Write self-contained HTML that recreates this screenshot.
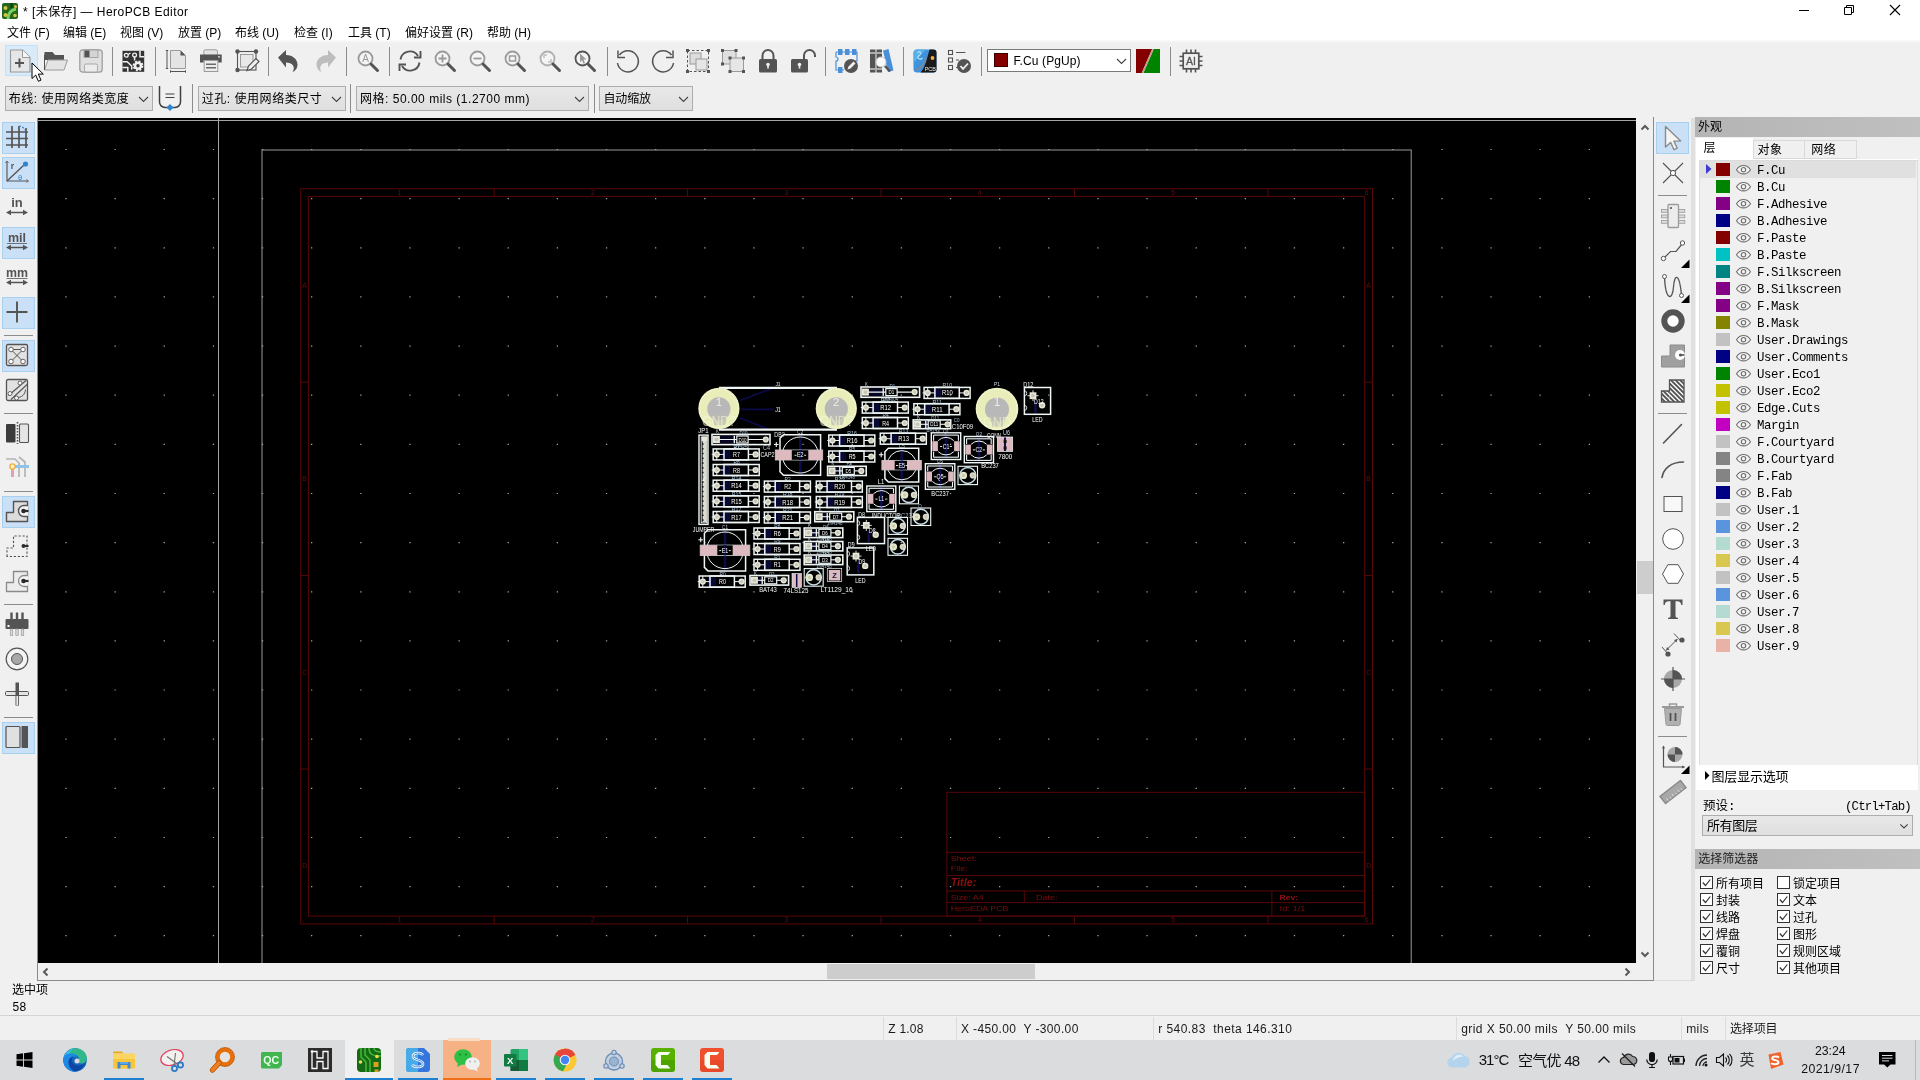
<!DOCTYPE html>
<html lang="zh-CN"><head><meta charset="utf-8"><title>HeroPCB Editor</title>
<style>
html,body{margin:0;padding:0;}
body{width:1920px;height:1080px;overflow:hidden;position:relative;background:#f0f0f0;font-family:"Liberation Sans","Noto Sans CJK SC",sans-serif;font-size:12px;color:#000;}
#root{position:absolute;left:0;top:0;width:1920px;height:1080px;will-change:transform;}
.a{position:absolute;}
.t{position:absolute;line-height:0;white-space:pre;font-family:"Liberation Sans","Noto Sans CJK SC",sans-serif;font-size:12px;}
.m{position:absolute;line-height:0;white-space:pre;font-family:"Liberation Mono","Noto Sans CJK SC",monospace;font-size:12px;}
svg{overflow:visible;}
svg text{font-family:"Liberation Sans","Noto Sans CJK SC",sans-serif;}
</style></head>
<body>
<div id="root">
<div class="a" style="left:0px;top:0px;width:1920px;height:39px;background:#fff;"></div><div class="a" style="left:0px;top:39px;width:1920px;height:4px;background:linear-gradient(#fff,#f0f0f0);"></div><svg class="a" style="left:2px;top:3px;" width="16" height="16" viewBox="0 0 16 16"><rect x="0" y="0" width="16" height="16" rx="2" fill="#1f6a1f"/><path d="M6 16c0-6 3-9 8-10" stroke="#7fd060" stroke-width="3" fill="none"/><path d="M9.500 0v5" stroke="#0d3d0d" stroke-width="2"/><circle cx="3.500" cy="5" r="2" fill="#d8c040"/><circle cx="3.500" cy="12" r="2" fill="#d8c040"/><circle cx="13" cy="12.500" r="1.800" fill="#d8c040"/><circle cx="13.500" cy="3.500" r="1.500" fill="#d8c040"/></svg><div class="t" style="top:11.84px;left:23px;letter-spacing:0.45px;">* [未保存] — HeroPCB Editor</div><svg class="a" style="left:1799px;top:5px;" width="102" height="11" viewBox="0 0 102 11"><path d="M0 5.500h10" stroke="#000" stroke-width="1"/><path d="M45.500 2.500h7v7h-7zM47.500 2.500v-2h7v7h-2" fill="none" stroke="#000" stroke-width="1"/><path d="M91 0l10 10M101 0l-10 10" stroke="#000" stroke-width="1.100"/></svg><div class="t" style="top:32.84px;left:7px;">文件 (F)</div><div class="t" style="top:32.84px;left:63px;">编辑 (E)</div><div class="t" style="top:32.84px;left:120px;">视图 (V)</div><div class="t" style="top:32.84px;left:178px;">放置 (P)</div><div class="t" style="top:32.84px;left:235px;">布线 (U)</div><div class="t" style="top:32.84px;left:294px;">检查 (I)</div><div class="t" style="top:32.84px;left:348px;">工具 (T)</div><div class="t" style="top:32.84px;left:405px;">偏好设置 (R)</div><div class="t" style="top:32.84px;left:487px;">帮助 (H)</div><div class="a" style="left:5px;top:45px;width:33px;height:31px;background:#d9ebf9;border:1px solid #c4e0f6;box-sizing:border-box;"></div><svg class="a" style="left:9px;top:49px;" width="24" height="24" viewBox="0 0 24 24"><path d="M1.500 1h12l7.500 7.500v14.500h-19.500z" fill="#e6e6e6" stroke="#9a9a9a" stroke-width="1.200" stroke-linejoin="round"/><path d="M13.500 1v7.500h7.500" fill="#f6f6f6" stroke="#9a9a9a" stroke-width="1"/><path d="M10.500 9.500v9M6 14h9" stroke="#545454" stroke-width="2" fill="none"/></svg><svg class="a" style="left:43.5px;top:49px;" width="24" height="24" viewBox="0 0 24 24"><path d="M0.5 3h8l2.5 3h9v5h-20z" fill="#545454"/><path d="M0.5 21l3.5-10h19.5l-3.5 10z" fill="#e4e4e4" stroke="#9a9a9a" stroke-width="1"/><path d="M0.5 6v15" stroke="#545454" stroke-width="1"/></svg><svg class="a" style="left:78.5px;top:49px;" width="24" height="24" viewBox="0 0 24 24"><rect x="0.8" y="0.8" width="22.4" height="22.4" rx="3" fill="#e0e0e0" stroke="#9a9a9a" stroke-width="1.2"/><rect x="5" y="1" width="14" height="7.5" fill="#d4d4d4" stroke="#9a9a9a" stroke-width=".8"/><rect x="5.5" y="1.5" width="5" height="6.5" fill="#545454"/><rect x="5.5" y="15" width="13" height="8" rx="1.5" fill="#ececec" stroke="#9a9a9a" stroke-width=".8"/></svg><div class="a" style="left:112.0px;top:47px;width:1px;height:29px;background:#8c8c8c;"></div><svg class="a" style="left:122px;top:49px;" width="24" height="24" viewBox="0 0 24 24"><rect x="0.500" y="1.800" width="21.700" height="21" fill="#343434"/><path d="M0.500 12.700h4.600l4.600 4.300v3.500M12.600 8v3.500M18 1.800v6h4.200M0.500 18.500h5.300v4.300" stroke="#f0f0f0" stroke-width="1.500" fill="none"/><circle cx="4.300" cy="6.300" r="1.900" fill="#343434" stroke="#f0f0f0" stroke-width="1.300"/><path d="M6 5.500l2.500-1.500" stroke="#f0f0f0" stroke-width="1.300"/><circle cx="12.600" cy="6" r="1.900" fill="#343434" stroke="#f0f0f0" stroke-width="1.300"/><circle cx="16" cy="16.800" r="4.300" fill="#f0f0f0" stroke="#f0f0f0" stroke-width="2.200" stroke-dasharray="1.800 1.580"/><circle cx="16" cy="16.800" r="3.800" fill="#f0f0f0"/><circle cx="16" cy="16.800" r="1.700" fill="#343434"/></svg><div class="a" style="left:155.0px;top:47px;width:1px;height:29px;background:#8c8c8c;"></div><svg class="a" style="left:164.5px;top:49px;" width="24" height="24" viewBox="0 0 24 24"><path d="M5.5 1.5h10l5 5v13h-15z" fill="#e4e4e4" stroke="#9a9a9a" stroke-width="1"/><path d="M15.5 1.5l5 5h-5z" fill="#545454"/><path d="M2 1.5v18M0.8 1.5h2.4M0.8 19.5h2.4" stroke="#545454" stroke-width="1" fill="none"/><path d="M5.5 22.5h15M5.5 21.3v2.4M20.5 21.3v2.4" stroke="#545454" stroke-width="1" fill="none"/></svg><svg class="a" style="left:199px;top:49px;" width="24" height="24" viewBox="0 0 24 24"><rect x="4.800" y="0.800" width="13.700" height="5.500" rx="1.500" fill="#e4e4e4" stroke="#9a9a9a" stroke-width="1"/><path d="M1 5.500h21.700v8h-3.700v-2.500h-14.300v2.500h-3.700z" fill="#545454"/><rect x="5.200" y="11.500" width="13.600" height="11" fill="#ececec" stroke="#9a9a9a" stroke-width="1"/><path d="M7 15.200h10M7 18.700h10" stroke="#6a6a6a" stroke-width="1.600"/><circle cx="20" cy="7.800" r="0.900" fill="#f0f0f0"/></svg><svg class="a" style="left:234.5px;top:49px;" width="24" height="24" viewBox="0 0 24 24"><rect x="2.5" y="2.5" width="18.5" height="18.5" fill="none" stroke="#545454" stroke-width="1.1"/><rect x="5.5" y="5.5" width="12.5" height="12.5" fill="#e8e8e8" stroke="#9a9a9a" stroke-width="1"/><circle cx="2.5" cy="2.5" r="2.2" fill="#545454"/><circle cx="21" cy="2.5" r="2.2" fill="#545454"/><circle cx="2.5" cy="21" r="2.2" fill="#545454"/><path d="M12 21.5l1.5-4.5 7.5-7.5 3 3-7.5 7.5z" fill="#f0f0f0" stroke="#545454" stroke-width="1.2"/></svg><div class="a" style="left:268.0px;top:47px;width:1px;height:29px;background:#8c8c8c;"></div><svg class="a" style="left:276.5px;top:49px;" width="24" height="24" viewBox="0 0 24 24"><path d="M1 8.5l8-7.5v5c7 0 11.5 4.5 11.5 9.5 0 3.5-2 6.5-5 7.5 1.5-2.5 1.800-4.500 .5-6.500-1.500-2.300-4-3-7-3v5z" fill="#545454"/></svg><svg class="a" style="left:313px;top:49px;" width="24" height="24" viewBox="0 0 24 24"><path d="M23 8.5l-8-7.5v5c-7 0-11.500 4.500-11.500 9.500 0 3.500 2 6.500 5 7.500-1.500-2.500-1.800-4.500-.5-6.500 1.500-2.300 4-3 7-3v5z" fill="#bdbdbd"/></svg><div class="a" style="left:346.0px;top:47px;width:1px;height:29px;background:#8c8c8c;"></div><svg class="a" style="left:355.5px;top:49px;" width="24" height="24" viewBox="0 0 24 24"><circle cx="9.5" cy="9.5" r="7" fill="#f4f4f4" stroke="#9a9a9a" stroke-width="1.8"/><line x1="15" y1="15" x2="21.5" y2="21.5" stroke="#545454" stroke-width="3" stroke-linecap="round"/><text x="9.5" y="13.2" font-size="10" text-anchor="middle" fill="#9a9a9a" font-family="Liberation Sans, sans-serif">A</text></svg><div class="a" style="left:389.0px;top:47px;width:1px;height:29px;background:#8c8c8c;"></div><svg class="a" style="left:398px;top:49px;" width="24" height="24" viewBox="0 0 24 24"><path d="M2.500 10.500a9.500 9.500 0 0 1 17.500-3.500" fill="none" stroke="#545454" stroke-width="1.9"/><path d="M21.500 13.500a9.500 9.500 0 0 1-17.500 3.500" fill="none" stroke="#545454" stroke-width="1.9"/><path d="M16 8.500h6.500v-6.500" fill="none" stroke="#545454" stroke-width="1.900"/><path d="M8 15.500h-6.500v6.500" fill="none" stroke="#545454" stroke-width="1.900"/></svg><svg class="a" style="left:433px;top:49px;" width="24" height="24" viewBox="0 0 24 24"><circle cx="9.5" cy="9.5" r="7" fill="#f4f4f4" stroke="#9a9a9a" stroke-width="1.8"/><line x1="15" y1="15" x2="21.5" y2="21.5" stroke="#545454" stroke-width="3" stroke-linecap="round"/><path d="M9.5 5.500v8M5.500 9.500h8" stroke="#9a9a9a" stroke-width="1.8"/></svg><svg class="a" style="left:467.5px;top:49px;" width="24" height="24" viewBox="0 0 24 24"><circle cx="9.5" cy="9.5" r="7" fill="#f4f4f4" stroke="#9a9a9a" stroke-width="1.8"/><line x1="15" y1="15" x2="21.5" y2="21.5" stroke="#545454" stroke-width="3" stroke-linecap="round"/><path d="M5.500 9.500h8" stroke="#9a9a9a" stroke-width="1.8"/></svg><svg class="a" style="left:502.5px;top:49px;" width="24" height="24" viewBox="0 0 24 24"><circle cx="9.5" cy="9.5" r="7" fill="#f4f4f4" stroke="#9a9a9a" stroke-width="1.8"/><line x1="15" y1="15" x2="21.5" y2="21.5" stroke="#545454" stroke-width="3" stroke-linecap="round"/><rect x="6.500" y="7" width="6" height="5" fill="none" stroke="#9a9a9a" stroke-width="1.5"/></svg><svg class="a" style="left:538px;top:49px;" width="24" height="24" viewBox="0 0 24 24"><circle cx="9.5" cy="9.5" r="7" fill="#f4f4f4" stroke="#b0b0b0" stroke-width="1.8"/><line x1="15" y1="15" x2="21.5" y2="21.5" stroke="#545454" stroke-width="3" stroke-linecap="round"/><path d="M6 9v-3h3M13 10v3h-3" fill="none" stroke="#c0c0c0" stroke-width="1.5"/></svg><svg class="a" style="left:573px;top:49px;" width="24" height="24" viewBox="0 0 24 24"><circle cx="9.5" cy="9.5" r="7" fill="#f4f4f4" stroke="#545454" stroke-width="1.8"/><line x1="15" y1="15" x2="21.5" y2="21.5" stroke="#545454" stroke-width="3" stroke-linecap="round"/><path d="M7 4.500l6.500 6h-3l1.500 3.500-1.500.7-1.500-3.500-2 2z" fill="#9a9a9a"/></svg><div class="a" style="left:607.0px;top:47px;width:1px;height:29px;background:#8c8c8c;"></div><svg class="a" style="left:615.5px;top:49px;" width="24" height="24" viewBox="0 0 24 24"><path d="M3.500 6a10.500 10.500 0 1 1-2 8" fill="none" stroke="#545454" stroke-width="1.500"/><path d="M2 1.500v7h7" fill="none" stroke="#545454" stroke-width="1.500"/></svg><svg class="a" style="left:650.5px;top:49px;" width="24" height="24" viewBox="0 0 24 24"><path d="M20.500 6a10.500 10.500 0 1 0 2 8" fill="none" stroke="#545454" stroke-width="1.500"/><path d="M22 1.500v7h-7" fill="none" stroke="#545454" stroke-width="1.500"/></svg><svg class="a" style="left:686px;top:49px;" width="24" height="24" viewBox="0 0 24 24"><rect x="1.5" y="1.5" width="21" height="21" fill="none" stroke="#545454" stroke-width="1" stroke-dasharray="2.500 2"/><rect x="4" y="4" width="11" height="11" fill="#dcdcdc" stroke="#9a9a9a" stroke-width="1"/><rect x="10" y="10" width="11" height="11" fill="#e6e6e6" stroke="#9a9a9a" stroke-width="1"/><rect x="0" y="0" width="3" height="3" fill="#545454"/><rect x="21" y="0" width="3" height="3" fill="#545454"/><rect x="0" y="21" width="3" height="3" fill="#545454"/><rect x="21" y="21" width="3" height="3" fill="#545454"/></svg><svg class="a" style="left:721px;top:49px;" width="24" height="24" viewBox="0 0 24 24"><rect x="1.500" y="1.500" width="13.500" height="13.500" fill="#e0e0e0" stroke="#9a9a9a" stroke-width="1"/><rect x="9" y="9" width="13.500" height="13.500" fill="#e6e6e6" stroke="#9a9a9a" stroke-width="1"/><rect x="0" y="0" width="3" height="3" fill="#545454"/><rect x="13.5" y="0" width="3" height="3" fill="#545454"/><rect x="0" y="13.5" width="3" height="3" fill="#545454"/><rect x="7.5" y="7.5" width="3" height="3" fill="#545454"/><rect x="21" y="7.5" width="3" height="3" fill="#545454"/><rect x="7.5" y="21" width="3" height="3" fill="#545454"/><rect x="21" y="21" width="3" height="3" fill="#545454"/></svg><svg class="a" style="left:756px;top:49px;" width="24" height="24" viewBox="0 0 24 24"><path d="M6.500 10v-3.500a5.500 5.500 0 0 1 11 0v3.500" fill="none" stroke="#545454" stroke-width="2"/><rect x="3" y="10" width="18" height="13.500" rx="1.500" fill="#545454"/><circle cx="12" cy="15.500" r="1.800" fill="#f0f0f0"/><rect x="11.200" y="15.500" width="1.600" height="4" fill="#f0f0f0"/></svg><svg class="a" style="left:791px;top:49px;" width="24" height="24" viewBox="0 0 24 24"><path d="M13 10v-3.500a5.500 5.500 0 0 1 11 0v1.500" fill="none" stroke="#545454" stroke-width="2"/><rect x="0" y="10" width="17" height="13.500" rx="1.500" fill="#545454"/><circle cx="8.500" cy="15.500" r="1.800" fill="#f0f0f0"/><rect x="7.700" y="15.500" width="1.600" height="4" fill="#f0f0f0"/></svg><div class="a" style="left:825.0px;top:47px;width:1px;height:29px;background:#8c8c8c;"></div><svg class="a" style="left:834px;top:49px;" width="24" height="24" viewBox="0 0 24 24"><path d="M2 3h21v9h-2M2 3v5a2 2 0 0 1 0 4v9h8" fill="none" stroke="#4a90d9" stroke-width="1.200"/><rect x="4" y="0" width="4.500" height="6" fill="#4a90d9"/><rect x="11" y="0" width="4.500" height="6" fill="#4a90d9"/><rect x="18" y="0" width="4.500" height="6" fill="#4a90d9"/><rect x="4" y="18" width="4.500" height="6" fill="#4a90d9"/><circle cx="17" cy="17" r="7" fill="#545454"/><path d="M13.500 20.500l1-3 5-5 2 2-5 5z" fill="#f0f0f0"/></svg><svg class="a" style="left:869px;top:49px;" width="24" height="24" viewBox="0 0 24 24"><rect x="1" y="0.500" width="5.500" height="23" fill="#545454"/><rect x="7.500" y="0.500" width="5.500" height="23" fill="#545454"/><path d="M1 4h5.500M7.500 4h5.500M1 20h5.500M7.500 20h5.500" stroke="#c8c8c8" stroke-width="1.300"/><path d="M14 1.500l5.500-1.500 5 21.500-5.500 1.500z" fill="#4a90d9"/><circle cx="12" cy="13" r="5" fill="#fafafa" stroke="#c8c8c8" stroke-width="1"/><line x1="16" y1="17" x2="21" y2="22.500" stroke="#545454" stroke-width="2.500"/></svg><div class="a" style="left:903.0px;top:47px;width:1px;height:29px;background:#8c8c8c;"></div><svg class="a" style="left:912.5px;top:49px;" width="24" height="24" viewBox="0 0 24 24"><rect x="0.5" y="0.5" width="23" height="23" rx="3.500" fill="#3f92dc"/><path d="M0.500 14v-10a3.500 3.500 0 0 1 3.500-3.500h9z" fill="#56b0ea"/><path d="M16.500 0.500h4a3 3 0 0 1 3 3v17a3 3 0 0 1-3 3h-13c4.500-4.500 6.500-14 9-23z" fill="#1a1a1a"/><path d="M2 21c5-1 9.500-5 11.500-13" stroke="#7c8894" stroke-width="1.600" fill="none"/><path d="M4.500 4c1.500-2 4.500-1 3 1s-4 3-2 4.500 3.500 0 4-.5" stroke="#b8e4fa" stroke-width="1.100" fill="none"/><circle cx="19.500" cy="9" r="1.900" fill="#f0b040"/><text x="17.300" y="21.800" font-size="5.500" fill="#e8e8e8" text-anchor="middle" font-family="Liberation Sans, sans-serif">PCB</text></svg><svg class="a" style="left:947px;top:49px;" width="24" height="24" viewBox="0 0 24 24"><rect x="1.500" y="1.5" width="4" height="4" fill="#f4f4f4" stroke="#545454" stroke-width="1.100"/><rect x="1.500" y="9" width="4" height="4" fill="#f4f4f4" stroke="#545454" stroke-width="1.100"/><rect x="1.500" y="16.5" width="4" height="4" fill="#f4f4f4" stroke="#545454" stroke-width="1.100"/><path d="M9 3.500h9.500M9 11h3M9 18.500h2" stroke="#545454" stroke-width="1.200"/><circle cx="17" cy="17" r="7" fill="#545454"/><path d="M13.500 17l2.500 2.800 5-5.300" fill="none" stroke="#f0f0f0" stroke-width="1.800"/></svg><div class="a" style="left:981.0px;top:47px;width:1px;height:29px;background:#8c8c8c;"></div><svg class="a" style="left:1136px;top:49px;" width="24" height="24" viewBox="0 0 24 24"><rect x="0" y="0" width="24" height="24" fill="#840000"/><path d="M17.500 0h6.500v24h-17z" fill="#008400"/><path d="M6.500 24L17 0" stroke="#f4f4e8" stroke-width="1.700"/><path d="M6.500 24L17 0" stroke="#702020" stroke-width=".5"/></svg><div class="a" style="left:1170.0px;top:47px;width:1px;height:29px;background:#8c8c8c;"></div><svg class="a" style="left:1179px;top:49px;" width="24" height="24" viewBox="0 0 24 24"><rect x="4.200" y="4.200" width="15.600" height="15.600" fill="none" stroke="#545454" stroke-width="1.700"/><path d="M7.5 0.500v3.500M7.5 20v3.500M0.500 7.5h3.500M20 7.5h3.500" stroke="#545454" stroke-width="1.600"/><path d="M12 0.500v3.500M12 20v3.500M0.500 12h3.500M20 12h3.500" stroke="#545454" stroke-width="1.600"/><path d="M16.5 0.500v3.500M16.5 20v3.500M0.500 16.5h3.500M20 16.5h3.500" stroke="#545454" stroke-width="1.600"/><text x="12" y="16" font-size="10.500" text-anchor="middle" fill="#545454" font-family="Liberation Sans, sans-serif" stroke="#545454" stroke-width=".3">AI</text></svg><div class="a" style="left:987px;top:49px;width:144px;height:23px;background:#fff;border:1px solid #7a7a7a;box-sizing:border-box;"></div><div class="a" style="left:994px;top:53px;width:14px;height:14px;background:#840000;border:1px solid #3a0000;box-sizing:border-box;"></div><div class="t" style="top:60.84px;left:1013.5px;letter-spacing:0.11px;">F.Cu (PgUp)</div><svg class="a" style="left:1117.0px;top:58.75px;" width="9" height="4.5" viewBox="0 0 9 4.5"><path d="M0 0l4.5 4.5l4.5 -4.5" fill="none" stroke="#444" stroke-width="1.1"/></svg><svg class="a" style="left:31px;top:62px;" width="14" height="21" viewBox="0 0 14 21"><path d="M1 1v15.500l3.700-3.400 2.700 6.200 2.600-1.200-2.700-6h5z" fill="#fff" stroke="#000" stroke-width="1" stroke-linejoin="miter"/></svg><div class="a" style="left:5px;top:86px;width:148px;height:25px;background:linear-gradient(#e8e8e8,#dfdfdf);border:1px solid #adadad;box-sizing:border-box;"></div><div class="t" style="top:98.84px;left:8.7px;letter-spacing:0.54px;">布线: 使用网络类宽度</div><svg class="a" style="left:139.0px;top:96.75px;" width="9" height="4.5" viewBox="0 0 9 4.5"><path d="M0 0l4.5 4.5l4.5 -4.5" fill="none" stroke="#444" stroke-width="1.1"/></svg><svg class="a" style="left:158.3px;top:85.3px;" width="24" height="24" viewBox="0 0 24 24"><path d="M1.5 1v16a5.500 5.500 0 0 0 5.500 5.500h10a5.500 5.500 0 0 0 5.500-5.500v-16" fill="none" stroke="#404040" stroke-width="1.500"/><path d="M7.500 9h9M7.500 12.500h9" stroke="#404040" stroke-width="1.100"/><rect x="9.500" y="20" width="5" height="5" transform="rotate(45 12 22.500)" fill="#2e86d0"/></svg><div class="a" style="left:192px;top:84px;width:1px;height:29px;background:#8c8c8c;"></div><div class="a" style="left:198px;top:86px;width:148px;height:25px;background:linear-gradient(#e8e8e8,#dfdfdf);border:1px solid #adadad;box-sizing:border-box;"></div><div class="t" style="top:98.84px;left:201.7px;letter-spacing:0.54px;">过孔: 使用网络类尺寸</div><svg class="a" style="left:332.0px;top:96.75px;" width="9" height="4.5" viewBox="0 0 9 4.5"><path d="M0 0l4.5 4.5l4.5 -4.5" fill="none" stroke="#444" stroke-width="1.1"/></svg><div class="a" style="left:350px;top:84px;width:1px;height:29px;background:#8c8c8c;"></div><div class="a" style="left:356px;top:86px;width:233px;height:25px;background:linear-gradient(#e8e8e8,#dfdfdf);border:1px solid #adadad;box-sizing:border-box;"></div><div class="t" style="top:98.84px;left:360px;letter-spacing:0.51px;">网格: 50.00 mils (1.2700 mm)</div><svg class="a" style="left:575.0px;top:96.75px;" width="9" height="4.5" viewBox="0 0 9 4.5"><path d="M0 0l4.5 4.5l4.5 -4.5" fill="none" stroke="#444" stroke-width="1.1"/></svg><div class="a" style="left:593.5px;top:84px;width:1px;height:29px;background:#8c8c8c;"></div><div class="a" style="left:599px;top:86px;width:94px;height:25px;background:linear-gradient(#e8e8e8,#dfdfdf);border:1px solid #adadad;box-sizing:border-box;"></div><div class="t" style="top:98.84px;left:603.5px;letter-spacing:-0.13px;">自动缩放</div><svg class="a" style="left:679.0px;top:96.75px;" width="9" height="4.5" viewBox="0 0 9 4.5"><path d="M0 0l4.5 4.5l4.5 -4.5" fill="none" stroke="#444" stroke-width="1.1"/></svg><svg class="a" style="left:38px;top:118px;overflow:hidden" width="1598" height="845" viewBox="0 0 1598 845"><rect x="0" y="0" width="1598" height="845" fill="#000"/><rect x="224.0" y="32.0" width="1149.2" height="814.6" fill="none" stroke="#9a9a9a" stroke-width="1"/><rect x="262.7" y="70.7" width="1071.8" height="735.2" fill="none" stroke="#5a0707" stroke-width="1"/><rect x="270.4" y="78.4" width="1056.3" height="719.7" fill="none" stroke="#5a0707" stroke-width="1"/><line x1="456.2" y1="70.7" x2="456.2" y2="78.4" stroke="#5a0707" stroke-width="1" /><line x1="456.2" y1="798.1" x2="456.2" y2="805.9" stroke="#5a0707" stroke-width="1" /><line x1="649.6" y1="70.7" x2="649.6" y2="78.4" stroke="#5a0707" stroke-width="1" /><line x1="649.6" y1="798.1" x2="649.6" y2="805.9" stroke="#5a0707" stroke-width="1" /><line x1="843.1" y1="70.7" x2="843.1" y2="78.4" stroke="#5a0707" stroke-width="1" /><line x1="843.1" y1="798.1" x2="843.1" y2="805.9" stroke="#5a0707" stroke-width="1" /><line x1="1036.6" y1="70.7" x2="1036.6" y2="78.4" stroke="#5a0707" stroke-width="1" /><line x1="1036.6" y1="798.1" x2="1036.6" y2="805.9" stroke="#5a0707" stroke-width="1" /><line x1="1230.0" y1="70.7" x2="1230.0" y2="78.4" stroke="#5a0707" stroke-width="1" /><line x1="1230.0" y1="798.1" x2="1230.0" y2="805.9" stroke="#5a0707" stroke-width="1" /><text x="359.4" y="77.0" font-size="6.8" fill="#640b0b" text-anchor="start" >1</text><text x="359.4" y="804.4" font-size="6.8" fill="#640b0b" text-anchor="start" >1</text><text x="552.9" y="77.0" font-size="6.8" fill="#640b0b" text-anchor="start" >2</text><text x="552.9" y="804.4" font-size="6.8" fill="#640b0b" text-anchor="start" >2</text><text x="746.4" y="77.0" font-size="6.8" fill="#640b0b" text-anchor="start" >3</text><text x="746.4" y="804.4" font-size="6.8" fill="#640b0b" text-anchor="start" >3</text><text x="939.8" y="77.0" font-size="6.8" fill="#640b0b" text-anchor="start" >4</text><text x="939.8" y="804.4" font-size="6.8" fill="#640b0b" text-anchor="start" >4</text><text x="1133.3" y="77.0" font-size="6.8" fill="#640b0b" text-anchor="start" >5</text><text x="1133.3" y="804.4" font-size="6.8" fill="#640b0b" text-anchor="start" >5</text><text x="1326.7" y="77.0" font-size="6.8" fill="#640b0b" text-anchor="start" >6</text><text x="1326.7" y="804.4" font-size="6.8" fill="#640b0b" text-anchor="start" >6</text><line x1="262.7" y1="264.2" x2="270.4" y2="264.2" stroke="#5a0707" stroke-width="1" /><line x1="1326.7" y1="264.2" x2="1334.5" y2="264.2" stroke="#5a0707" stroke-width="1" /><line x1="262.7" y1="457.6" x2="270.4" y2="457.6" stroke="#5a0707" stroke-width="1" /><line x1="1326.7" y1="457.6" x2="1334.5" y2="457.6" stroke="#5a0707" stroke-width="1" /><line x1="262.7" y1="651.1" x2="270.4" y2="651.1" stroke="#5a0707" stroke-width="1" /><line x1="1326.7" y1="651.1" x2="1334.5" y2="651.1" stroke="#5a0707" stroke-width="1" /><text x="266.6" y="169.8" font-size="6.8" fill="#640b0b" text-anchor="middle" >A</text><text x="1330.6" y="169.8" font-size="6.8" fill="#640b0b" text-anchor="middle" >A</text><text x="266.6" y="363.3" font-size="6.8" fill="#640b0b" text-anchor="middle" >B</text><text x="1330.6" y="363.3" font-size="6.8" fill="#640b0b" text-anchor="middle" >B</text><text x="266.6" y="556.8" font-size="6.8" fill="#640b0b" text-anchor="middle" >C</text><text x="1330.6" y="556.8" font-size="6.8" fill="#640b0b" text-anchor="middle" >C</text><text x="266.6" y="750.2" font-size="6.8" fill="#640b0b" text-anchor="middle" >D</text><text x="1330.6" y="750.2" font-size="6.8" fill="#640b0b" text-anchor="middle" >D</text><rect x="908.9" y="674.3" width="417.9" height="123.8" fill="none" stroke="#5a0707" stroke-width="1"/><line x1="908.9" y1="784.6" x2="1326.7" y2="784.6" stroke="#5a0707" stroke-width="1" /><line x1="908.9" y1="773.0" x2="1326.7" y2="773.0" stroke="#5a0707" stroke-width="1" /><line x1="908.9" y1="757.5" x2="1326.7" y2="757.5" stroke="#5a0707" stroke-width="1" /><line x1="908.9" y1="734.3" x2="1326.7" y2="734.3" stroke="#5a0707" stroke-width="1" /><line x1="986.3" y1="773.0" x2="986.3" y2="784.6" stroke="#5a0707" stroke-width="1" /><line x1="1233.9" y1="773.0" x2="1233.9" y2="798.1" stroke="#5a0707" stroke-width="1" /><text transform="translate(912.7 743.0) scale(1.12 1)" font-size="8.1" fill="#7c0d0d" text-anchor="start" >Sheet:</text><text transform="translate(912.7 753.4) scale(1.12 1)" font-size="8.1" fill="#7c0d0d" text-anchor="start" >File:</text><text x="912.7" y="768.3" font-size="10.8" fill="#8c0f0f" text-anchor="start" font-weight="bold" font-style="italic">Title:</text><text transform="translate(912.7 782.1) scale(1.12 1)" font-size="8.1" fill="#7c0d0d" text-anchor="start" >Size: A4</text><text transform="translate(997.9 782.1) scale(1.12 1)" font-size="8.1" fill="#7c0d0d" text-anchor="start" >Date:</text><text transform="translate(1241.6 782.1) scale(1.05 1)" font-size="8.1" fill="#9a1010" text-anchor="start" font-weight="bold">Rev:</text><text transform="translate(912.7 792.9) scale(1.1 1)" font-size="8.1" fill="#7c0d0d" text-anchor="start" >HeroEDA PCB</text><text transform="translate(1241.6 792.9) scale(1.15 1)" font-size="8.1" fill="#7c0d0d" text-anchor="start" >Id: 1/1</text><path d="M27.3 31.5h1.3M76.5 31.5h1.3M125.6 31.5h1.3M174.8 31.5h1.3M223.9 31.5h1.3M273.0 31.5h1.3M322.2 31.5h1.3M371.3 31.5h1.3M420.5 31.5h1.3M469.6 31.5h1.3M518.7 31.5h1.3M567.9 31.5h1.3M617.0 31.5h1.3M666.2 31.5h1.3M715.3 31.5h1.3M764.4 31.5h1.3M813.6 31.5h1.3M862.7 31.5h1.3M911.9 31.5h1.3M961.0 31.5h1.3M1010.1 31.5h1.3M1059.3 31.5h1.3M1108.4 31.5h1.3M1157.6 31.5h1.3M1206.7 31.5h1.3M1255.8 31.5h1.3M1305.0 31.5h1.3M1354.1 31.5h1.3M1403.3 31.5h1.3M1452.4 31.5h1.3M1501.5 31.5h1.3M1550.7 31.5h1.3M27.3 80.6h1.3M76.5 80.6h1.3M125.6 80.6h1.3M174.8 80.6h1.3M223.9 80.6h1.3M273.0 80.6h1.3M322.2 80.6h1.3M371.3 80.6h1.3M420.5 80.6h1.3M469.6 80.6h1.3M518.7 80.6h1.3M567.9 80.6h1.3M617.0 80.6h1.3M666.2 80.6h1.3M715.3 80.6h1.3M764.4 80.6h1.3M813.6 80.6h1.3M862.7 80.6h1.3M911.9 80.6h1.3M961.0 80.6h1.3M1010.1 80.6h1.3M1059.3 80.6h1.3M1108.4 80.6h1.3M1157.6 80.6h1.3M1206.7 80.6h1.3M1255.8 80.6h1.3M1305.0 80.6h1.3M1354.1 80.6h1.3M1403.3 80.6h1.3M1452.4 80.6h1.3M1501.5 80.6h1.3M1550.7 80.6h1.3M27.3 129.8h1.3M76.5 129.8h1.3M125.6 129.8h1.3M174.8 129.8h1.3M223.9 129.8h1.3M273.0 129.8h1.3M322.2 129.8h1.3M371.3 129.8h1.3M420.5 129.8h1.3M469.6 129.8h1.3M518.7 129.8h1.3M567.9 129.8h1.3M617.0 129.8h1.3M666.2 129.8h1.3M715.3 129.8h1.3M764.4 129.8h1.3M813.6 129.8h1.3M862.7 129.8h1.3M911.9 129.8h1.3M961.0 129.8h1.3M1010.1 129.8h1.3M1059.3 129.8h1.3M1108.4 129.8h1.3M1157.6 129.8h1.3M1206.7 129.8h1.3M1255.8 129.8h1.3M1305.0 129.8h1.3M1354.1 129.8h1.3M1403.3 129.8h1.3M1452.4 129.8h1.3M1501.5 129.8h1.3M1550.7 129.8h1.3M27.3 178.9h1.3M76.5 178.9h1.3M125.6 178.9h1.3M174.8 178.9h1.3M223.9 178.9h1.3M273.0 178.9h1.3M322.2 178.9h1.3M371.3 178.9h1.3M420.5 178.9h1.3M469.6 178.9h1.3M518.7 178.9h1.3M567.9 178.9h1.3M617.0 178.9h1.3M666.2 178.9h1.3M715.3 178.9h1.3M764.4 178.9h1.3M813.6 178.9h1.3M862.7 178.9h1.3M911.9 178.9h1.3M961.0 178.9h1.3M1010.1 178.9h1.3M1059.3 178.9h1.3M1108.4 178.9h1.3M1157.6 178.9h1.3M1206.7 178.9h1.3M1255.8 178.9h1.3M1305.0 178.9h1.3M1354.1 178.9h1.3M1403.3 178.9h1.3M1452.4 178.9h1.3M1501.5 178.9h1.3M1550.7 178.9h1.3M27.3 228.1h1.3M76.5 228.1h1.3M125.6 228.1h1.3M174.8 228.1h1.3M223.9 228.1h1.3M273.0 228.1h1.3M322.2 228.1h1.3M371.3 228.1h1.3M420.5 228.1h1.3M469.6 228.1h1.3M518.7 228.1h1.3M567.9 228.1h1.3M617.0 228.1h1.3M666.2 228.1h1.3M715.3 228.1h1.3M764.4 228.1h1.3M813.6 228.1h1.3M862.7 228.1h1.3M911.9 228.1h1.3M961.0 228.1h1.3M1010.1 228.1h1.3M1059.3 228.1h1.3M1108.4 228.1h1.3M1157.6 228.1h1.3M1206.7 228.1h1.3M1255.8 228.1h1.3M1305.0 228.1h1.3M1354.1 228.1h1.3M1403.3 228.1h1.3M1452.4 228.1h1.3M1501.5 228.1h1.3M1550.7 228.1h1.3M27.3 277.2h1.3M76.5 277.2h1.3M125.6 277.2h1.3M174.8 277.2h1.3M223.9 277.2h1.3M273.0 277.2h1.3M322.2 277.2h1.3M371.3 277.2h1.3M420.5 277.2h1.3M469.6 277.2h1.3M518.7 277.2h1.3M567.9 277.2h1.3M617.0 277.2h1.3M666.2 277.2h1.3M715.3 277.2h1.3M764.4 277.2h1.3M813.6 277.2h1.3M862.7 277.2h1.3M911.9 277.2h1.3M961.0 277.2h1.3M1010.1 277.2h1.3M1059.3 277.2h1.3M1108.4 277.2h1.3M1157.6 277.2h1.3M1206.7 277.2h1.3M1255.8 277.2h1.3M1305.0 277.2h1.3M1354.1 277.2h1.3M1403.3 277.2h1.3M1452.4 277.2h1.3M1501.5 277.2h1.3M1550.7 277.2h1.3M27.3 326.3h1.3M76.5 326.3h1.3M125.6 326.3h1.3M174.8 326.3h1.3M223.9 326.3h1.3M273.0 326.3h1.3M322.2 326.3h1.3M371.3 326.3h1.3M420.5 326.3h1.3M469.6 326.3h1.3M518.7 326.3h1.3M567.9 326.3h1.3M617.0 326.3h1.3M666.2 326.3h1.3M715.3 326.3h1.3M764.4 326.3h1.3M813.6 326.3h1.3M862.7 326.3h1.3M911.9 326.3h1.3M961.0 326.3h1.3M1010.1 326.3h1.3M1059.3 326.3h1.3M1108.4 326.3h1.3M1157.6 326.3h1.3M1206.7 326.3h1.3M1255.8 326.3h1.3M1305.0 326.3h1.3M1354.1 326.3h1.3M1403.3 326.3h1.3M1452.4 326.3h1.3M1501.5 326.3h1.3M1550.7 326.3h1.3M27.3 375.5h1.3M76.5 375.5h1.3M125.6 375.5h1.3M174.8 375.5h1.3M223.9 375.5h1.3M273.0 375.5h1.3M322.2 375.5h1.3M371.3 375.5h1.3M420.5 375.5h1.3M469.6 375.5h1.3M518.7 375.5h1.3M567.9 375.5h1.3M617.0 375.5h1.3M666.2 375.5h1.3M715.3 375.5h1.3M764.4 375.5h1.3M813.6 375.5h1.3M862.7 375.5h1.3M911.9 375.5h1.3M961.0 375.5h1.3M1010.1 375.5h1.3M1059.3 375.5h1.3M1108.4 375.5h1.3M1157.6 375.5h1.3M1206.7 375.5h1.3M1255.8 375.5h1.3M1305.0 375.5h1.3M1354.1 375.5h1.3M1403.3 375.5h1.3M1452.4 375.5h1.3M1501.5 375.5h1.3M1550.7 375.5h1.3M27.3 424.6h1.3M76.5 424.6h1.3M125.6 424.6h1.3M174.8 424.6h1.3M223.9 424.6h1.3M273.0 424.6h1.3M322.2 424.6h1.3M371.3 424.6h1.3M420.5 424.6h1.3M469.6 424.6h1.3M518.7 424.6h1.3M567.9 424.6h1.3M617.0 424.6h1.3M666.2 424.6h1.3M715.3 424.6h1.3M764.4 424.6h1.3M813.6 424.6h1.3M862.7 424.6h1.3M911.9 424.6h1.3M961.0 424.6h1.3M1010.1 424.6h1.3M1059.3 424.6h1.3M1108.4 424.6h1.3M1157.6 424.6h1.3M1206.7 424.6h1.3M1255.8 424.6h1.3M1305.0 424.6h1.3M1354.1 424.6h1.3M1403.3 424.6h1.3M1452.4 424.6h1.3M1501.5 424.6h1.3M1550.7 424.6h1.3M27.3 473.8h1.3M76.5 473.8h1.3M125.6 473.8h1.3M174.8 473.8h1.3M223.9 473.8h1.3M273.0 473.8h1.3M322.2 473.8h1.3M371.3 473.8h1.3M420.5 473.8h1.3M469.6 473.8h1.3M518.7 473.8h1.3M567.9 473.8h1.3M617.0 473.8h1.3M666.2 473.8h1.3M715.3 473.8h1.3M764.4 473.8h1.3M813.6 473.8h1.3M862.7 473.8h1.3M911.9 473.8h1.3M961.0 473.8h1.3M1010.1 473.8h1.3M1059.3 473.8h1.3M1108.4 473.8h1.3M1157.6 473.8h1.3M1206.7 473.8h1.3M1255.8 473.8h1.3M1305.0 473.8h1.3M1354.1 473.8h1.3M1403.3 473.8h1.3M1452.4 473.8h1.3M1501.5 473.8h1.3M1550.7 473.8h1.3M27.3 522.9h1.3M76.5 522.9h1.3M125.6 522.9h1.3M174.8 522.9h1.3M223.9 522.9h1.3M273.0 522.9h1.3M322.2 522.9h1.3M371.3 522.9h1.3M420.5 522.9h1.3M469.6 522.9h1.3M518.7 522.9h1.3M567.9 522.9h1.3M617.0 522.9h1.3M666.2 522.9h1.3M715.3 522.9h1.3M764.4 522.9h1.3M813.6 522.9h1.3M862.7 522.9h1.3M911.9 522.9h1.3M961.0 522.9h1.3M1010.1 522.9h1.3M1059.3 522.9h1.3M1108.4 522.9h1.3M1157.6 522.9h1.3M1206.7 522.9h1.3M1255.8 522.9h1.3M1305.0 522.9h1.3M1354.1 522.9h1.3M1403.3 522.9h1.3M1452.4 522.9h1.3M1501.5 522.9h1.3M1550.7 522.9h1.3M27.3 572.0h1.3M76.5 572.0h1.3M125.6 572.0h1.3M174.8 572.0h1.3M223.9 572.0h1.3M273.0 572.0h1.3M322.2 572.0h1.3M371.3 572.0h1.3M420.5 572.0h1.3M469.6 572.0h1.3M518.7 572.0h1.3M567.9 572.0h1.3M617.0 572.0h1.3M666.2 572.0h1.3M715.3 572.0h1.3M764.4 572.0h1.3M813.6 572.0h1.3M862.7 572.0h1.3M911.9 572.0h1.3M961.0 572.0h1.3M1010.1 572.0h1.3M1059.3 572.0h1.3M1108.4 572.0h1.3M1157.6 572.0h1.3M1206.7 572.0h1.3M1255.8 572.0h1.3M1305.0 572.0h1.3M1354.1 572.0h1.3M1403.3 572.0h1.3M1452.4 572.0h1.3M1501.5 572.0h1.3M1550.7 572.0h1.3M27.3 621.2h1.3M76.5 621.2h1.3M125.6 621.2h1.3M174.8 621.2h1.3M223.9 621.2h1.3M273.0 621.2h1.3M322.2 621.2h1.3M371.3 621.2h1.3M420.5 621.2h1.3M469.6 621.2h1.3M518.7 621.2h1.3M567.9 621.2h1.3M617.0 621.2h1.3M666.2 621.2h1.3M715.3 621.2h1.3M764.4 621.2h1.3M813.6 621.2h1.3M862.7 621.2h1.3M911.9 621.2h1.3M961.0 621.2h1.3M1010.1 621.2h1.3M1059.3 621.2h1.3M1108.4 621.2h1.3M1157.6 621.2h1.3M1206.7 621.2h1.3M1255.8 621.2h1.3M1305.0 621.2h1.3M1354.1 621.2h1.3M1403.3 621.2h1.3M1452.4 621.2h1.3M1501.5 621.2h1.3M1550.7 621.2h1.3M27.3 670.3h1.3M76.5 670.3h1.3M125.6 670.3h1.3M174.8 670.3h1.3M223.9 670.3h1.3M273.0 670.3h1.3M322.2 670.3h1.3M371.3 670.3h1.3M420.5 670.3h1.3M469.6 670.3h1.3M518.7 670.3h1.3M567.9 670.3h1.3M617.0 670.3h1.3M666.2 670.3h1.3M715.3 670.3h1.3M764.4 670.3h1.3M813.6 670.3h1.3M862.7 670.3h1.3M911.9 670.3h1.3M961.0 670.3h1.3M1010.1 670.3h1.3M1059.3 670.3h1.3M1108.4 670.3h1.3M1157.6 670.3h1.3M1206.7 670.3h1.3M1255.8 670.3h1.3M1305.0 670.3h1.3M1354.1 670.3h1.3M1403.3 670.3h1.3M1452.4 670.3h1.3M1501.5 670.3h1.3M1550.7 670.3h1.3M27.3 719.5h1.3M76.5 719.5h1.3M125.6 719.5h1.3M174.8 719.5h1.3M223.9 719.5h1.3M273.0 719.5h1.3M322.2 719.5h1.3M371.3 719.5h1.3M420.5 719.5h1.3M469.6 719.5h1.3M518.7 719.5h1.3M567.9 719.5h1.3M617.0 719.5h1.3M666.2 719.5h1.3M715.3 719.5h1.3M764.4 719.5h1.3M813.6 719.5h1.3M862.7 719.5h1.3M911.9 719.5h1.3M961.0 719.5h1.3M1010.1 719.5h1.3M1059.3 719.5h1.3M1108.4 719.5h1.3M1157.6 719.5h1.3M1206.7 719.5h1.3M1255.8 719.5h1.3M1305.0 719.5h1.3M1354.1 719.5h1.3M1403.3 719.5h1.3M1452.4 719.5h1.3M1501.5 719.5h1.3M1550.7 719.5h1.3M27.3 768.6h1.3M76.5 768.6h1.3M125.6 768.6h1.3M174.8 768.6h1.3M223.9 768.6h1.3M273.0 768.6h1.3M322.2 768.6h1.3M371.3 768.6h1.3M420.5 768.6h1.3M469.6 768.6h1.3M518.7 768.6h1.3M567.9 768.6h1.3M617.0 768.6h1.3M666.2 768.6h1.3M715.3 768.6h1.3M764.4 768.6h1.3M813.6 768.6h1.3M862.7 768.6h1.3M911.9 768.6h1.3M961.0 768.6h1.3M1010.1 768.6h1.3M1059.3 768.6h1.3M1108.4 768.6h1.3M1157.6 768.6h1.3M1206.7 768.6h1.3M1255.8 768.6h1.3M1305.0 768.6h1.3M1354.1 768.6h1.3M1403.3 768.6h1.3M1452.4 768.6h1.3M1501.5 768.6h1.3M1550.7 768.6h1.3M27.3 817.7h1.3M76.5 817.7h1.3M125.6 817.7h1.3M174.8 817.7h1.3M223.9 817.7h1.3M273.0 817.7h1.3M322.2 817.7h1.3M371.3 817.7h1.3M420.5 817.7h1.3M469.6 817.7h1.3M518.7 817.7h1.3M567.9 817.7h1.3M617.0 817.7h1.3M666.2 817.7h1.3M715.3 817.7h1.3M764.4 817.7h1.3M813.6 817.7h1.3M862.7 817.7h1.3M911.9 817.7h1.3M961.0 817.7h1.3M1010.1 817.7h1.3M1059.3 817.7h1.3M1108.4 817.7h1.3M1157.6 817.7h1.3M1206.7 817.7h1.3M1255.8 817.7h1.3M1305.0 817.7h1.3M1354.1 817.7h1.3M1403.3 817.7h1.3M1452.4 817.7h1.3M1501.5 817.7h1.3M1550.7 817.7h1.3" stroke="#a2a2a2" stroke-width="1.2" fill="none"/><line x1="180.5" y1="0.0" x2="180.5" y2="845.0" stroke="#a4a4a4" stroke-width="1" /><line x1="0.0" y1="2.5" x2="1598.0" y2="2.5" stroke="#a4a4a4" stroke-width="1" /><g transform="translate(-38,-118)"><line x1="740.0" y1="400.5" x2="772.0" y2="388.5" stroke="#0a0a48" stroke-width="1.8" /><line x1="741.0" y1="409.3" x2="774.0" y2="409.3" stroke="#0a0a48" stroke-width="1.8" /><line x1="740.0" y1="418.0" x2="768.0" y2="429.0" stroke="#0a0a48" stroke-width="1.8" /><line x1="719.0" y1="387.8" x2="837.0" y2="387.8" stroke="#eef6f6" stroke-width="2.2" /><line x1="719.0" y1="429.6" x2="837.0" y2="429.6" stroke="#eef6f6" stroke-width="2.2" /><circle cx="718.9" cy="408.4" r="20.6" fill="#e9edba" stroke="none" stroke-width="1"/><circle cx="718.9" cy="408.4" r="19.4" fill="none" stroke="#f0f2cc" stroke-width="1.2"/><circle cx="718.9" cy="408.9" r="11.6" fill="#b8b8b8" stroke="none" stroke-width="1"/><path d="M711.5 414.6L714.4 425.3H725.1L727.6 414.6Z" fill="#bcbcb4" opacity=".7"/><text x="718.9" y="405.5" font-size="11.536000000000001" fill="#ececea" text-anchor="middle" >1</text><text transform="translate(718.9 426.1) scale(0.82 1)" font-size="14.832" fill="#f6f8dc" text-anchor="middle" opacity="0.6" >GND?</text><circle cx="836.3" cy="408.4" r="20.6" fill="#e9edba" stroke="none" stroke-width="1"/><circle cx="836.3" cy="408.4" r="19.4" fill="none" stroke="#f0f2cc" stroke-width="1.2"/><circle cx="836.3" cy="408.9" r="11.6" fill="#b8b8b8" stroke="none" stroke-width="1"/><path d="M828.9 414.6L831.8 425.3H842.5L845.0 414.6Z" fill="#bcbcb4" opacity=".7"/><text x="836.3" y="405.5" font-size="11.536000000000001" fill="#ececea" text-anchor="middle" >2</text><text transform="translate(836.3 426.1) scale(0.82 1)" font-size="14.832" fill="#f6f8dc" text-anchor="middle" opacity="0.6" >GND?</text><text transform="translate(778.0 386.3) scale(0.82 1)" font-size="6" fill="#e8f0f0" text-anchor="middle" >J1</text><text transform="translate(778.0 412.0) scale(0.82 1)" font-size="6.4" fill="#fff" text-anchor="middle" >J1</text><circle cx="997.0" cy="409.0" r="21.3" fill="#e9edba" stroke="none" stroke-width="1"/><circle cx="997.0" cy="409.0" r="20.1" fill="none" stroke="#f0f2cc" stroke-width="1.2"/><circle cx="997.0" cy="409.5" r="12.0" fill="#b8b8b8" stroke="none" stroke-width="1"/><path d="M989.3 415.4L992.3 426.5H1003.4L1005.9 415.4Z" fill="#bcbcb4" opacity=".7"/><text x="997.0" y="406.0" font-size="11.928" fill="#ececea" text-anchor="middle" >1</text><text transform="translate(997.0 427.3) scale(0.82 1)" font-size="15.336" fill="#f6f8dc" text-anchor="middle" opacity="0.6" >GND</text><text transform="translate(997.0 386.0) scale(0.82 1)" font-size="6" fill="#c8dcec" text-anchor="middle" >P1</text><text x="703.5" y="433.0" font-size="7.3" fill="#fff" text-anchor="middle" textLength="10.3" lengthAdjust="spacingAndGlyphs" >JP1</text><rect x="699.0" y="435.1" width="9.0" height="89.3" fill="none" stroke="#eef6f6" stroke-width="1.4"/><rect x="701.2" y="437.2" width="5.6" height="85.6" fill="none" stroke="#eef6f6" stroke-width="0.9"/><rect x="702.6" y="441.0" width="4.2" height="81.0" fill="#dcdcd0"/><rect x="702.2" y="443.3" width="1.3" height="1.5" fill="#000"/><rect x="702.2" y="448.1" width="1.3" height="1.5" fill="#000"/><rect x="702.2" y="452.8" width="1.3" height="1.5" fill="#000"/><rect x="702.2" y="457.6" width="1.3" height="1.5" fill="#000"/><rect x="702.2" y="462.3" width="1.3" height="1.5" fill="#000"/><rect x="702.2" y="467.1" width="1.3" height="1.5" fill="#000"/><rect x="702.2" y="471.8" width="1.3" height="1.5" fill="#000"/><rect x="702.2" y="476.6" width="1.3" height="1.5" fill="#000"/><rect x="702.2" y="481.3" width="1.3" height="1.5" fill="#000"/><rect x="702.2" y="486.1" width="1.3" height="1.5" fill="#000"/><rect x="702.2" y="490.8" width="1.3" height="1.5" fill="#000"/><rect x="702.2" y="495.6" width="1.3" height="1.5" fill="#000"/><rect x="702.2" y="500.3" width="1.3" height="1.5" fill="#000"/><rect x="702.2" y="505.1" width="1.3" height="1.5" fill="#000"/><rect x="702.2" y="509.8" width="1.3" height="1.5" fill="#000"/><rect x="702.2" y="514.5" width="1.3" height="1.5" fill="#000"/><rect x="702.2" y="519.3" width="1.3" height="1.5" fill="#000"/><rect x="701.6" y="436.4" width="5.6" height="4.8" fill="#e8e8d8"/><text x="703.7" y="481.0" font-size="5" fill="#fff" text-anchor="middle" >2</text><text x="703.5" y="532.0" font-size="7.3" fill="#fff" text-anchor="middle" textLength="21.3" lengthAdjust="spacingAndGlyphs" >JUMPER</text><rect x="868.4" y="388.5" width="13.9" height="7.3" fill="#060624"/><line x1="865.4" y1="392.1" x2="914.6" y2="392.1" stroke="#eef6f6" stroke-width="1.1" /><rect x="861.0" y="387.0" width="58.6" height="10.3" fill="none" stroke="#eef6f6" stroke-width="1.6"/><rect x="885.8" y="388.6" width="11.3" height="7.0" fill="#000"/><rect x="885.8" y="388.6" width="11.3" height="7.0" fill="none" stroke="#eef6f6" stroke-width="1.2"/><line x1="883.2" y1="388.3" x2="883.2" y2="395.9" stroke="#eef6f6" stroke-width="1.4" /><rect x="861.9" y="388.6" width="7.0" height="7.0" fill="#e8e8d6"/><circle cx="865.4" cy="392.1" r="1.9" fill="#c6c6be" stroke="none" stroke-width="1"/><circle cx="914.6" cy="392.1" r="3.1" fill="#e8e8d6" stroke="none" stroke-width="1"/><circle cx="914.6" cy="392.1" r="1.7" fill="#c6c6be" stroke="none" stroke-width="1"/><text transform="translate(891.4 394.2) scale(0.8 1)" font-size="5.6" fill="#fff" text-anchor="middle" >D1</text><text transform="translate(866.4 386.0) scale(0.82 1)" font-size="5.2" fill="#d8e8f0" text-anchor="middle" opacity="0.9" >K</text><text transform="translate(892.4 387.5) scale(0.82 1)" font-size="5.4" fill="#c4dcee" text-anchor="middle" opacity="0.9" >D1</text><text transform="translate(890.4 400.6) scale(0.82 1)" font-size="5.4" fill="#c4dcee" text-anchor="middle" opacity="0.85" >1N4004</text><rect x="932.6" y="388.9" width="8.5" height="8.0" fill="#090936"/><line x1="927.7" y1="387.4" x2="927.7" y2="398.4" stroke="#eef6f6" stroke-width="1" /><line x1="922.6" y1="392.9" x2="934.9" y2="392.9" stroke="#eef6f6" stroke-width="1" /><line x1="959.3" y1="392.9" x2="966.5" y2="392.9" stroke="#eef6f6" stroke-width="1" /><rect x="924.1" y="387.4" width="46.0" height="11.0" fill="none" stroke="#eef6f6" stroke-width="1.5"/><rect x="934.9" y="387.4" width="24.4" height="11.0" fill="none" stroke="#eef6f6" stroke-width="1.5"/><circle cx="927.7" cy="392.9" r="3.1" fill="#e8e8d6" stroke="none" stroke-width="1"/><circle cx="927.7" cy="392.9" r="1.7" fill="#c6c6be" stroke="none" stroke-width="1"/><circle cx="966.5" cy="392.9" r="3.1" fill="#e8e8d6" stroke="none" stroke-width="1"/><circle cx="966.5" cy="392.9" r="1.7" fill="#c6c6be" stroke="none" stroke-width="1"/><text x="947.4" y="395.4" font-size="6.8" fill="#fff" text-anchor="middle" textLength="10.7" lengthAdjust="spacingAndGlyphs" >R10</text><text x="947.4" y="387.2" font-size="5.6" fill="#c4dcee" text-anchor="middle" textLength="9.6" lengthAdjust="spacingAndGlyphs" opacity="0.9" >R10</text><rect x="870.8" y="403.6" width="8.5" height="8.0" fill="#090936"/><line x1="865.9" y1="402.1" x2="865.9" y2="413.1" stroke="#eef6f6" stroke-width="1" /><line x1="860.8" y1="407.6" x2="873.1" y2="407.6" stroke="#eef6f6" stroke-width="1" /><line x1="897.5" y1="407.6" x2="904.7" y2="407.6" stroke="#eef6f6" stroke-width="1" /><rect x="862.3" y="402.1" width="46.0" height="11.0" fill="none" stroke="#eef6f6" stroke-width="1.5"/><rect x="873.1" y="402.1" width="24.4" height="11.0" fill="none" stroke="#eef6f6" stroke-width="1.5"/><circle cx="865.9" cy="407.6" r="3.1" fill="#e8e8d6" stroke="none" stroke-width="1"/><circle cx="865.9" cy="407.6" r="1.7" fill="#c6c6be" stroke="none" stroke-width="1"/><circle cx="904.7" cy="407.6" r="3.1" fill="#e8e8d6" stroke="none" stroke-width="1"/><circle cx="904.7" cy="407.6" r="1.7" fill="#c6c6be" stroke="none" stroke-width="1"/><text x="885.6" y="410.1" font-size="6.8" fill="#fff" text-anchor="middle" textLength="10.7" lengthAdjust="spacingAndGlyphs" >R12</text><text x="885.6" y="401.9" font-size="5.6" fill="#c4dcee" text-anchor="middle" textLength="9.6" lengthAdjust="spacingAndGlyphs" opacity="0.9" >R12</text><rect x="922.4" y="405.2" width="8.5" height="8.0" fill="#090936"/><line x1="917.5" y1="403.7" x2="917.5" y2="414.7" stroke="#eef6f6" stroke-width="1" /><line x1="912.4" y1="409.2" x2="924.7" y2="409.2" stroke="#eef6f6" stroke-width="1" /><line x1="949.1" y1="409.2" x2="956.3" y2="409.2" stroke="#eef6f6" stroke-width="1" /><rect x="913.9" y="403.7" width="46.0" height="11.0" fill="none" stroke="#eef6f6" stroke-width="1.5"/><rect x="924.7" y="403.7" width="24.4" height="11.0" fill="none" stroke="#eef6f6" stroke-width="1.5"/><circle cx="917.5" cy="409.2" r="3.1" fill="#e8e8d6" stroke="none" stroke-width="1"/><circle cx="917.5" cy="409.2" r="1.7" fill="#c6c6be" stroke="none" stroke-width="1"/><circle cx="956.3" cy="409.2" r="3.1" fill="#e8e8d6" stroke="none" stroke-width="1"/><circle cx="956.3" cy="409.2" r="1.7" fill="#c6c6be" stroke="none" stroke-width="1"/><text x="937.2" y="411.7" font-size="6.8" fill="#fff" text-anchor="middle" textLength="10.7" lengthAdjust="spacingAndGlyphs" >R11</text><text x="937.2" y="403.5" font-size="5.6" fill="#c4dcee" text-anchor="middle" textLength="9.6" lengthAdjust="spacingAndGlyphs" opacity="0.9" >R11</text><rect x="870.8" y="419.0" width="8.5" height="8.0" fill="#090936"/><line x1="865.9" y1="417.5" x2="865.9" y2="428.5" stroke="#eef6f6" stroke-width="1" /><line x1="860.8" y1="423.0" x2="873.1" y2="423.0" stroke="#eef6f6" stroke-width="1" /><line x1="897.5" y1="423.0" x2="904.7" y2="423.0" stroke="#eef6f6" stroke-width="1" /><rect x="862.3" y="417.5" width="46.0" height="11.0" fill="none" stroke="#eef6f6" stroke-width="1.5"/><rect x="873.1" y="417.5" width="24.4" height="11.0" fill="none" stroke="#eef6f6" stroke-width="1.5"/><circle cx="865.9" cy="423.0" r="3.1" fill="#e8e8d6" stroke="none" stroke-width="1"/><circle cx="865.9" cy="423.0" r="1.7" fill="#c6c6be" stroke="none" stroke-width="1"/><circle cx="904.7" cy="423.0" r="3.1" fill="#e8e8d6" stroke="none" stroke-width="1"/><circle cx="904.7" cy="423.0" r="1.7" fill="#c6c6be" stroke="none" stroke-width="1"/><text x="885.6" y="425.5" font-size="6.8" fill="#fff" text-anchor="middle" textLength="6.9" lengthAdjust="spacingAndGlyphs" >R4</text><text x="885.6" y="417.3" font-size="5.6" fill="#c4dcee" text-anchor="middle" textLength="6.2" lengthAdjust="spacingAndGlyphs" opacity="0.9" >R4</text><rect x="920.6" y="421.4" width="4.1" height="5.8" fill="#060624"/><line x1="917.6" y1="424.3" x2="947.6" y2="424.3" stroke="#eef6f6" stroke-width="1.1" /><rect x="913.2" y="419.9" width="37.5" height="8.8" fill="none" stroke="#eef6f6" stroke-width="1.6"/><rect x="928.2" y="420.8" width="12.0" height="7.0" fill="#000"/><rect x="928.2" y="420.8" width="12.0" height="7.0" fill="none" stroke="#eef6f6" stroke-width="1.2"/><line x1="925.8" y1="420.5" x2="925.8" y2="428.1" stroke="#eef6f6" stroke-width="1.4" /><rect x="914.1" y="420.8" width="7.0" height="7.0" fill="#e8e8d6"/><circle cx="917.6" cy="424.3" r="1.9" fill="#c6c6be" stroke="none" stroke-width="1"/><circle cx="947.6" cy="424.3" r="3.1" fill="#e8e8d6" stroke="none" stroke-width="1"/><circle cx="947.6" cy="424.3" r="1.7" fill="#c6c6be" stroke="none" stroke-width="1"/><text transform="translate(934.2 426.4) scale(0.8 1)" font-size="5.6" fill="#fff" text-anchor="middle" >D11</text><text transform="translate(918.6 418.9) scale(0.82 1)" font-size="5.2" fill="#d8e8f0" text-anchor="middle" opacity="0.9" >K</text><text transform="translate(935.2 420.4) scale(0.82 1)" font-size="5.4" fill="#c4dcee" text-anchor="middle" opacity="0.9" >D11</text><text transform="translate(933.2 432.0) scale(0.82 1)" font-size="5.4" fill="#c4dcee" text-anchor="middle" opacity="0.85" >BAT43</text><text x="962.5" y="429.2" font-size="7.3" fill="#f4f8f8" text-anchor="middle" textLength="21.3" lengthAdjust="spacingAndGlyphs" >C10F09</text><text transform="translate(956.5 421.5) scale(0.82 1)" font-size="5.5" fill="#b8d4e4" text-anchor="middle" opacity="0.85" >C0</text><line x1="1035.4" y1="400.9" x2="1035.4" y2="412.8" stroke="#0e0e4a" stroke-width="2.6" /><rect x="1024.4" y="387.5" width="26.2" height="26.8" fill="none" stroke="#eef6f6" stroke-width="1.5"/><line x1="1027.5" y1="395.7" x2="1038.5" y2="395.7" stroke="#eef6f6" stroke-width="0.9" /><line x1="1033.0" y1="390.2" x2="1033.0" y2="401.2" stroke="#eef6f6" stroke-width="0.9" /><rect x="1029.6" y="392.3" width="6.8" height="6.8" fill="#e8e8d6"/><circle cx="1033.0" cy="395.7" r="1.9" fill="#c6c6be" stroke="none" stroke-width="1"/><circle cx="1042.1" cy="405.3" r="3.2" fill="#e8e8d6" stroke="none" stroke-width="1"/><circle cx="1042.1" cy="405.3" r="1.8" fill="#c6c6be" stroke="none" stroke-width="1"/><ellipse cx="1025.7" cy="393.4" rx="1" ry="2.2" fill="#000" stroke="#eef6f6" stroke-width=".8"/><ellipse cx="1025.7" cy="407.9" rx="1" ry="2.2" fill="#000" stroke="#eef6f6" stroke-width=".8"/><text transform="translate(1038.8 403.6) scale(0.8 1)" font-size="6.4" fill="#fff" text-anchor="middle" >D12</text><text x="1028.3" y="386.7" font-size="7.3" fill="#f4f8f8" text-anchor="middle" textLength="10.3" lengthAdjust="spacingAndGlyphs" >D12</text><text x="1037.5" y="421.9" font-size="7.3" fill="#fff" text-anchor="middle" textLength="10.3" lengthAdjust="spacingAndGlyphs" >LED</text><rect x="719.4" y="435.9" width="13.9" height="7.2" fill="#060624"/><line x1="716.4" y1="439.5" x2="765.8" y2="439.5" stroke="#eef6f6" stroke-width="1.1" /><rect x="712.0" y="434.4" width="58.0" height="10.2" fill="none" stroke="#eef6f6" stroke-width="1.6"/><rect x="736.8" y="436.0" width="11.3" height="7.0" fill="#000"/><rect x="736.8" y="436.0" width="11.3" height="7.0" fill="none" stroke="#eef6f6" stroke-width="1.2"/><line x1="734.3" y1="435.7" x2="734.3" y2="443.3" stroke="#eef6f6" stroke-width="1.4" /><rect x="712.9" y="436.0" width="7.0" height="7.0" fill="#e8e8d6"/><circle cx="716.4" cy="439.5" r="1.9" fill="#c6c6be" stroke="none" stroke-width="1"/><circle cx="765.8" cy="439.5" r="3.1" fill="#e8e8d6" stroke="none" stroke-width="1"/><circle cx="765.8" cy="439.5" r="1.7" fill="#c6c6be" stroke="none" stroke-width="1"/><text transform="translate(742.5 441.6) scale(0.8 1)" font-size="5.6" fill="#fff" text-anchor="middle" >D10</text><text transform="translate(717.4 433.4) scale(0.82 1)" font-size="5.2" fill="#d8e8f0" text-anchor="middle" opacity="0.9" >K</text><text transform="translate(743.5 434.9) scale(0.82 1)" font-size="5.4" fill="#c4dcee" text-anchor="middle" opacity="0.9" >D10</text><text transform="translate(741.5 447.9) scale(0.82 1)" font-size="5.4" fill="#c4dcee" text-anchor="middle" opacity="0.85" >1N4148</text><text transform="translate(766.5 450.0) scale(0.82 1)" font-size="6.6" fill="#c8dcf0" text-anchor="middle" opacity="0.9" >C4</text><text x="767.5" y="457.0" font-size="7.3" fill="#f4f8f8" text-anchor="middle" textLength="14.0" lengthAdjust="spacingAndGlyphs" >CAP2</text><rect x="837.3" y="436.5" width="8.5" height="8.0" fill="#090936"/><line x1="832.4" y1="435.0" x2="832.4" y2="446.0" stroke="#eef6f6" stroke-width="1" /><line x1="827.3" y1="440.5" x2="839.6" y2="440.5" stroke="#eef6f6" stroke-width="1" /><line x1="864.0" y1="440.5" x2="871.2" y2="440.5" stroke="#eef6f6" stroke-width="1" /><rect x="828.8" y="435.0" width="46.0" height="11.0" fill="none" stroke="#eef6f6" stroke-width="1.5"/><rect x="839.6" y="435.0" width="24.4" height="11.0" fill="none" stroke="#eef6f6" stroke-width="1.5"/><circle cx="832.4" cy="440.5" r="3.1" fill="#e8e8d6" stroke="none" stroke-width="1"/><circle cx="832.4" cy="440.5" r="1.7" fill="#c6c6be" stroke="none" stroke-width="1"/><circle cx="871.2" cy="440.5" r="3.1" fill="#e8e8d6" stroke="none" stroke-width="1"/><circle cx="871.2" cy="440.5" r="1.7" fill="#c6c6be" stroke="none" stroke-width="1"/><text x="852.1" y="443.0" font-size="6.8" fill="#fff" text-anchor="middle" textLength="10.7" lengthAdjust="spacingAndGlyphs" >R16</text><text x="852.1" y="434.8" font-size="5.6" fill="#c4dcee" text-anchor="middle" textLength="9.6" lengthAdjust="spacingAndGlyphs" opacity="0.9" >R16</text><rect x="888.8" y="434.7" width="8.5" height="8.0" fill="#090936"/><line x1="883.9" y1="433.2" x2="883.9" y2="444.2" stroke="#eef6f6" stroke-width="1" /><line x1="878.8" y1="438.7" x2="891.1" y2="438.7" stroke="#eef6f6" stroke-width="1" /><line x1="915.5" y1="438.7" x2="922.7" y2="438.7" stroke="#eef6f6" stroke-width="1" /><rect x="880.3" y="433.2" width="46.0" height="11.0" fill="none" stroke="#eef6f6" stroke-width="1.5"/><rect x="891.1" y="433.2" width="24.4" height="11.0" fill="none" stroke="#eef6f6" stroke-width="1.5"/><circle cx="883.9" cy="438.7" r="3.1" fill="#e8e8d6" stroke="none" stroke-width="1"/><circle cx="883.9" cy="438.7" r="1.7" fill="#c6c6be" stroke="none" stroke-width="1"/><circle cx="922.7" cy="438.7" r="3.1" fill="#e8e8d6" stroke="none" stroke-width="1"/><circle cx="922.7" cy="438.7" r="1.7" fill="#c6c6be" stroke="none" stroke-width="1"/><text x="903.6" y="441.2" font-size="6.8" fill="#fff" text-anchor="middle" textLength="10.7" lengthAdjust="spacingAndGlyphs" >R13</text><text x="903.6" y="433.0" font-size="5.6" fill="#c4dcee" text-anchor="middle" textLength="9.6" lengthAdjust="spacingAndGlyphs" opacity="0.9" >R13</text><line x1="946.0" y1="433.8" x2="946.0" y2="458.5" stroke="#0c0c48" stroke-width="2.8" /><rect x="931.3" y="432.8" width="29.4" height="26.7" fill="none" stroke="#eef6f6" stroke-width="1.4"/><line x1="933.6" y1="435.1" x2="933.6" y2="440.7" stroke="#eef6f6" stroke-width="1.1" /><line x1="933.6" y1="451.7" x2="933.6" y2="457.2" stroke="#eef6f6" stroke-width="1.1" /><line x1="958.4" y1="435.1" x2="958.4" y2="440.7" stroke="#eef6f6" stroke-width="1.1" /><line x1="958.4" y1="451.7" x2="958.4" y2="457.2" stroke="#eef6f6" stroke-width="1.1" /><line x1="933.6" y1="435.1" x2="958.4" y2="435.1" stroke="#eef6f6" stroke-width="1.1" /><line x1="933.6" y1="457.2" x2="958.4" y2="457.2" stroke="#eef6f6" stroke-width="1.1" /><rect x="932.3" y="441.2" width="5.6" height="10.0" fill="#dcbac0"/><rect x="954.1" y="441.2" width="5.6" height="10.0" fill="#dcbac0"/><path d="M938.2 440.6A11 11 0 0 1 953.8 440.6" fill="none" stroke="#eef6f6" stroke-width="1"/><path d="M938.2 451.7A11 11 0 0 0 953.8 451.7" fill="none" stroke="#eef6f6" stroke-width="1"/><text transform="translate(946.0 448.5) scale(0.82 1)" font-size="6.4" fill="#fff" text-anchor="middle" >C1</text><line x1="940.0" y1="446.5" x2="942.2" y2="446.5" stroke="#eef6f6" stroke-width="0.9" /><line x1="949.8" y1="446.5" x2="952.0" y2="446.5" stroke="#eef6f6" stroke-width="0.9" /><text transform="translate(946.0 432.5) scale(0.82 1)" font-size="5.6" fill="#d4e6f2" text-anchor="middle" opacity="0.9" >Q1</text><line x1="978.9" y1="437.5" x2="978.9" y2="461.7" stroke="#0c0c48" stroke-width="2.8" /><rect x="964.3" y="436.5" width="29.2" height="26.2" fill="none" stroke="#eef6f6" stroke-width="1.4"/><line x1="966.6" y1="438.8" x2="966.6" y2="444.1" stroke="#eef6f6" stroke-width="1.1" /><line x1="966.6" y1="455.1" x2="966.6" y2="460.4" stroke="#eef6f6" stroke-width="1.1" /><line x1="991.2" y1="438.8" x2="991.2" y2="444.1" stroke="#eef6f6" stroke-width="1.1" /><line x1="991.2" y1="455.1" x2="991.2" y2="460.4" stroke="#eef6f6" stroke-width="1.1" /><line x1="966.6" y1="438.8" x2="991.2" y2="438.8" stroke="#eef6f6" stroke-width="1.1" /><line x1="966.6" y1="460.4" x2="991.2" y2="460.4" stroke="#eef6f6" stroke-width="1.1" /><rect x="965.3" y="444.6" width="5.6" height="10.0" fill="#dcbac0"/><rect x="986.9" y="444.6" width="5.6" height="10.0" fill="#dcbac0"/><path d="M971.1 444.3A11 11 0 0 1 986.7 444.3" fill="none" stroke="#eef6f6" stroke-width="1"/><path d="M971.1 454.9A11 11 0 0 0 986.7 454.9" fill="none" stroke="#eef6f6" stroke-width="1"/><text transform="translate(978.9 451.9) scale(0.82 1)" font-size="6.4" fill="#fff" text-anchor="middle" >C2</text><line x1="972.9" y1="449.9" x2="975.1" y2="449.9" stroke="#eef6f6" stroke-width="0.9" /><line x1="982.7" y1="449.9" x2="984.9" y2="449.9" stroke="#eef6f6" stroke-width="0.9" /><text transform="translate(978.9 436.2) scale(0.82 1)" font-size="5.6" fill="#d4e6f2" text-anchor="middle" opacity="0.9" >Q2</text><text x="994.0" y="437.6" font-size="7.3" fill="#f4f8f8" text-anchor="middle" textLength="14.0" lengthAdjust="spacingAndGlyphs" >CONN</text><text transform="translate(1006.5 435.0) scale(0.82 1)" font-size="6.6" fill="#c8dcf0" text-anchor="middle" >U6</text><rect x="997.4" y="437.0" width="15.3" height="14.4" fill="#dcbac0"/><rect x="997.4" y="437.0" width="15.3" height="14.4" fill="none" stroke="#eef6f6" stroke-width="0.7"/><line x1="1005.0" y1="437.5" x2="1005.0" y2="451.0" stroke="#0b0b50" stroke-width="2" /><rect x="1003.6" y="440.0" width="3.0" height="3.0" fill="#101010"/><rect x="1003.6" y="446.5" width="3.0" height="3.0" fill="#101010"/><text x="1005.3" y="459.4" font-size="7.3" fill="#fff" text-anchor="middle" textLength="14.0" lengthAdjust="spacingAndGlyphs" >7800</text><rect x="721.7" y="450.4" width="8.5" height="8.0" fill="#090936"/><line x1="716.8" y1="448.9" x2="716.8" y2="459.9" stroke="#eef6f6" stroke-width="1" /><line x1="711.7" y1="454.4" x2="724.0" y2="454.4" stroke="#eef6f6" stroke-width="1" /><line x1="748.4" y1="454.4" x2="755.6" y2="454.4" stroke="#eef6f6" stroke-width="1" /><rect x="713.2" y="448.9" width="46.0" height="11.0" fill="none" stroke="#eef6f6" stroke-width="1.5"/><rect x="724.0" y="448.9" width="24.4" height="11.0" fill="none" stroke="#eef6f6" stroke-width="1.5"/><circle cx="716.8" cy="454.4" r="3.1" fill="#e8e8d6" stroke="none" stroke-width="1"/><circle cx="716.8" cy="454.4" r="1.7" fill="#c6c6be" stroke="none" stroke-width="1"/><circle cx="755.6" cy="454.4" r="3.1" fill="#e8e8d6" stroke="none" stroke-width="1"/><circle cx="755.6" cy="454.4" r="1.7" fill="#c6c6be" stroke="none" stroke-width="1"/><text x="736.5" y="456.9" font-size="6.8" fill="#fff" text-anchor="middle" textLength="6.9" lengthAdjust="spacingAndGlyphs" >R7</text><text x="736.5" y="448.7" font-size="5.6" fill="#c4dcee" text-anchor="middle" textLength="6.2" lengthAdjust="spacingAndGlyphs" opacity="0.9" >R7</text><rect x="721.7" y="466.0" width="8.5" height="8.0" fill="#090936"/><line x1="716.8" y1="464.5" x2="716.8" y2="475.5" stroke="#eef6f6" stroke-width="1" /><line x1="711.7" y1="470.0" x2="724.0" y2="470.0" stroke="#eef6f6" stroke-width="1" /><line x1="748.4" y1="470.0" x2="755.6" y2="470.0" stroke="#eef6f6" stroke-width="1" /><rect x="713.2" y="464.5" width="46.0" height="11.0" fill="none" stroke="#eef6f6" stroke-width="1.5"/><rect x="724.0" y="464.5" width="24.4" height="11.0" fill="none" stroke="#eef6f6" stroke-width="1.5"/><circle cx="716.8" cy="470.0" r="3.1" fill="#e8e8d6" stroke="none" stroke-width="1"/><circle cx="716.8" cy="470.0" r="1.7" fill="#c6c6be" stroke="none" stroke-width="1"/><circle cx="755.6" cy="470.0" r="3.1" fill="#e8e8d6" stroke="none" stroke-width="1"/><circle cx="755.6" cy="470.0" r="1.7" fill="#c6c6be" stroke="none" stroke-width="1"/><text x="736.5" y="472.5" font-size="6.8" fill="#fff" text-anchor="middle" textLength="6.9" lengthAdjust="spacingAndGlyphs" >R8</text><text x="736.5" y="464.3" font-size="5.6" fill="#c4dcee" text-anchor="middle" textLength="6.2" lengthAdjust="spacingAndGlyphs" opacity="0.9" >R8</text><rect x="721.7" y="481.7" width="8.5" height="8.0" fill="#090936"/><line x1="716.8" y1="480.2" x2="716.8" y2="491.2" stroke="#eef6f6" stroke-width="1" /><line x1="711.7" y1="485.7" x2="724.0" y2="485.7" stroke="#eef6f6" stroke-width="1" /><line x1="748.4" y1="485.7" x2="755.6" y2="485.7" stroke="#eef6f6" stroke-width="1" /><rect x="713.2" y="480.2" width="46.0" height="11.0" fill="none" stroke="#eef6f6" stroke-width="1.5"/><rect x="724.0" y="480.2" width="24.4" height="11.0" fill="none" stroke="#eef6f6" stroke-width="1.5"/><circle cx="716.8" cy="485.7" r="3.1" fill="#e8e8d6" stroke="none" stroke-width="1"/><circle cx="716.8" cy="485.7" r="1.7" fill="#c6c6be" stroke="none" stroke-width="1"/><circle cx="755.6" cy="485.7" r="3.1" fill="#e8e8d6" stroke="none" stroke-width="1"/><circle cx="755.6" cy="485.7" r="1.7" fill="#c6c6be" stroke="none" stroke-width="1"/><text x="736.5" y="488.2" font-size="6.8" fill="#fff" text-anchor="middle" textLength="10.7" lengthAdjust="spacingAndGlyphs" >R14</text><text x="736.5" y="480.0" font-size="5.6" fill="#c4dcee" text-anchor="middle" textLength="9.6" lengthAdjust="spacingAndGlyphs" opacity="0.9" >R14</text><rect x="721.7" y="497.3" width="8.5" height="8.0" fill="#090936"/><line x1="716.8" y1="495.8" x2="716.8" y2="506.8" stroke="#eef6f6" stroke-width="1" /><line x1="711.7" y1="501.3" x2="724.0" y2="501.3" stroke="#eef6f6" stroke-width="1" /><line x1="748.4" y1="501.3" x2="755.6" y2="501.3" stroke="#eef6f6" stroke-width="1" /><rect x="713.2" y="495.8" width="46.0" height="11.0" fill="none" stroke="#eef6f6" stroke-width="1.5"/><rect x="724.0" y="495.8" width="24.4" height="11.0" fill="none" stroke="#eef6f6" stroke-width="1.5"/><circle cx="716.8" cy="501.3" r="3.1" fill="#e8e8d6" stroke="none" stroke-width="1"/><circle cx="716.8" cy="501.3" r="1.7" fill="#c6c6be" stroke="none" stroke-width="1"/><circle cx="755.6" cy="501.3" r="3.1" fill="#e8e8d6" stroke="none" stroke-width="1"/><circle cx="755.6" cy="501.3" r="1.7" fill="#c6c6be" stroke="none" stroke-width="1"/><text x="736.5" y="503.8" font-size="6.8" fill="#fff" text-anchor="middle" textLength="10.7" lengthAdjust="spacingAndGlyphs" >R15</text><text x="736.5" y="495.6" font-size="5.6" fill="#c4dcee" text-anchor="middle" textLength="9.6" lengthAdjust="spacingAndGlyphs" opacity="0.9" >R15</text><rect x="721.7" y="513.0" width="8.5" height="8.0" fill="#090936"/><line x1="716.8" y1="511.5" x2="716.8" y2="522.5" stroke="#eef6f6" stroke-width="1" /><line x1="711.7" y1="517.0" x2="724.0" y2="517.0" stroke="#eef6f6" stroke-width="1" /><line x1="748.4" y1="517.0" x2="755.6" y2="517.0" stroke="#eef6f6" stroke-width="1" /><rect x="713.2" y="511.5" width="46.0" height="11.0" fill="none" stroke="#eef6f6" stroke-width="1.5"/><rect x="724.0" y="511.5" width="24.4" height="11.0" fill="none" stroke="#eef6f6" stroke-width="1.5"/><circle cx="716.8" cy="517.0" r="3.1" fill="#e8e8d6" stroke="none" stroke-width="1"/><circle cx="716.8" cy="517.0" r="1.7" fill="#c6c6be" stroke="none" stroke-width="1"/><circle cx="755.6" cy="517.0" r="3.1" fill="#e8e8d6" stroke="none" stroke-width="1"/><circle cx="755.6" cy="517.0" r="1.7" fill="#c6c6be" stroke="none" stroke-width="1"/><text x="736.5" y="519.5" font-size="6.8" fill="#fff" text-anchor="middle" textLength="10.7" lengthAdjust="spacingAndGlyphs" >R17</text><text x="736.5" y="511.3" font-size="5.6" fill="#c4dcee" text-anchor="middle" textLength="9.6" lengthAdjust="spacingAndGlyphs" opacity="0.9" >R17</text><line x1="800.3" y1="435.7" x2="800.3" y2="474.3" stroke="#0c0c48" stroke-width="2.6" /><path d="M783.5 434.7H820.6V475.3H783.5L780.0 471.8V438.2Z" fill="none" stroke="#eef6f6" stroke-width="1.5"/><circle cx="800.3" cy="455.0" r="18.0" fill="none" stroke="#eef6f6" stroke-width="1"/><rect x="775.3" y="450.0" width="47.4" height="10.0" fill="none" stroke="#d4e0e0" stroke-width="0.8"/><rect x="791.8" y="450.5" width="16.5" height="9.0" fill="#000"/><rect x="775.3" y="450.0" width="16.5" height="10.0" fill="#dcbac0"/><rect x="808.3" y="450.0" width="14.4" height="10.0" fill="#dcbac0"/><line x1="800.3" y1="450.0" x2="800.3" y2="460.0" stroke="#0c0c48" stroke-width="2.6" /><text transform="translate(800.3 457.4) scale(0.82 1)" font-size="6.6" fill="#fff" text-anchor="middle" >E2</text><line x1="794.5" y1="455.3" x2="796.5" y2="455.3" stroke="#eef6f6" stroke-width="0.9" /><line x1="804.1" y1="455.3" x2="806.1" y2="455.3" stroke="#eef6f6" stroke-width="0.9" /><line x1="774.0" y1="444.5" x2="778.5" y2="444.5" stroke="#eef6f6" stroke-width="1.1" /><line x1="776.3" y1="442.0" x2="776.3" y2="447.0" stroke="#eef6f6" stroke-width="1.1" /><text transform="translate(800.3 434.4) scale(0.82 1)" font-size="5.6" fill="#d4e6f2" text-anchor="middle" opacity="0.9" >C2</text><text x="779.5" y="436.6" font-size="7.3" fill="#f4f8f8" text-anchor="middle" textLength="10.3" lengthAdjust="spacingAndGlyphs" >DB?</text><rect x="837.3" y="452.5" width="8.5" height="8.0" fill="#090936"/><line x1="832.4" y1="451.0" x2="832.4" y2="462.0" stroke="#eef6f6" stroke-width="1" /><line x1="827.3" y1="456.5" x2="839.6" y2="456.5" stroke="#eef6f6" stroke-width="1" /><line x1="864.0" y1="456.5" x2="871.2" y2="456.5" stroke="#eef6f6" stroke-width="1" /><rect x="828.8" y="451.0" width="46.0" height="11.0" fill="none" stroke="#eef6f6" stroke-width="1.5"/><rect x="839.6" y="451.0" width="24.4" height="11.0" fill="none" stroke="#eef6f6" stroke-width="1.5"/><circle cx="832.4" cy="456.5" r="3.1" fill="#e8e8d6" stroke="none" stroke-width="1"/><circle cx="832.4" cy="456.5" r="1.7" fill="#c6c6be" stroke="none" stroke-width="1"/><circle cx="871.2" cy="456.5" r="3.1" fill="#e8e8d6" stroke="none" stroke-width="1"/><circle cx="871.2" cy="456.5" r="1.7" fill="#c6c6be" stroke="none" stroke-width="1"/><text x="852.1" y="459.0" font-size="6.8" fill="#fff" text-anchor="middle" textLength="6.9" lengthAdjust="spacingAndGlyphs" >R5</text><text x="852.1" y="450.8" font-size="5.6" fill="#c4dcee" text-anchor="middle" textLength="6.2" lengthAdjust="spacingAndGlyphs" opacity="0.9" >R5</text><rect x="835.0" y="467.8" width="3.8" height="6.2" fill="#060624"/><line x1="832.0" y1="470.9" x2="861.3" y2="470.9" stroke="#eef6f6" stroke-width="1.1" /><rect x="827.6" y="466.3" width="38.6" height="9.2" fill="none" stroke="#eef6f6" stroke-width="1.6"/><rect x="842.3" y="467.4" width="12.0" height="7.0" fill="#000"/><rect x="842.3" y="467.4" width="12.0" height="7.0" fill="none" stroke="#eef6f6" stroke-width="1.2"/><line x1="839.8" y1="467.1" x2="839.8" y2="474.7" stroke="#eef6f6" stroke-width="1.4" /><rect x="828.5" y="467.4" width="7.0" height="7.0" fill="#e8e8d6"/><circle cx="832.0" cy="470.9" r="1.9" fill="#c6c6be" stroke="none" stroke-width="1"/><circle cx="861.3" cy="470.9" r="3.1" fill="#e8e8d6" stroke="none" stroke-width="1"/><circle cx="861.3" cy="470.9" r="1.7" fill="#c6c6be" stroke="none" stroke-width="1"/><text transform="translate(848.3 473.0) scale(0.8 1)" font-size="5.6" fill="#fff" text-anchor="middle" >D5</text><text transform="translate(833.0 465.3) scale(0.82 1)" font-size="5.2" fill="#d8e8f0" text-anchor="middle" opacity="0.9" >K</text><text transform="translate(849.3 466.8) scale(0.82 1)" font-size="5.4" fill="#c4dcee" text-anchor="middle" opacity="0.9" >D5</text><text transform="translate(847.3 478.8) scale(0.82 1)" font-size="5.4" fill="#c4dcee" text-anchor="middle" opacity="0.85" >1N4148</text><line x1="901.8" y1="449.3" x2="901.8" y2="481.1" stroke="#0c0c48" stroke-width="2.6" /><path d="M888.4 448.3H918.7V482.1H888.4L884.9 478.6V451.8Z" fill="none" stroke="#eef6f6" stroke-width="1.5"/><circle cx="901.8" cy="465.2" r="14.6" fill="none" stroke="#eef6f6" stroke-width="1"/><rect x="881.9" y="460.4" width="39.4" height="9.5" fill="none" stroke="#d4e0e0" stroke-width="0.8"/><rect x="894.7" y="460.9" width="12.3" height="8.5" fill="#000"/><rect x="881.9" y="460.4" width="12.8" height="9.5" fill="#dcbac0"/><rect x="907.0" y="460.4" width="14.3" height="9.5" fill="#dcbac0"/><line x1="901.8" y1="460.4" x2="901.8" y2="469.9" stroke="#0c0c48" stroke-width="2.6" /><text transform="translate(901.8 467.6) scale(0.82 1)" font-size="6.6" fill="#fff" text-anchor="middle" >E5</text><line x1="896.0" y1="465.5" x2="898.0" y2="465.5" stroke="#eef6f6" stroke-width="0.9" /><line x1="905.6" y1="465.5" x2="907.6" y2="465.5" stroke="#eef6f6" stroke-width="0.9" /><line x1="878.9" y1="454.7" x2="883.4" y2="454.7" stroke="#eef6f6" stroke-width="1.1" /><line x1="881.2" y1="452.2" x2="881.2" y2="457.2" stroke="#eef6f6" stroke-width="1.1" /><text transform="translate(901.8 448.0) scale(0.82 1)" font-size="5.6" fill="#d4e6f2" text-anchor="middle" opacity="0.9" >C5</text><line x1="940.1" y1="464.7" x2="940.1" y2="488.3" stroke="#0c0c48" stroke-width="2.8" /><rect x="925.4" y="463.7" width="29.4" height="25.6" fill="none" stroke="#eef6f6" stroke-width="1.4"/><line x1="927.7" y1="466.0" x2="927.7" y2="471.0" stroke="#eef6f6" stroke-width="1.1" /><line x1="927.7" y1="482.0" x2="927.7" y2="487.0" stroke="#eef6f6" stroke-width="1.1" /><line x1="952.5" y1="466.0" x2="952.5" y2="471.0" stroke="#eef6f6" stroke-width="1.1" /><line x1="952.5" y1="482.0" x2="952.5" y2="487.0" stroke="#eef6f6" stroke-width="1.1" /><line x1="927.7" y1="466.0" x2="952.5" y2="466.0" stroke="#eef6f6" stroke-width="1.1" /><line x1="927.7" y1="487.0" x2="952.5" y2="487.0" stroke="#eef6f6" stroke-width="1.1" /><rect x="926.4" y="471.5" width="5.6" height="10.0" fill="#dcbac0"/><rect x="948.2" y="471.5" width="5.6" height="10.0" fill="#dcbac0"/><path d="M932.3 471.5A11 11 0 0 1 947.9 471.5" fill="none" stroke="#eef6f6" stroke-width="1"/><path d="M932.3 481.5A11 11 0 0 0 947.9 481.5" fill="none" stroke="#eef6f6" stroke-width="1"/><text transform="translate(940.1 478.8) scale(0.82 1)" font-size="6.4" fill="#fff" text-anchor="middle" >Q5</text><line x1="934.1" y1="476.8" x2="936.3" y2="476.8" stroke="#eef6f6" stroke-width="0.9" /><line x1="943.9" y1="476.8" x2="946.1" y2="476.8" stroke="#eef6f6" stroke-width="0.9" /><text transform="translate(940.1 463.4) scale(0.82 1)" font-size="5.6" fill="#d4e6f2" text-anchor="middle" opacity="0.9" >Q5</text><text x="940.1" y="495.9" font-size="7.3" fill="#fff" text-anchor="middle" textLength="17.6" lengthAdjust="spacingAndGlyphs" >BC237</text><rect x="958.0" y="466.3" width="19.5" height="18.3" fill="none" stroke="#eef6f6" stroke-width="1.1"/><circle cx="967.8" cy="475.4" r="8.0" fill="none" stroke="#c8dce4" stroke-width="1.5"/><line x1="958.8" y1="475.4" x2="969.8" y2="475.4" stroke="#e0e0c8" stroke-width="0.8" /><rect x="966.8" y="470.4" width="3.0" height="10.0" fill="#000"/><circle cx="963.5" cy="475.4" r="3.6" fill="#e4e8c8" stroke="none" stroke-width="1"/><circle cx="972.8" cy="475.4" r="3.1" fill="#dcdcc8" stroke="none" stroke-width="1"/><circle cx="963.5" cy="475.4" r="1.6" fill="#c8c8b0" stroke="none" stroke-width="1"/><circle cx="972.8" cy="475.4" r="1.6" fill="#c6c6be" stroke="none" stroke-width="1"/><text x="990.0" y="468.0" font-size="7.3" fill="#fff" text-anchor="middle" textLength="17.6" lengthAdjust="spacingAndGlyphs" >BC237</text><rect x="772.9" y="482.6" width="8.5" height="8.0" fill="#090936"/><line x1="768.0" y1="481.1" x2="768.0" y2="492.1" stroke="#eef6f6" stroke-width="1" /><line x1="762.9" y1="486.6" x2="775.2" y2="486.6" stroke="#eef6f6" stroke-width="1" /><line x1="799.6" y1="486.6" x2="806.8" y2="486.6" stroke="#eef6f6" stroke-width="1" /><rect x="764.4" y="481.1" width="46.0" height="11.0" fill="none" stroke="#eef6f6" stroke-width="1.5"/><rect x="775.2" y="481.1" width="24.4" height="11.0" fill="none" stroke="#eef6f6" stroke-width="1.5"/><circle cx="768.0" cy="486.6" r="3.1" fill="#e8e8d6" stroke="none" stroke-width="1"/><circle cx="768.0" cy="486.6" r="1.7" fill="#c6c6be" stroke="none" stroke-width="1"/><circle cx="806.8" cy="486.6" r="3.1" fill="#e8e8d6" stroke="none" stroke-width="1"/><circle cx="806.8" cy="486.6" r="1.7" fill="#c6c6be" stroke="none" stroke-width="1"/><text x="787.7" y="489.1" font-size="6.8" fill="#fff" text-anchor="middle" textLength="6.9" lengthAdjust="spacingAndGlyphs" >R2</text><text x="787.7" y="480.9" font-size="5.6" fill="#c4dcee" text-anchor="middle" textLength="6.2" lengthAdjust="spacingAndGlyphs" opacity="0.9" >R2</text><rect x="824.8" y="482.6" width="8.5" height="8.0" fill="#090936"/><line x1="819.9" y1="481.1" x2="819.9" y2="492.1" stroke="#eef6f6" stroke-width="1" /><line x1="814.8" y1="486.6" x2="827.1" y2="486.6" stroke="#eef6f6" stroke-width="1" /><line x1="851.5" y1="486.6" x2="858.7" y2="486.6" stroke="#eef6f6" stroke-width="1" /><rect x="816.3" y="481.1" width="46.0" height="11.0" fill="none" stroke="#eef6f6" stroke-width="1.5"/><rect x="827.1" y="481.1" width="24.4" height="11.0" fill="none" stroke="#eef6f6" stroke-width="1.5"/><circle cx="819.9" cy="486.6" r="3.1" fill="#e8e8d6" stroke="none" stroke-width="1"/><circle cx="819.9" cy="486.6" r="1.7" fill="#c6c6be" stroke="none" stroke-width="1"/><circle cx="858.7" cy="486.6" r="3.1" fill="#e8e8d6" stroke="none" stroke-width="1"/><circle cx="858.7" cy="486.6" r="1.7" fill="#c6c6be" stroke="none" stroke-width="1"/><text x="839.6" y="489.1" font-size="6.8" fill="#fff" text-anchor="middle" textLength="10.7" lengthAdjust="spacingAndGlyphs" >R20</text><text x="839.6" y="480.9" font-size="5.6" fill="#c4dcee" text-anchor="middle" textLength="9.6" lengthAdjust="spacingAndGlyphs" opacity="0.9" >R20</text><rect x="772.9" y="498.0" width="8.5" height="8.0" fill="#090936"/><line x1="768.0" y1="496.5" x2="768.0" y2="507.5" stroke="#eef6f6" stroke-width="1" /><line x1="762.9" y1="502.0" x2="775.2" y2="502.0" stroke="#eef6f6" stroke-width="1" /><line x1="799.6" y1="502.0" x2="806.8" y2="502.0" stroke="#eef6f6" stroke-width="1" /><rect x="764.4" y="496.5" width="46.0" height="11.0" fill="none" stroke="#eef6f6" stroke-width="1.5"/><rect x="775.2" y="496.5" width="24.4" height="11.0" fill="none" stroke="#eef6f6" stroke-width="1.5"/><circle cx="768.0" cy="502.0" r="3.1" fill="#e8e8d6" stroke="none" stroke-width="1"/><circle cx="768.0" cy="502.0" r="1.7" fill="#c6c6be" stroke="none" stroke-width="1"/><circle cx="806.8" cy="502.0" r="3.1" fill="#e8e8d6" stroke="none" stroke-width="1"/><circle cx="806.8" cy="502.0" r="1.7" fill="#c6c6be" stroke="none" stroke-width="1"/><text x="787.7" y="504.5" font-size="6.8" fill="#fff" text-anchor="middle" textLength="10.7" lengthAdjust="spacingAndGlyphs" >R18</text><text x="787.7" y="496.3" font-size="5.6" fill="#c4dcee" text-anchor="middle" textLength="9.6" lengthAdjust="spacingAndGlyphs" opacity="0.9" >R18</text><rect x="824.8" y="498.0" width="8.5" height="8.0" fill="#090936"/><line x1="819.9" y1="496.5" x2="819.9" y2="507.5" stroke="#eef6f6" stroke-width="1" /><line x1="814.8" y1="502.0" x2="827.1" y2="502.0" stroke="#eef6f6" stroke-width="1" /><line x1="851.5" y1="502.0" x2="858.7" y2="502.0" stroke="#eef6f6" stroke-width="1" /><rect x="816.3" y="496.5" width="46.0" height="11.0" fill="none" stroke="#eef6f6" stroke-width="1.5"/><rect x="827.1" y="496.5" width="24.4" height="11.0" fill="none" stroke="#eef6f6" stroke-width="1.5"/><circle cx="819.9" cy="502.0" r="3.1" fill="#e8e8d6" stroke="none" stroke-width="1"/><circle cx="819.9" cy="502.0" r="1.7" fill="#c6c6be" stroke="none" stroke-width="1"/><circle cx="858.7" cy="502.0" r="3.1" fill="#e8e8d6" stroke="none" stroke-width="1"/><circle cx="858.7" cy="502.0" r="1.7" fill="#c6c6be" stroke="none" stroke-width="1"/><text x="839.6" y="504.5" font-size="6.8" fill="#fff" text-anchor="middle" textLength="10.7" lengthAdjust="spacingAndGlyphs" >R19</text><text x="839.6" y="496.3" font-size="5.6" fill="#c4dcee" text-anchor="middle" textLength="9.6" lengthAdjust="spacingAndGlyphs" opacity="0.9" >R19</text><rect x="772.9" y="513.5" width="8.5" height="8.0" fill="#090936"/><line x1="768.0" y1="512.0" x2="768.0" y2="523.0" stroke="#eef6f6" stroke-width="1" /><line x1="762.9" y1="517.5" x2="775.2" y2="517.5" stroke="#eef6f6" stroke-width="1" /><line x1="799.6" y1="517.5" x2="806.8" y2="517.5" stroke="#eef6f6" stroke-width="1" /><rect x="764.4" y="512.0" width="46.0" height="11.0" fill="none" stroke="#eef6f6" stroke-width="1.5"/><rect x="775.2" y="512.0" width="24.4" height="11.0" fill="none" stroke="#eef6f6" stroke-width="1.5"/><circle cx="768.0" cy="517.5" r="3.1" fill="#e8e8d6" stroke="none" stroke-width="1"/><circle cx="768.0" cy="517.5" r="1.7" fill="#c6c6be" stroke="none" stroke-width="1"/><circle cx="806.8" cy="517.5" r="3.1" fill="#e8e8d6" stroke="none" stroke-width="1"/><circle cx="806.8" cy="517.5" r="1.7" fill="#c6c6be" stroke="none" stroke-width="1"/><text x="787.7" y="520.0" font-size="6.8" fill="#fff" text-anchor="middle" textLength="10.7" lengthAdjust="spacingAndGlyphs" >R21</text><text x="787.7" y="511.8" font-size="5.6" fill="#c4dcee" text-anchor="middle" textLength="9.6" lengthAdjust="spacingAndGlyphs" opacity="0.9" >R21</text><rect x="822.2" y="513.2" width="4.0" height="7.0" fill="#060624"/><line x1="819.2" y1="516.7" x2="849.0" y2="516.7" stroke="#eef6f6" stroke-width="1.1" /><rect x="814.8" y="511.7" width="39.0" height="10.0" fill="none" stroke="#eef6f6" stroke-width="1.6"/><rect x="829.7" y="513.2" width="12.0" height="7.0" fill="#000"/><rect x="829.7" y="513.2" width="12.0" height="7.0" fill="none" stroke="#eef6f6" stroke-width="1.2"/><line x1="827.2" y1="512.9" x2="827.2" y2="520.5" stroke="#eef6f6" stroke-width="1.4" /><rect x="815.7" y="513.2" width="7.0" height="7.0" fill="#e8e8d6"/><circle cx="819.2" cy="516.7" r="1.9" fill="#c6c6be" stroke="none" stroke-width="1"/><circle cx="849.0" cy="516.7" r="3.1" fill="#e8e8d6" stroke="none" stroke-width="1"/><circle cx="849.0" cy="516.7" r="1.7" fill="#c6c6be" stroke="none" stroke-width="1"/><text transform="translate(835.7 518.8) scale(0.8 1)" font-size="5.6" fill="#fff" text-anchor="middle" >D7</text><text transform="translate(820.2 510.7) scale(0.82 1)" font-size="5.2" fill="#d8e8f0" text-anchor="middle" opacity="0.9" >K</text><text transform="translate(836.7 512.2) scale(0.82 1)" font-size="5.4" fill="#c4dcee" text-anchor="middle" opacity="0.9" >D7</text><text transform="translate(834.7 525.0) scale(0.82 1)" font-size="5.4" fill="#c4dcee" text-anchor="middle" opacity="0.85" >1N4148</text><line x1="881.3" y1="487.0" x2="881.3" y2="510.6" stroke="#0c0c48" stroke-width="2.8" /><rect x="866.8" y="486.0" width="29.0" height="25.6" fill="none" stroke="#eef6f6" stroke-width="1.4"/><line x1="869.1" y1="488.3" x2="869.1" y2="493.3" stroke="#eef6f6" stroke-width="1.1" /><line x1="869.1" y1="504.3" x2="869.1" y2="509.3" stroke="#eef6f6" stroke-width="1.1" /><line x1="893.5" y1="488.3" x2="893.5" y2="493.3" stroke="#eef6f6" stroke-width="1.1" /><line x1="893.5" y1="504.3" x2="893.5" y2="509.3" stroke="#eef6f6" stroke-width="1.1" /><line x1="869.1" y1="488.3" x2="893.5" y2="488.3" stroke="#eef6f6" stroke-width="1.1" /><line x1="869.1" y1="509.3" x2="893.5" y2="509.3" stroke="#eef6f6" stroke-width="1.1" /><rect x="867.8" y="493.8" width="5.6" height="10.0" fill="#dcbac0"/><rect x="889.2" y="493.8" width="5.6" height="10.0" fill="#dcbac0"/><path d="M873.5 493.8A11 11 0 0 1 889.1 493.8" fill="none" stroke="#eef6f6" stroke-width="1"/><path d="M873.5 503.8A11 11 0 0 0 889.1 503.8" fill="none" stroke="#eef6f6" stroke-width="1"/><text transform="translate(881.3 501.1) scale(0.82 1)" font-size="6.4" fill="#fff" text-anchor="middle" >L1</text><line x1="875.3" y1="499.1" x2="877.5" y2="499.1" stroke="#eef6f6" stroke-width="0.9" /><line x1="885.1" y1="499.1" x2="887.3" y2="499.1" stroke="#eef6f6" stroke-width="0.9" /><text x="881.0" y="484.0" font-size="7.3" fill="#f4f8f8" text-anchor="middle" textLength="6.7" lengthAdjust="spacingAndGlyphs" >L1</text><text x="886.0" y="517.6" font-size="7.3" fill="#f4f8f8" text-anchor="middle" textLength="28.6" lengthAdjust="spacingAndGlyphs" >INDUCTOR</text><text x="906.0" y="517.6" font-size="7" fill="#c8dcf0" text-anchor="middle" textLength="17.6" lengthAdjust="spacingAndGlyphs" opacity="0.8" >BC237</text><rect x="899.4" y="486.0" width="19.1" height="17.8" fill="none" stroke="#eef6f6" stroke-width="1.1"/><circle cx="908.9" cy="494.9" r="7.7" fill="none" stroke="#c8dce4" stroke-width="1.5"/><line x1="899.9" y1="494.9" x2="910.9" y2="494.9" stroke="#e0e0c8" stroke-width="0.8" /><rect x="907.9" y="489.9" width="3.0" height="10.0" fill="#000"/><circle cx="904.7" cy="494.9" r="3.6" fill="#e4e8c8" stroke="none" stroke-width="1"/><circle cx="913.9" cy="494.9" r="3.1" fill="#dcdcc8" stroke="none" stroke-width="1"/><circle cx="904.7" cy="494.9" r="1.6" fill="#c8c8b0" stroke="none" stroke-width="1"/><circle cx="913.9" cy="494.9" r="1.6" fill="#c6c6be" stroke="none" stroke-width="1"/><rect x="911.0" y="508.0" width="19.7" height="17.5" fill="none" stroke="#eef6f6" stroke-width="1.1"/><circle cx="920.9" cy="516.8" r="7.5" fill="none" stroke="#c8dce4" stroke-width="1.5"/><line x1="911.9" y1="516.8" x2="922.9" y2="516.8" stroke="#e0e0c8" stroke-width="0.8" /><rect x="919.9" y="511.8" width="3.0" height="10.0" fill="#000"/><circle cx="916.6" cy="516.8" r="3.6" fill="#e4e8c8" stroke="none" stroke-width="1"/><circle cx="925.9" cy="516.8" r="3.1" fill="#dcdcc8" stroke="none" stroke-width="1"/><circle cx="916.6" cy="516.8" r="1.6" fill="#c8c8b0" stroke="none" stroke-width="1"/><circle cx="925.9" cy="516.8" r="1.6" fill="#c6c6be" stroke="none" stroke-width="1"/><text transform="translate(919.9 507.5) scale(0.82 1)" font-size="5.5" fill="#b8d4e4" text-anchor="middle" opacity="0.85" >Q</text><rect x="888.0" y="517.4" width="19.5" height="17.0" fill="none" stroke="#eef6f6" stroke-width="1.1"/><circle cx="897.8" cy="525.9" r="7.3" fill="none" stroke="#c8dce4" stroke-width="1.5"/><line x1="888.8" y1="525.9" x2="899.8" y2="525.9" stroke="#e0e0c8" stroke-width="0.8" /><rect x="896.8" y="520.9" width="3.0" height="10.0" fill="#000"/><circle cx="893.5" cy="525.9" r="3.6" fill="#e4e8c8" stroke="none" stroke-width="1"/><circle cx="902.8" cy="525.9" r="3.1" fill="#dcdcc8" stroke="none" stroke-width="1"/><circle cx="893.5" cy="525.9" r="1.6" fill="#c8c8b0" stroke="none" stroke-width="1"/><circle cx="902.8" cy="525.9" r="1.6" fill="#c6c6be" stroke="none" stroke-width="1"/><rect x="888.0" y="538.3" width="19.5" height="17.0" fill="none" stroke="#eef6f6" stroke-width="1.1"/><circle cx="897.8" cy="546.8" r="7.3" fill="none" stroke="#c8dce4" stroke-width="1.5"/><line x1="888.8" y1="546.8" x2="899.8" y2="546.8" stroke="#e0e0c8" stroke-width="0.8" /><rect x="896.8" y="541.8" width="3.0" height="10.0" fill="#000"/><circle cx="893.5" cy="546.8" r="3.6" fill="#e4e8c8" stroke="none" stroke-width="1"/><circle cx="902.8" cy="546.8" r="3.1" fill="#dcdcc8" stroke="none" stroke-width="1"/><circle cx="893.5" cy="546.8" r="1.6" fill="#c8c8b0" stroke="none" stroke-width="1"/><circle cx="902.8" cy="546.8" r="1.6" fill="#c6c6be" stroke="none" stroke-width="1"/><line x1="725.0" y1="530.7" x2="725.0" y2="569.9" stroke="#0c0c48" stroke-width="2.6" /><path d="M707.9 529.7H745.6V570.9H707.9L704.4 567.4V533.2Z" fill="none" stroke="#eef6f6" stroke-width="1.5"/><circle cx="725.0" cy="550.3" r="18.3" fill="none" stroke="#eef6f6" stroke-width="1"/><rect x="700.2" y="545.1" width="49.6" height="10.4" fill="none" stroke="#d4e0e0" stroke-width="0.8"/><rect x="717.3" y="545.6" width="15.4" height="9.4" fill="#000"/><rect x="700.2" y="545.1" width="17.1" height="10.4" fill="#dcbac0"/><rect x="732.7" y="545.1" width="17.1" height="10.4" fill="#dcbac0"/><line x1="725.0" y1="545.1" x2="725.0" y2="555.5" stroke="#0c0c48" stroke-width="2.6" /><text transform="translate(725.0 552.7) scale(0.82 1)" font-size="6.6" fill="#fff" text-anchor="middle" >E1</text><line x1="719.2" y1="550.6" x2="721.2" y2="550.6" stroke="#eef6f6" stroke-width="0.9" /><line x1="728.8" y1="550.6" x2="730.8" y2="550.6" stroke="#eef6f6" stroke-width="0.9" /><line x1="698.4" y1="539.8" x2="702.9" y2="539.8" stroke="#eef6f6" stroke-width="1.1" /><line x1="700.7" y1="537.3" x2="700.7" y2="542.3" stroke="#eef6f6" stroke-width="1.1" /><text transform="translate(725.0 529.4) scale(0.82 1)" font-size="5.6" fill="#d4e6f2" text-anchor="middle" opacity="0.9" >C1</text><rect x="762.5" y="529.5" width="8.5" height="8.0" fill="#090936"/><line x1="757.6" y1="528.0" x2="757.6" y2="539.0" stroke="#eef6f6" stroke-width="1" /><line x1="752.5" y1="533.5" x2="764.8" y2="533.5" stroke="#eef6f6" stroke-width="1" /><line x1="789.2" y1="533.5" x2="796.4" y2="533.5" stroke="#eef6f6" stroke-width="1" /><rect x="754.0" y="528.0" width="46.0" height="11.0" fill="none" stroke="#eef6f6" stroke-width="1.5"/><rect x="764.8" y="528.0" width="24.4" height="11.0" fill="none" stroke="#eef6f6" stroke-width="1.5"/><circle cx="757.6" cy="533.5" r="3.1" fill="#e8e8d6" stroke="none" stroke-width="1"/><circle cx="757.6" cy="533.5" r="1.7" fill="#c6c6be" stroke="none" stroke-width="1"/><circle cx="796.4" cy="533.5" r="3.1" fill="#e8e8d6" stroke="none" stroke-width="1"/><circle cx="796.4" cy="533.5" r="1.7" fill="#c6c6be" stroke="none" stroke-width="1"/><text x="777.3" y="536.0" font-size="6.8" fill="#fff" text-anchor="middle" textLength="6.9" lengthAdjust="spacingAndGlyphs" >R6</text><text x="777.3" y="527.8" font-size="5.6" fill="#c4dcee" text-anchor="middle" textLength="6.2" lengthAdjust="spacingAndGlyphs" opacity="0.9" >R6</text><rect x="762.5" y="545.0" width="8.5" height="8.0" fill="#090936"/><line x1="757.6" y1="543.5" x2="757.6" y2="554.5" stroke="#eef6f6" stroke-width="1" /><line x1="752.5" y1="549.0" x2="764.8" y2="549.0" stroke="#eef6f6" stroke-width="1" /><line x1="789.2" y1="549.0" x2="796.4" y2="549.0" stroke="#eef6f6" stroke-width="1" /><rect x="754.0" y="543.5" width="46.0" height="11.0" fill="none" stroke="#eef6f6" stroke-width="1.5"/><rect x="764.8" y="543.5" width="24.4" height="11.0" fill="none" stroke="#eef6f6" stroke-width="1.5"/><circle cx="757.6" cy="549.0" r="3.1" fill="#e8e8d6" stroke="none" stroke-width="1"/><circle cx="757.6" cy="549.0" r="1.7" fill="#c6c6be" stroke="none" stroke-width="1"/><circle cx="796.4" cy="549.0" r="3.1" fill="#e8e8d6" stroke="none" stroke-width="1"/><circle cx="796.4" cy="549.0" r="1.7" fill="#c6c6be" stroke="none" stroke-width="1"/><text x="777.3" y="551.5" font-size="6.8" fill="#fff" text-anchor="middle" textLength="6.9" lengthAdjust="spacingAndGlyphs" >R9</text><text x="777.3" y="543.3" font-size="5.6" fill="#c4dcee" text-anchor="middle" textLength="6.2" lengthAdjust="spacingAndGlyphs" opacity="0.9" >R9</text><rect x="762.5" y="560.8" width="8.5" height="8.0" fill="#090936"/><line x1="757.6" y1="559.3" x2="757.6" y2="570.3" stroke="#eef6f6" stroke-width="1" /><line x1="752.5" y1="564.8" x2="764.8" y2="564.8" stroke="#eef6f6" stroke-width="1" /><line x1="789.2" y1="564.8" x2="796.4" y2="564.8" stroke="#eef6f6" stroke-width="1" /><rect x="754.0" y="559.3" width="46.0" height="11.0" fill="none" stroke="#eef6f6" stroke-width="1.5"/><rect x="764.8" y="559.3" width="24.4" height="11.0" fill="none" stroke="#eef6f6" stroke-width="1.5"/><circle cx="757.6" cy="564.8" r="3.1" fill="#e8e8d6" stroke="none" stroke-width="1"/><circle cx="757.6" cy="564.8" r="1.7" fill="#c6c6be" stroke="none" stroke-width="1"/><circle cx="796.4" cy="564.8" r="3.1" fill="#e8e8d6" stroke="none" stroke-width="1"/><circle cx="796.4" cy="564.8" r="1.7" fill="#c6c6be" stroke="none" stroke-width="1"/><text x="777.3" y="567.3" font-size="6.8" fill="#fff" text-anchor="middle" textLength="6.9" lengthAdjust="spacingAndGlyphs" >R1</text><text x="777.3" y="559.1" font-size="5.6" fill="#c4dcee" text-anchor="middle" textLength="6.2" lengthAdjust="spacingAndGlyphs" opacity="0.9" >R1</text><rect x="811.6" y="529.5" width="3.8" height="6.6" fill="#060624"/><line x1="808.6" y1="532.8" x2="837.9" y2="532.8" stroke="#eef6f6" stroke-width="1.1" /><rect x="804.2" y="528.0" width="38.6" height="9.6" fill="none" stroke="#eef6f6" stroke-width="1.6"/><rect x="818.9" y="529.3" width="12.0" height="7.0" fill="#000"/><rect x="818.9" y="529.3" width="12.0" height="7.0" fill="none" stroke="#eef6f6" stroke-width="1.2"/><line x1="816.4" y1="529.0" x2="816.4" y2="536.6" stroke="#eef6f6" stroke-width="1.4" /><rect x="805.1" y="529.3" width="7.0" height="7.0" fill="#e8e8d6"/><circle cx="808.6" cy="532.8" r="1.9" fill="#c6c6be" stroke="none" stroke-width="1"/><circle cx="837.9" cy="532.8" r="3.1" fill="#e8e8d6" stroke="none" stroke-width="1"/><circle cx="837.9" cy="532.8" r="1.7" fill="#c6c6be" stroke="none" stroke-width="1"/><text transform="translate(824.9 534.9) scale(0.8 1)" font-size="5.6" fill="#fff" text-anchor="middle" >D6</text><text transform="translate(809.6 527.0) scale(0.82 1)" font-size="5.2" fill="#d8e8f0" text-anchor="middle" opacity="0.9" >K</text><text transform="translate(825.9 528.5) scale(0.82 1)" font-size="5.4" fill="#c4dcee" text-anchor="middle" opacity="0.9" >D6</text><text transform="translate(823.9 540.9) scale(0.82 1)" font-size="5.4" fill="#c4dcee" text-anchor="middle" opacity="0.85" >1N4148</text><rect x="811.6" y="543.0" width="3.8" height="6.4" fill="#060624"/><line x1="808.6" y1="546.2" x2="837.9" y2="546.2" stroke="#eef6f6" stroke-width="1.1" /><rect x="804.2" y="541.5" width="38.6" height="9.4" fill="none" stroke="#eef6f6" stroke-width="1.6"/><rect x="818.9" y="542.7" width="12.0" height="7.0" fill="#000"/><rect x="818.9" y="542.7" width="12.0" height="7.0" fill="none" stroke="#eef6f6" stroke-width="1.2"/><line x1="816.4" y1="542.4" x2="816.4" y2="550.0" stroke="#eef6f6" stroke-width="1.4" /><rect x="805.1" y="542.7" width="7.0" height="7.0" fill="#e8e8d6"/><circle cx="808.6" cy="546.2" r="1.9" fill="#c6c6be" stroke="none" stroke-width="1"/><circle cx="837.9" cy="546.2" r="3.1" fill="#e8e8d6" stroke="none" stroke-width="1"/><circle cx="837.9" cy="546.2" r="1.7" fill="#c6c6be" stroke="none" stroke-width="1"/><text transform="translate(824.9 548.3) scale(0.8 1)" font-size="5.6" fill="#fff" text-anchor="middle" >D4</text><text transform="translate(809.6 540.5) scale(0.82 1)" font-size="5.2" fill="#d8e8f0" text-anchor="middle" opacity="0.9" >K</text><text transform="translate(825.9 542.0) scale(0.82 1)" font-size="5.4" fill="#c4dcee" text-anchor="middle" opacity="0.9" >D4</text><text transform="translate(823.9 554.2) scale(0.82 1)" font-size="5.4" fill="#c4dcee" text-anchor="middle" opacity="0.85" >1N4148</text><rect x="811.6" y="556.5" width="3.8" height="6.6" fill="#060624"/><line x1="808.6" y1="559.8" x2="837.9" y2="559.8" stroke="#eef6f6" stroke-width="1.1" /><rect x="804.2" y="555.0" width="38.6" height="9.6" fill="none" stroke="#eef6f6" stroke-width="1.6"/><rect x="818.9" y="556.3" width="12.0" height="7.0" fill="#000"/><rect x="818.9" y="556.3" width="12.0" height="7.0" fill="none" stroke="#eef6f6" stroke-width="1.2"/><line x1="816.4" y1="556.0" x2="816.4" y2="563.6" stroke="#eef6f6" stroke-width="1.4" /><rect x="805.1" y="556.3" width="7.0" height="7.0" fill="#e8e8d6"/><circle cx="808.6" cy="559.8" r="1.9" fill="#c6c6be" stroke="none" stroke-width="1"/><circle cx="837.9" cy="559.8" r="3.1" fill="#e8e8d6" stroke="none" stroke-width="1"/><circle cx="837.9" cy="559.8" r="1.7" fill="#c6c6be" stroke="none" stroke-width="1"/><text transform="translate(824.9 561.9) scale(0.8 1)" font-size="5.6" fill="#fff" text-anchor="middle" >D3</text><text transform="translate(809.6 554.0) scale(0.82 1)" font-size="5.2" fill="#d8e8f0" text-anchor="middle" opacity="0.9" >K</text><text transform="translate(825.9 555.5) scale(0.82 1)" font-size="5.4" fill="#c4dcee" text-anchor="middle" opacity="0.9" >D3</text><text transform="translate(823.9 567.9) scale(0.82 1)" font-size="5.4" fill="#c4dcee" text-anchor="middle" opacity="0.85" >1N4148</text><line x1="868.8" y1="530.5" x2="868.8" y2="542.1" stroke="#0e0e4a" stroke-width="2.6" /><rect x="857.4" y="517.4" width="27.1" height="26.2" fill="none" stroke="#eef6f6" stroke-width="1.5"/><line x1="860.8" y1="525.4" x2="871.8" y2="525.4" stroke="#eef6f6" stroke-width="0.9" /><line x1="866.3" y1="519.9" x2="866.3" y2="530.9" stroke="#eef6f6" stroke-width="0.9" /><rect x="862.9" y="522.0" width="6.8" height="6.8" fill="#e8e8d6"/><circle cx="866.3" cy="525.4" r="1.9" fill="#c6c6be" stroke="none" stroke-width="1"/><circle cx="875.7" cy="534.8" r="3.2" fill="#e8e8d6" stroke="none" stroke-width="1"/><circle cx="875.7" cy="534.8" r="1.8" fill="#c6c6be" stroke="none" stroke-width="1"/><ellipse cx="858.7" cy="523.2" rx="1" ry="2.2" fill="#000" stroke="#eef6f6" stroke-width=".8"/><ellipse cx="858.7" cy="537.3" rx="1" ry="2.2" fill="#000" stroke="#eef6f6" stroke-width=".8"/><text transform="translate(872.3 533.1) scale(0.8 1)" font-size="6.4" fill="#fff" text-anchor="middle" >D8</text><text x="861.5" y="516.6" font-size="7.3" fill="#f4f8f8" text-anchor="middle" textLength="6.7" lengthAdjust="spacingAndGlyphs" >D8</text><text x="870.9" y="551.2" font-size="7.3" fill="#fff" text-anchor="middle" textLength="10.3" lengthAdjust="spacingAndGlyphs" >LED</text><line x1="858.4" y1="561.4" x2="858.4" y2="573.4" stroke="#0e0e4a" stroke-width="2.6" /><rect x="847.2" y="547.9" width="26.6" height="27.0" fill="none" stroke="#eef6f6" stroke-width="1.5"/><line x1="850.5" y1="556.1" x2="861.5" y2="556.1" stroke="#eef6f6" stroke-width="0.9" /><line x1="856.0" y1="550.6" x2="856.0" y2="561.6" stroke="#eef6f6" stroke-width="0.9" /><rect x="852.6" y="552.7" width="6.8" height="6.8" fill="#e8e8d6"/><circle cx="856.0" cy="556.1" r="1.9" fill="#c6c6be" stroke="none" stroke-width="1"/><circle cx="865.2" cy="565.9" r="3.2" fill="#e8e8d6" stroke="none" stroke-width="1"/><circle cx="865.2" cy="565.9" r="1.8" fill="#c6c6be" stroke="none" stroke-width="1"/><ellipse cx="848.5" cy="553.8" rx="1" ry="2.2" fill="#000" stroke="#eef6f6" stroke-width=".8"/><ellipse cx="848.5" cy="568.4" rx="1" ry="2.2" fill="#000" stroke="#eef6f6" stroke-width=".8"/><text transform="translate(861.8 564.1) scale(0.8 1)" font-size="6.4" fill="#fff" text-anchor="middle" >D9</text><text x="851.2" y="547.1" font-size="7.3" fill="#f4f8f8" text-anchor="middle" textLength="6.7" lengthAdjust="spacingAndGlyphs" >D9</text><text x="860.5" y="582.5" font-size="7.3" fill="#fff" text-anchor="middle" textLength="10.3" lengthAdjust="spacingAndGlyphs" >LED</text><rect x="707.7" y="577.5" width="8.5" height="8.2" fill="#090936"/><line x1="702.8" y1="576.0" x2="702.8" y2="587.2" stroke="#eef6f6" stroke-width="1" /><line x1="697.7" y1="581.6" x2="710.0" y2="581.6" stroke="#eef6f6" stroke-width="1" /><line x1="734.4" y1="581.6" x2="741.6" y2="581.6" stroke="#eef6f6" stroke-width="1" /><rect x="699.2" y="576.0" width="46.0" height="11.2" fill="none" stroke="#eef6f6" stroke-width="1.5"/><rect x="710.0" y="576.0" width="24.4" height="11.2" fill="none" stroke="#eef6f6" stroke-width="1.5"/><circle cx="702.8" cy="581.6" r="3.1" fill="#e8e8d6" stroke="none" stroke-width="1"/><circle cx="702.8" cy="581.6" r="1.7" fill="#c6c6be" stroke="none" stroke-width="1"/><circle cx="741.6" cy="581.6" r="3.1" fill="#e8e8d6" stroke="none" stroke-width="1"/><circle cx="741.6" cy="581.6" r="1.7" fill="#c6c6be" stroke="none" stroke-width="1"/><text x="722.5" y="584.1" font-size="6.8" fill="#fff" text-anchor="middle" textLength="6.9" lengthAdjust="spacingAndGlyphs" >R0</text><text x="722.5" y="575.8" font-size="5.6" fill="#c4dcee" text-anchor="middle" textLength="6.2" lengthAdjust="spacingAndGlyphs" opacity="0.9" >R0</text><rect x="757.4" y="577.0" width="3.8" height="6.6" fill="#060624"/><line x1="754.4" y1="580.3" x2="783.7" y2="580.3" stroke="#eef6f6" stroke-width="1.1" /><rect x="750.0" y="575.5" width="38.6" height="9.6" fill="none" stroke="#eef6f6" stroke-width="1.6"/><rect x="764.7" y="576.8" width="12.0" height="7.0" fill="#000"/><rect x="764.7" y="576.8" width="12.0" height="7.0" fill="none" stroke="#eef6f6" stroke-width="1.2"/><line x1="762.2" y1="576.5" x2="762.2" y2="584.1" stroke="#eef6f6" stroke-width="1.4" /><rect x="750.9" y="576.8" width="7.0" height="7.0" fill="#e8e8d6"/><circle cx="754.4" cy="580.3" r="1.9" fill="#c6c6be" stroke="none" stroke-width="1"/><circle cx="783.7" cy="580.3" r="3.1" fill="#e8e8d6" stroke="none" stroke-width="1"/><circle cx="783.7" cy="580.3" r="1.7" fill="#c6c6be" stroke="none" stroke-width="1"/><text transform="translate(770.7 582.4) scale(0.8 1)" font-size="5.6" fill="#fff" text-anchor="middle" >D2</text><text transform="translate(755.4 574.5) scale(0.82 1)" font-size="5.2" fill="#d8e8f0" text-anchor="middle" opacity="0.9" >K</text><text transform="translate(771.7 576.0) scale(0.82 1)" font-size="5.4" fill="#c4dcee" text-anchor="middle" opacity="0.9" >D2</text><text x="768.0" y="592.0" font-size="7.3" fill="#f4f8f8" text-anchor="middle" textLength="17.6" lengthAdjust="spacingAndGlyphs" >BAT43</text><rect x="792.0" y="573.5" width="9.5" height="14.0" fill="#dcbac0"/><line x1="796.7" y1="574.0" x2="796.7" y2="587.0" stroke="#0b0b50" stroke-width="1.5" /><rect x="792.0" y="573.5" width="9.5" height="14.0" fill="none" stroke="#eef6f6" stroke-width="0.6"/><text x="796.0" y="593.0" font-size="7.3" fill="#f4f8f8" text-anchor="middle" textLength="24.9" lengthAdjust="spacingAndGlyphs" >74LS125</text><rect x="804.2" y="568.6" width="19.0" height="17.6" fill="none" stroke="#eef6f6" stroke-width="1.1"/><circle cx="813.7" cy="577.4" r="7.6" fill="none" stroke="#c8dce4" stroke-width="1.5"/><line x1="804.7" y1="577.4" x2="815.7" y2="577.4" stroke="#e0e0c8" stroke-width="0.8" /><rect x="812.7" y="572.4" width="3.0" height="10.0" fill="#000"/><circle cx="809.5" cy="577.4" r="3.6" fill="#e4e8c8" stroke="none" stroke-width="1"/><circle cx="818.7" cy="577.4" r="3.1" fill="#dcdcc8" stroke="none" stroke-width="1"/><circle cx="809.5" cy="577.4" r="1.6" fill="#c8c8b0" stroke="none" stroke-width="1"/><circle cx="818.7" cy="577.4" r="1.6" fill="#c6c6be" stroke="none" stroke-width="1"/><rect x="828.8" y="570.0" width="11.4" height="10.5" fill="#dcbac0"/><text x="834.5" y="578.2" font-size="7.5" fill="#141446" text-anchor="middle" font-weight="bold">Z</text><rect x="827.3" y="568.5" width="14.4" height="13.0" fill="none" stroke="#eef6f6" stroke-width="0.7"/><text x="836.5" y="592.0" font-size="7.3" fill="#f4f8f8" text-anchor="middle" textLength="32.2" lengthAdjust="spacingAndGlyphs" >LT1129_16</text></g></svg><div class="a" style="left:1636px;top:118px;width:17px;height:845px;background:#f0f0f0;"></div><div class="a" style="left:1637px;top:561px;width:16px;height:33px;background:#cdcdcd;"></div><svg class="a" style="left:1640.5px;top:125px;" width="8" height="5" viewBox="0 0 8 5"><path d="M0.500 4.500l3.500-3.500 3.500 3.500" fill="none" stroke="#5a5a5a" stroke-width="2"/></svg><svg class="a" style="left:1640.5px;top:952px;" width="8" height="5" viewBox="0 0 8 5"><path d="M0.500 0.500l3.500 3.500 3.500-3.500" fill="none" stroke="#5a5a5a" stroke-width="2"/></svg><div class="a" style="left:1653px;top:117px;width:1px;height:864px;background:#8a8a8a;"></div><div class="a" style="left:38px;top:963px;width:1598px;height:17px;background:#f0f0f0;"></div><div class="a" style="left:827px;top:964px;width:208px;height:15px;background:#cdcdcd;"></div><svg class="a" style="left:43px;top:967.5px;" width="5" height="8" viewBox="0 0 5 8"><path d="M4.500 0.500l-3.500 3.500 3.500 3.500" fill="none" stroke="#5a5a5a" stroke-width="2"/></svg><svg class="a" style="left:1625px;top:967.5px;" width="5" height="8" viewBox="0 0 5 8"><path d="M0.500 0.500l3.500 3.500-3.500 3.500" fill="none" stroke="#5a5a5a" stroke-width="2"/></svg><div class="a" style="left:37px;top:980px;width:1617px;height:1px;background:#8a8a8a;"></div><div class="a" style="left:1654px;top:980px;width:41px;height:1px;background:#dcdcdc;"></div><div class="a" style="left:37px;top:118px;width:1px;height:863px;background:#8a8a8a;"></div><div class="a" style="left:2px;top:122px;width:33px;height:32px;background:#c9e0f6;border:1px solid #a8d0f0;box-sizing:border-box;"></div><svg class="a" style="left:5.3px;top:125.4px;" width="24" height="24" viewBox="0 0 24 24"><path d="M7 1v22M14 1v22M21 3v20M1 7h22M1 13.500h22M1 20h22" stroke="#545454" stroke-width="1.700" fill="none"/><path d="M14 1a8 8 0 0 1 7 6" stroke="#2e86d0" stroke-width="1.200" fill="none" stroke-dasharray="2 1.300"/></svg><div class="a" style="left:2px;top:157px;width:33px;height:32px;background:#c9e0f6;border:1px solid #a8d0f0;box-sizing:border-box;"></div><svg class="a" style="left:5.3px;top:160.4px;" width="24" height="24" viewBox="0 0 24 24"><path d="M2 1.500v19.500h21" fill="none" stroke="#545454" stroke-width="1.100"/><path d="M2 21l17-16" stroke="#545454" stroke-width="1.300"/><circle cx="20.500" cy="4" r="2.600" fill="#2e86d0"/><text x="7.500" y="9" font-size="8.500" fill="#545454" font-weight="bold" text-anchor="middle">r</text><text x="15" y="19.500" font-size="7.500" fill="#2e86d0" text-anchor="middle">θ</text><path d="M.5 3l1.500-2 1.500 2M21.500 19.500l2 1.500-2 1.500" fill="none" stroke="#545454" stroke-width=".8"/></svg><svg class="a" style="left:5.3px;top:195.4px;" width="24" height="24" viewBox="0 0 24 24"><text x="12" y="11.500" font-size="13" font-weight="bold" fill="#545454" text-anchor="middle">in</text><path d="M4 17.500h16" stroke="#545454" stroke-width="1.500"/><path d="M1 17.500l5-2.800v5.600zM23 17.500l-5-2.800v5.600z" fill="#545454"/></svg><div class="a" style="left:2px;top:227px;width:33px;height:32px;background:#c9e0f6;border:1px solid #a8d0f0;box-sizing:border-box;"></div><svg class="a" style="left:5.3px;top:230.4px;" width="24" height="24" viewBox="0 0 24 24"><text x="12" y="12" font-size="12.500" font-weight="bold" fill="#545454" text-anchor="middle">mil</text><path d="M4 17.500h16" stroke="#545454" stroke-width="1.500"/><path d="M1 17.500l5-2.800v5.600zM23 17.500l-5-2.800v5.600z" fill="#545454"/><path d="M2 13.500h20" stroke="#545454" stroke-width=".8"/></svg><svg class="a" style="left:5.3px;top:265.4px;" width="24" height="24" viewBox="0 0 24 24"><text x="12" y="11.500" font-size="12.500" font-weight="bold" fill="#545454" text-anchor="middle" textLength="22" lengthAdjust="spacingAndGlyphs">mm</text><path d="M4 17.500h16" stroke="#545454" stroke-width="1.500"/><path d="M1 17.500l5-2.800v5.600zM23 17.500l-5-2.800v5.600z" fill="#545454"/><path d="M1.500 13.500h21" stroke="#545454" stroke-width=".8"/></svg><div class="a" style="left:2px;top:297px;width:33px;height:32px;background:#c9e0f6;border:1px solid #a8d0f0;box-sizing:border-box;"></div><svg class="a" style="left:5.3px;top:300.4px;" width="24" height="24" viewBox="0 0 24 24"><path d="M12 1.500v21M1.500 12h21" stroke="#545454" stroke-width="1.900"/></svg><div class="a" style="left:4px;top:334.5px;width:29px;height:1px;background:#8c8c8c;"></div><div class="a" style="left:2px;top:340px;width:33px;height:32px;background:#c9e0f6;border:1px solid #a8d0f0;box-sizing:border-box;"></div><svg class="a" style="left:5.3px;top:343.4px;" width="24" height="24" viewBox="0 0 24 24"><rect x="1.500" y="1.500" width="21" height="21" rx="1.500" fill="#e2e2e2" stroke="#545454" stroke-width="1.300"/><path d="M6 6.500l12 12M18 6.500l-12 12M6 6.500h12" stroke="#545454" stroke-width="1" fill="none"/><circle cx="6" cy="6.5" r="2.300" fill="#fff" stroke="#545454" stroke-width=".9"/><circle cx="18" cy="6.5" r="2.300" fill="#fff" stroke="#545454" stroke-width=".9"/><circle cx="6" cy="18.5" r="2.300" fill="#fff" stroke="#545454" stroke-width=".9"/><circle cx="18" cy="18.5" r="2.300" fill="#fff" stroke="#545454" stroke-width=".9"/></svg><svg class="a" style="left:5.3px;top:378.4px;" width="24" height="24" viewBox="0 0 24 24"><rect x="1.500" y="1.500" width="21" height="21" rx="1.500" fill="#e2e2e2" stroke="#545454" stroke-width="1.300"/><path d="M3.500 17.500l17.500-15M6 21.500l16-15" stroke="#545454" stroke-width="1.100"/><path d="M12 19.500c5 0 8-3 8.500-8" fill="none" stroke="#545454" stroke-width="1"/><circle cx="15" cy="5" r="2" fill="#fff" stroke="#545454" stroke-width=".9"/><circle cx="5" cy="15.5" r="2" fill="#fff" stroke="#545454" stroke-width=".9"/><circle cx="11.5" cy="20" r="2" fill="#fff" stroke="#545454" stroke-width=".9"/></svg><div class="a" style="left:4px;top:412.5px;width:29px;height:1px;background:#8c8c8c;"></div><svg class="a" style="left:5.3px;top:421.4px;" width="24" height="24" viewBox="0 0 24 24"><rect x="1" y="3" width="9.500" height="18.500" rx="1" fill="#3c3c3c"/><rect x="14.500" y="3" width="9" height="18.500" rx="1" fill="#e4e4e4" stroke="#545454" stroke-width="1.100"/><path d="M12.500 1v22" stroke="#545454" stroke-width="1.600" stroke-dasharray="1.500 1.500"/></svg><svg class="a" style="left:5.3px;top:456.4px;" width="24" height="24" viewBox="0 0 24 24"><path d="M1 3h9l4 4v14" fill="none" stroke="#b4b4b4" stroke-width="1.700"/><path d="M14 1l6 5v15" fill="none" stroke="#b4b4b4" stroke-width="1.700"/><path d="M9 10.500h15" stroke="#8ec4e8" stroke-width="3"/><path d="M7.500 12v9" stroke="#e0a0b8" stroke-width="3"/><circle cx="7.500" cy="10.500" r="2.600" fill="#fdf0d0" stroke="#f0b040" stroke-width="1.400"/></svg><div class="a" style="left:4px;top:490.5px;width:29px;height:1px;background:#8c8c8c;"></div><div class="a" style="left:2px;top:496px;width:33px;height:32px;background:#c9e0f6;border:1px solid #a8d0f0;box-sizing:border-box;"></div><svg class="a" style="left:5.3px;top:499.4px;" width="24" height="24" viewBox="0 0 24 24"><path d="M1.500 22.500v-9h7v-11h14v20z" fill="#dcdcdc" stroke="#545454" stroke-width="1.400" stroke-linejoin="round"/><path d="M23 6.500h-4a5.500 5.500 0 0 0 0 11h4" fill="#f4f4f4" stroke="#545454" stroke-width="1.400"/><circle cx="18.500" cy="12" r="2.300" fill="#2a2a2a"/><path d="M18.500 12h5" stroke="#2a2a2a" stroke-width="2.200"/></svg><svg class="a" style="left:5.3px;top:534.4px;" width="24" height="24" viewBox="0 0 24 24"><path d="M2 22.500v-8.500h6.500v-12h13.500v20.500z" fill="none" stroke="#545454" stroke-width="1.100" stroke-dasharray="2.200 1.800"/><circle cx="18.500" cy="12" r="2" fill="#2a2a2a"/><path d="M18.500 12h5" stroke="#2a2a2a" stroke-width="2"/></svg><svg class="a" style="left:5.3px;top:569.4px;" width="24" height="24" viewBox="0 0 24 24"><path d="M1.500 22.500v-9h7v-11h14v20z" fill="#ececec" stroke="#8a8a8a" stroke-width="1.300" stroke-linejoin="round"/><path d="M23 6.500h-4a5.500 5.500 0 0 0 0 11h4" fill="#f4f4f4" stroke="#8a8a8a" stroke-width="1.300"/><circle cx="18.500" cy="12" r="2.300" fill="#2a2a2a"/><path d="M18.500 12h5" stroke="#2a2a2a" stroke-width="2.200"/></svg><div class="a" style="left:4px;top:603.5px;width:29px;height:1px;background:#8c8c8c;"></div><svg class="a" style="left:5.3px;top:612.4px;" width="24" height="24" viewBox="0 0 24 24"><rect x="0.500" y="7" width="23" height="10" rx="1" fill="#545454"/><rect x="5.3" y="0.500" width="2.400" height="6.500" fill="#545454"/><rect x="5.3" y="17" width="2.400" height="6.500" fill="#d8d8d8" stroke="#9a9a9a" stroke-width=".7"/><rect x="10.8" y="0.500" width="2.400" height="6.500" fill="#545454"/><rect x="10.8" y="17" width="2.400" height="6.500" fill="#d8d8d8" stroke="#9a9a9a" stroke-width=".7"/><rect x="16.3" y="0.500" width="2.400" height="6.500" fill="#545454"/><rect x="16.3" y="17" width="2.400" height="6.500" fill="#d8d8d8" stroke="#9a9a9a" stroke-width=".7"/><rect x="2.500" y="13" width="2" height="2" fill="#fff"/></svg><svg class="a" style="left:5.3px;top:647.4px;" width="24" height="24" viewBox="0 0 24 24"><circle cx="12" cy="12" r="10.800" fill="#f4f4f4" stroke="#545454" stroke-width="1.200"/><circle cx="12" cy="12" r="5.500" fill="#a8a8a8" stroke="#545454" stroke-width="1"/></svg><svg class="a" style="left:5.3px;top:682.4px;" width="24" height="24" viewBox="0 0 24 24"><rect x="0.500" y="9.500" width="23" height="4" rx="1" fill="#e4e4e4" stroke="#545454" stroke-width="1"/><rect x="10.500" y="0.500" width="3.500" height="23" fill="#545454"/><rect x="11.400" y="14" width="1.700" height="9" fill="#f0f0f0"/></svg><div class="a" style="left:4px;top:716.5px;width:29px;height:1px;background:#8c8c8c;"></div><div class="a" style="left:2px;top:722px;width:33px;height:32px;background:#c9e0f6;border:1px solid #a8d0f0;box-sizing:border-box;"></div><svg class="a" style="left:5.3px;top:725.4px;" width="24" height="24" viewBox="0 0 24 24"><rect x="1" y="1.500" width="14" height="21" rx="1" fill="#e0e0e0" stroke="#545454" stroke-width="1.200"/><rect x="16.500" y="1" width="6.500" height="22" fill="#545454"/></svg><div class="a" style="left:1656px;top:122px;width:33px;height:32px;background:#c9e0f6;border:1px solid #a8d0f0;box-sizing:border-box;"></div><svg class="a" style="left:1660.5px;top:126px;" width="24" height="24" viewBox="0 0 24 24"><path d="M4.500 0.500v20.500l5.200-4.500 3.300 7.200 3.200-1.500-3.300-7.100h6.800z" fill="#f4f4f4" stroke="#8c8c8c" stroke-width="1.400" stroke-linejoin="round"/></svg><svg class="a" style="left:1660.5px;top:161px;" width="24" height="24" viewBox="0 0 24 24"><path d="M2 2l20 20M22 2l-20 20" stroke="#545454" stroke-width="1.100"/><circle cx="12" cy="12" r="2.600" fill="#fff" stroke="#545454" stroke-width="1"/></svg><div class="a" style="left:1658px;top:194.5px;width:29px;height:1px;background:#8c8c8c;"></div><svg class="a" style="left:1660.5px;top:204px;" width="24" height="24" viewBox="0 0 24 24"><rect x="7" y="0.500" width="10.500" height="23" rx="1" fill="#ececec" stroke="#9a9a9a" stroke-width="1.300"/><rect x="0.500" y="5.5" width="6" height="2.800" fill="#dcdcdc" stroke="#9a9a9a" stroke-width=".8"/><rect x="17.800" y="5.5" width="6" height="2.800" fill="#dcdcdc" stroke="#9a9a9a" stroke-width=".8"/><rect x="0.500" y="11" width="6" height="2.800" fill="#dcdcdc" stroke="#9a9a9a" stroke-width=".8"/><rect x="17.800" y="11" width="6" height="2.800" fill="#dcdcdc" stroke="#9a9a9a" stroke-width=".8"/><rect x="0.500" y="16.5" width="6" height="2.800" fill="#dcdcdc" stroke="#9a9a9a" stroke-width=".8"/><rect x="17.800" y="16.5" width="6" height="2.800" fill="#dcdcdc" stroke="#9a9a9a" stroke-width=".8"/><circle cx="10" cy="4" r="1.100" fill="#545454"/></svg><svg class="a" style="left:1660.5px;top:239px;" width="24" height="24" viewBox="0 0 24 24"><path d="M2.500 19.500l7-7h5.500l6.500-8" fill="none" stroke="#545454" stroke-width="1.200"/><circle cx="2.500" cy="19.500" r="2.200" fill="#fff" stroke="#545454" stroke-width="1"/><circle cx="21.500" cy="4" r="2.200" fill="#fff" stroke="#545454" stroke-width="1"/><path d="M28.500 20.500v8.500h-8.500z" fill="#000"/></svg><svg class="a" style="left:1660.5px;top:274px;" width="24" height="24" viewBox="0 0 24 24"><path d="M3.500 3c1 24 8 24 9 10s6-14 8 8" fill="none" stroke="#545454" stroke-width="1.300"/><circle cx="3.500" cy="2.500" r="2" fill="#fff" stroke="#545454" stroke-width="1"/><circle cx="20.500" cy="21.500" r="2" fill="#fff" stroke="#545454" stroke-width="1"/><path d="M28.500 20.500v8.500h-8.500z" fill="#000"/></svg><svg class="a" style="left:1660.5px;top:309px;" width="24" height="24" viewBox="0 0 24 24"><circle cx="12" cy="12" r="8.700" fill="#fff" stroke="#545454" stroke-width="6"/></svg><svg class="a" style="left:1660.5px;top:344px;" width="24" height="24" viewBox="0 0 24 24"><path d="M0.500 23v-11h8.500v-11h14.500v22z" fill="#a0a0a0" stroke="#8a8a8a" stroke-width="1"/><circle cx="19" cy="11" r="5" fill="#fff"/><circle cx="19.500" cy="11" r="1.600" fill="#545454"/><path d="M19 11h4.500" stroke="#545454" stroke-width="1.600"/></svg><svg class="a" style="left:1660.5px;top:379px;" width="24" height="24" viewBox="0 0 24 24"><rect x="8.500" y="1" width="14.500" height="22" fill="#fff"/><rect x="0.500" y="12" width="8" height="11" fill="#fff"/><svg x="8.500" y="1" width="14.500" height="22" viewBox="8.500 1 14.500 22" style="overflow:hidden"><path d="M-30.0 -2l30 30" stroke="#545454" stroke-width="1.900"/><path d="M-25.4 -2l30 30" stroke="#545454" stroke-width="1.900"/><path d="M-20.8 -2l30 30" stroke="#545454" stroke-width="1.900"/><path d="M-16.2 -2l30 30" stroke="#545454" stroke-width="1.900"/><path d="M-11.6 -2l30 30" stroke="#545454" stroke-width="1.900"/><path d="M-7.0 -2l30 30" stroke="#545454" stroke-width="1.900"/><path d="M-2.4 -2l30 30" stroke="#545454" stroke-width="1.900"/><path d="M2.2 -2l30 30" stroke="#545454" stroke-width="1.900"/><path d="M6.8 -2l30 30" stroke="#545454" stroke-width="1.900"/><path d="M11.4 -2l30 30" stroke="#545454" stroke-width="1.900"/><path d="M16.0 -2l30 30" stroke="#545454" stroke-width="1.900"/><path d="M20.6 -2l30 30" stroke="#545454" stroke-width="1.900"/><path d="M25.2 -2l30 30" stroke="#545454" stroke-width="1.900"/><path d="M29.8 -2l30 30" stroke="#545454" stroke-width="1.900"/><path d="M34.4 -2l30 30" stroke="#545454" stroke-width="1.900"/><path d="M39.0 -2l30 30" stroke="#545454" stroke-width="1.900"/></svg><svg x="0.500" y="12" width="8" height="11" viewBox="0.500 12 8 11" style="overflow:hidden"><path d="M-30.0 -2l30 30" stroke="#545454" stroke-width="1.900"/><path d="M-25.4 -2l30 30" stroke="#545454" stroke-width="1.900"/><path d="M-20.8 -2l30 30" stroke="#545454" stroke-width="1.900"/><path d="M-16.2 -2l30 30" stroke="#545454" stroke-width="1.900"/><path d="M-11.6 -2l30 30" stroke="#545454" stroke-width="1.900"/><path d="M-7.0 -2l30 30" stroke="#545454" stroke-width="1.900"/><path d="M-2.4 -2l30 30" stroke="#545454" stroke-width="1.900"/><path d="M2.2 -2l30 30" stroke="#545454" stroke-width="1.900"/><path d="M6.8 -2l30 30" stroke="#545454" stroke-width="1.900"/><path d="M11.4 -2l30 30" stroke="#545454" stroke-width="1.900"/><path d="M16.0 -2l30 30" stroke="#545454" stroke-width="1.900"/><path d="M20.6 -2l30 30" stroke="#545454" stroke-width="1.900"/><path d="M25.2 -2l30 30" stroke="#545454" stroke-width="1.900"/><path d="M29.8 -2l30 30" stroke="#545454" stroke-width="1.900"/><path d="M34.4 -2l30 30" stroke="#545454" stroke-width="1.900"/><path d="M39.0 -2l30 30" stroke="#545454" stroke-width="1.900"/></svg><path d="M0.500 23v-11h8v-11h14.500v22z" fill="none" stroke="#545454" stroke-width="1.300"/></svg><div class="a" style="left:1658px;top:412.5px;width:29px;height:1px;background:#8c8c8c;"></div><svg class="a" style="left:1660.5px;top:422px;" width="24" height="24" viewBox="0 0 24 24"><path d="M2.500 21l18-18.500" stroke="#545454" stroke-width="1.600" stroke-linecap="round"/></svg><svg class="a" style="left:1660.5px;top:457px;" width="24" height="24" viewBox="0 0 24 24"><path d="M1 20.500c1.500-9 9-15.500 21.500-15.500" fill="none" stroke="#545454" stroke-width="1.600" stroke-linecap="round"/></svg><svg class="a" style="left:1660.5px;top:492px;" width="24" height="24" viewBox="0 0 24 24"><rect x="3" y="4.500" width="18" height="15" fill="#f8f8f8" stroke="#545454" stroke-width="1"/></svg><svg class="a" style="left:1660.5px;top:527px;" width="24" height="24" viewBox="0 0 24 24"><circle cx="12" cy="12" r="10.300" fill="#fff" stroke="#545454" stroke-width="1"/></svg><svg class="a" style="left:1660.5px;top:562px;" width="24" height="24" viewBox="0 0 24 24"><path d="M1.500 12l5.300-9.300h10.400l5.300 9.300-5.300 9.300h-10.400z" fill="#fff" stroke="#545454" stroke-width="1"/></svg><svg class="a" style="left:1660.5px;top:597px;" width="24" height="24" viewBox="0 0 24 24"><path d="M2.500 2.500h19v5.500h-1.200c-.5-2.700-1.500-3.700-4.300-3.700h-1.500v14.500c0 1.500.7 2 2.500 2v1.200h-10v-1.200c1.800 0 2.500-.5 2.500-2v-14.500h-1.500c-2.800 0-3.800 1-4.300 3.700h-1.200z" fill="#545454"/></svg><svg class="a" style="left:1660.5px;top:632px;" width="24" height="24" viewBox="0 0 24 24"><path d="M5 18.500l11.500-11.500" stroke="#545454" stroke-width="1"/><path d="M1 15l6 7M13 1.500l6 6.500" stroke="#545454" stroke-width="1"/><path d="M5 18.500l1-3.500 2.500 2.500zM16.500 7l-1 3.500-2.500-2.500z" fill="#545454"/><circle cx="7" cy="22" r="2.600" fill="#545454"/><circle cx="21" cy="8" r="2.600" fill="#545454"/></svg><svg class="a" style="left:1660.5px;top:667px;" width="24" height="24" viewBox="0 0 24 24"><circle cx="12" cy="12" r="9" fill="#a8a8a8"/><path d="M12 3a9 9 0 0 1 9 9h-9zM12 21a9 9 0 0 1-9-9h9z" fill="#545454"/><path d="M12 0v24M0 12h24" stroke="#545454" stroke-width="1.200"/></svg><svg class="a" style="left:1660.5px;top:702px;" width="24" height="24" viewBox="0 0 24 24"><path d="M3.500 6.500h17l-1.500 16a1.500 1.500 0 0 1-1.500 1h-11a1.500 1.500 0 0 1-1.500-1z" fill="#b0b0b0" stroke="#9a9a9a" stroke-width="1"/><path d="M1 5h22" stroke="#9a9a9a" stroke-width="2"/><path d="M8.500 4.500v-2.500h7v2.500" fill="none" stroke="#9a9a9a" stroke-width="1.500"/><path d="M9.500 11v8M14.500 11v8" stroke="#545454" stroke-width="1.800"/></svg><div class="a" style="left:1658px;top:735.5px;width:29px;height:1px;background:#8c8c8c;"></div><svg class="a" style="left:1660.5px;top:745px;" width="24" height="24" viewBox="0 0 24 24"><circle cx="14" cy="9.500" r="7.500" fill="#a8a8a8"/><path d="M14 2a7.500 7.500 0 0 1 7.500 7.500h-7.500zM14 17a7.500 7.500 0 0 1-7.500-7.500h7.500z" fill="#545454"/><path d="M2.500 1v21h21" fill="none" stroke="#545454" stroke-width="1.200"/><path d="M1 3.500l1.500-3 1.500 3zM21 20.500l3 1.500-3 1.500z" fill="#545454"/><path d="M28.500 20.500v8.500h-8.500z" fill="#000"/></svg><svg class="a" style="left:1660.5px;top:780px;" width="24" height="24" viewBox="0 0 24 24"><g transform="rotate(-38 12 12)"><rect x="-1" y="7.500" width="26" height="9" fill="#a8a8a8" stroke="#8a8a8a" stroke-width="1.400"/><path d="M3 16v-3M6.500 16v-2M10 16v-3M13.500 16v-2M17 16v-3M20.500 16v-2" stroke="#e0e0e0" stroke-width=".9"/></g></svg><div class="a" style="left:1691px;top:118px;width:4px;height:862px;background:#e0e0e0;"></div><div class="a" style="left:1695px;top:117px;width:225px;height:20px;background:linear-gradient(90deg,#b4b4b4,#c0c0c0);"></div><div class="t" style="top:126.84px;left:1698px;letter-spacing:-0.10px;">外观</div><div class="a" style="left:1696px;top:138px;width:57px;height:22px;background:#fff;"></div><div class="a" style="left:1752.5px;top:140px;width:52px;height:19px;background:#f0f0f0;border:1px solid #d9d9d9;box-sizing:border-box;"></div><div class="a" style="left:1804px;top:140px;width:52.5px;height:19px;background:#f0f0f0;border:1px solid #d9d9d9;box-sizing:border-box;"></div><div class="t" style="top:147.84px;left:1703.5px;letter-spacing:0px;">层</div><div class="t" style="top:149.84px;left:1757.6px;letter-spacing:0.30px;">对象</div><div class="t" style="top:149.84px;left:1811.3px;letter-spacing:0.50px;">网络</div><div class="a" style="left:1696px;top:159px;width:222px;height:631px;background:#fff;"></div><div class="a" style="left:1699px;top:159.5px;width:218.5px;height:605.5px;background:#f0f0f0;border:1px solid #dcdcdc;border-bottom:none;box-sizing:border-box;"></div><div class="a" style="left:1699.5px;top:160.5px;width:216.5px;height:17px;background:#e0e0e0;"></div><svg class="a" style="left:1705.5px;top:164px;" width="6" height="10" viewBox="0 0 6 10"><path d="M0 0l5.500 5-5.500 5z" fill="#3c3cd0"/></svg><div class="a" style="left:1716px;top:163.0px;width:14px;height:13px;background:#840000;"></div><svg class="a" style="left:1736px;top:164.8px;" width="15" height="9.4" viewBox="0 0 15 9.4"><path d="M0.500 4.700c2-3.100 4.500-4.200 7-4.200s5 1.100 7 4.200c-2 3.100-4.500 4.200-7 4.200s-5-1.100-7-4.200z" fill="#f4f4f4" stroke="#707070" stroke-width="1.100"/><circle cx="7.500" cy="4.700" r="2.200" fill="#f4f4f4" stroke="#707070" stroke-width="1.200"/></svg><div class="m" style="top:170.60px;left:1757px;font-size:12.4px;letter-spacing:-0.44px;">F.Cu</div><div class="a" style="left:1716px;top:180.0px;width:14px;height:13px;background:#008400;"></div><svg class="a" style="left:1736px;top:181.8px;" width="15" height="9.4" viewBox="0 0 15 9.4"><path d="M0.500 4.700c2-3.100 4.500-4.200 7-4.200s5 1.100 7 4.200c-2 3.100-4.500 4.200-7 4.200s-5-1.100-7-4.200z" fill="#f4f4f4" stroke="#707070" stroke-width="1.100"/><circle cx="7.500" cy="4.700" r="2.200" fill="#f4f4f4" stroke="#707070" stroke-width="1.200"/></svg><div class="m" style="top:187.60px;left:1757px;font-size:12.4px;letter-spacing:-0.44px;">B.Cu</div><div class="a" style="left:1716px;top:197.0px;width:14px;height:13px;background:#840084;"></div><svg class="a" style="left:1736px;top:198.8px;" width="15" height="9.4" viewBox="0 0 15 9.4"><path d="M0.500 4.700c2-3.100 4.500-4.200 7-4.200s5 1.100 7 4.200c-2 3.100-4.500 4.200-7 4.200s-5-1.100-7-4.200z" fill="#f4f4f4" stroke="#707070" stroke-width="1.100"/><circle cx="7.500" cy="4.700" r="2.200" fill="#f4f4f4" stroke="#707070" stroke-width="1.200"/></svg><div class="m" style="top:204.60px;left:1757px;font-size:12.4px;letter-spacing:-0.44px;">F.Adhesive</div><div class="a" style="left:1716px;top:214.0px;width:14px;height:13px;background:#000084;"></div><svg class="a" style="left:1736px;top:215.8px;" width="15" height="9.4" viewBox="0 0 15 9.4"><path d="M0.500 4.700c2-3.100 4.500-4.200 7-4.200s5 1.100 7 4.200c-2 3.100-4.500 4.200-7 4.200s-5-1.100-7-4.200z" fill="#f4f4f4" stroke="#707070" stroke-width="1.100"/><circle cx="7.500" cy="4.700" r="2.200" fill="#f4f4f4" stroke="#707070" stroke-width="1.200"/></svg><div class="m" style="top:221.60px;left:1757px;font-size:12.4px;letter-spacing:-0.44px;">B.Adhesive</div><div class="a" style="left:1716px;top:231.0px;width:14px;height:13px;background:#840000;"></div><svg class="a" style="left:1736px;top:232.8px;" width="15" height="9.4" viewBox="0 0 15 9.4"><path d="M0.500 4.700c2-3.100 4.500-4.200 7-4.200s5 1.100 7 4.200c-2 3.100-4.500 4.200-7 4.200s-5-1.100-7-4.200z" fill="#f4f4f4" stroke="#707070" stroke-width="1.100"/><circle cx="7.500" cy="4.700" r="2.200" fill="#f4f4f4" stroke="#707070" stroke-width="1.200"/></svg><div class="m" style="top:238.60px;left:1757px;font-size:12.4px;letter-spacing:-0.44px;">F.Paste</div><div class="a" style="left:1716px;top:248.0px;width:14px;height:13px;background:#00c2c2;"></div><svg class="a" style="left:1736px;top:249.8px;" width="15" height="9.4" viewBox="0 0 15 9.4"><path d="M0.500 4.700c2-3.100 4.500-4.200 7-4.200s5 1.100 7 4.200c-2 3.100-4.500 4.200-7 4.200s-5-1.100-7-4.200z" fill="#f4f4f4" stroke="#707070" stroke-width="1.100"/><circle cx="7.500" cy="4.700" r="2.200" fill="#f4f4f4" stroke="#707070" stroke-width="1.200"/></svg><div class="m" style="top:255.60px;left:1757px;font-size:12.4px;letter-spacing:-0.44px;">B.Paste</div><div class="a" style="left:1716px;top:265.0px;width:14px;height:13px;background:#008484;"></div><svg class="a" style="left:1736px;top:266.8px;" width="15" height="9.4" viewBox="0 0 15 9.4"><path d="M0.500 4.700c2-3.100 4.500-4.200 7-4.200s5 1.100 7 4.200c-2 3.100-4.500 4.200-7 4.200s-5-1.100-7-4.200z" fill="#f4f4f4" stroke="#707070" stroke-width="1.100"/><circle cx="7.500" cy="4.700" r="2.200" fill="#f4f4f4" stroke="#707070" stroke-width="1.200"/></svg><div class="m" style="top:272.60px;left:1757px;font-size:12.4px;letter-spacing:-0.44px;">F.Silkscreen</div><div class="a" style="left:1716px;top:282.0px;width:14px;height:13px;background:#840084;"></div><svg class="a" style="left:1736px;top:283.8px;" width="15" height="9.4" viewBox="0 0 15 9.4"><path d="M0.500 4.700c2-3.100 4.500-4.200 7-4.200s5 1.100 7 4.200c-2 3.100-4.500 4.200-7 4.200s-5-1.100-7-4.200z" fill="#f4f4f4" stroke="#707070" stroke-width="1.100"/><circle cx="7.500" cy="4.700" r="2.200" fill="#f4f4f4" stroke="#707070" stroke-width="1.200"/></svg><div class="m" style="top:289.60px;left:1757px;font-size:12.4px;letter-spacing:-0.44px;">B.Silkscreen</div><div class="a" style="left:1716px;top:299.0px;width:14px;height:13px;background:#840084;"></div><svg class="a" style="left:1736px;top:300.8px;" width="15" height="9.4" viewBox="0 0 15 9.4"><path d="M0.500 4.700c2-3.100 4.500-4.200 7-4.200s5 1.100 7 4.200c-2 3.100-4.500 4.200-7 4.200s-5-1.100-7-4.200z" fill="#f4f4f4" stroke="#707070" stroke-width="1.100"/><circle cx="7.500" cy="4.700" r="2.200" fill="#f4f4f4" stroke="#707070" stroke-width="1.200"/></svg><div class="m" style="top:306.60px;left:1757px;font-size:12.4px;letter-spacing:-0.44px;">F.Mask</div><div class="a" style="left:1716px;top:316.0px;width:14px;height:13px;background:#848400;"></div><svg class="a" style="left:1736px;top:317.8px;" width="15" height="9.4" viewBox="0 0 15 9.4"><path d="M0.500 4.700c2-3.100 4.500-4.200 7-4.200s5 1.100 7 4.200c-2 3.100-4.500 4.200-7 4.200s-5-1.100-7-4.200z" fill="#f4f4f4" stroke="#707070" stroke-width="1.100"/><circle cx="7.500" cy="4.700" r="2.200" fill="#f4f4f4" stroke="#707070" stroke-width="1.200"/></svg><div class="m" style="top:323.60px;left:1757px;font-size:12.4px;letter-spacing:-0.44px;">B.Mask</div><div class="a" style="left:1716px;top:333.0px;width:14px;height:13px;background:#c2c2c2;"></div><svg class="a" style="left:1736px;top:334.8px;" width="15" height="9.4" viewBox="0 0 15 9.4"><path d="M0.500 4.700c2-3.100 4.500-4.200 7-4.200s5 1.100 7 4.200c-2 3.100-4.500 4.200-7 4.200s-5-1.100-7-4.200z" fill="#f4f4f4" stroke="#707070" stroke-width="1.100"/><circle cx="7.500" cy="4.700" r="2.200" fill="#f4f4f4" stroke="#707070" stroke-width="1.200"/></svg><div class="m" style="top:340.60px;left:1757px;font-size:12.4px;letter-spacing:-0.44px;">User.Drawings</div><div class="a" style="left:1716px;top:350.0px;width:14px;height:13px;background:#000084;"></div><svg class="a" style="left:1736px;top:351.8px;" width="15" height="9.4" viewBox="0 0 15 9.4"><path d="M0.500 4.700c2-3.100 4.500-4.200 7-4.200s5 1.100 7 4.200c-2 3.100-4.500 4.200-7 4.200s-5-1.100-7-4.200z" fill="#f4f4f4" stroke="#707070" stroke-width="1.100"/><circle cx="7.500" cy="4.700" r="2.200" fill="#f4f4f4" stroke="#707070" stroke-width="1.200"/></svg><div class="m" style="top:357.60px;left:1757px;font-size:12.4px;letter-spacing:-0.44px;">User.Comments</div><div class="a" style="left:1716px;top:367.0px;width:14px;height:13px;background:#008400;"></div><svg class="a" style="left:1736px;top:368.8px;" width="15" height="9.4" viewBox="0 0 15 9.4"><path d="M0.500 4.700c2-3.100 4.500-4.200 7-4.200s5 1.100 7 4.200c-2 3.100-4.500 4.200-7 4.200s-5-1.100-7-4.200z" fill="#f4f4f4" stroke="#707070" stroke-width="1.100"/><circle cx="7.500" cy="4.700" r="2.200" fill="#f4f4f4" stroke="#707070" stroke-width="1.200"/></svg><div class="m" style="top:374.60px;left:1757px;font-size:12.4px;letter-spacing:-0.44px;">User.Eco1</div><div class="a" style="left:1716px;top:384.0px;width:14px;height:13px;background:#c2c200;"></div><svg class="a" style="left:1736px;top:385.8px;" width="15" height="9.4" viewBox="0 0 15 9.4"><path d="M0.500 4.700c2-3.100 4.500-4.200 7-4.200s5 1.100 7 4.200c-2 3.100-4.500 4.200-7 4.200s-5-1.100-7-4.200z" fill="#f4f4f4" stroke="#707070" stroke-width="1.100"/><circle cx="7.500" cy="4.700" r="2.200" fill="#f4f4f4" stroke="#707070" stroke-width="1.200"/></svg><div class="m" style="top:391.60px;left:1757px;font-size:12.4px;letter-spacing:-0.44px;">User.Eco2</div><div class="a" style="left:1716px;top:401.0px;width:14px;height:13px;background:#c2c200;"></div><svg class="a" style="left:1736px;top:402.8px;" width="15" height="9.4" viewBox="0 0 15 9.4"><path d="M0.500 4.700c2-3.100 4.500-4.200 7-4.200s5 1.100 7 4.200c-2 3.100-4.500 4.200-7 4.200s-5-1.100-7-4.200z" fill="#f4f4f4" stroke="#707070" stroke-width="1.100"/><circle cx="7.500" cy="4.700" r="2.200" fill="#f4f4f4" stroke="#707070" stroke-width="1.200"/></svg><div class="m" style="top:408.60px;left:1757px;font-size:12.4px;letter-spacing:-0.44px;">Edge.Cuts</div><div class="a" style="left:1716px;top:418.0px;width:14px;height:13px;background:#c200c2;"></div><svg class="a" style="left:1736px;top:419.8px;" width="15" height="9.4" viewBox="0 0 15 9.4"><path d="M0.500 4.700c2-3.100 4.500-4.200 7-4.200s5 1.100 7 4.200c-2 3.100-4.500 4.200-7 4.200s-5-1.100-7-4.200z" fill="#f4f4f4" stroke="#707070" stroke-width="1.100"/><circle cx="7.500" cy="4.700" r="2.200" fill="#f4f4f4" stroke="#707070" stroke-width="1.200"/></svg><div class="m" style="top:425.60px;left:1757px;font-size:12.4px;letter-spacing:-0.44px;">Margin</div><div class="a" style="left:1716px;top:435.0px;width:14px;height:13px;background:#c2c2c2;"></div><svg class="a" style="left:1736px;top:436.8px;" width="15" height="9.4" viewBox="0 0 15 9.4"><path d="M0.500 4.700c2-3.100 4.500-4.200 7-4.200s5 1.100 7 4.200c-2 3.100-4.500 4.200-7 4.200s-5-1.100-7-4.200z" fill="#f4f4f4" stroke="#707070" stroke-width="1.100"/><circle cx="7.500" cy="4.700" r="2.200" fill="#f4f4f4" stroke="#707070" stroke-width="1.200"/></svg><div class="m" style="top:442.60px;left:1757px;font-size:12.4px;letter-spacing:-0.44px;">F.Courtyard</div><div class="a" style="left:1716px;top:452.0px;width:14px;height:13px;background:#848484;"></div><svg class="a" style="left:1736px;top:453.8px;" width="15" height="9.4" viewBox="0 0 15 9.4"><path d="M0.500 4.700c2-3.100 4.500-4.200 7-4.200s5 1.100 7 4.200c-2 3.100-4.500 4.200-7 4.200s-5-1.100-7-4.200z" fill="#f4f4f4" stroke="#707070" stroke-width="1.100"/><circle cx="7.500" cy="4.700" r="2.200" fill="#f4f4f4" stroke="#707070" stroke-width="1.200"/></svg><div class="m" style="top:459.60px;left:1757px;font-size:12.4px;letter-spacing:-0.44px;">B.Courtyard</div><div class="a" style="left:1716px;top:469.0px;width:14px;height:13px;background:#848484;"></div><svg class="a" style="left:1736px;top:470.8px;" width="15" height="9.4" viewBox="0 0 15 9.4"><path d="M0.500 4.700c2-3.100 4.500-4.200 7-4.200s5 1.100 7 4.200c-2 3.100-4.500 4.200-7 4.200s-5-1.100-7-4.200z" fill="#f4f4f4" stroke="#707070" stroke-width="1.100"/><circle cx="7.500" cy="4.700" r="2.200" fill="#f4f4f4" stroke="#707070" stroke-width="1.200"/></svg><div class="m" style="top:476.60px;left:1757px;font-size:12.4px;letter-spacing:-0.44px;">F.Fab</div><div class="a" style="left:1716px;top:486.0px;width:14px;height:13px;background:#000084;"></div><svg class="a" style="left:1736px;top:487.8px;" width="15" height="9.4" viewBox="0 0 15 9.4"><path d="M0.500 4.700c2-3.100 4.500-4.200 7-4.200s5 1.100 7 4.200c-2 3.100-4.500 4.200-7 4.200s-5-1.100-7-4.200z" fill="#f4f4f4" stroke="#707070" stroke-width="1.100"/><circle cx="7.500" cy="4.700" r="2.200" fill="#f4f4f4" stroke="#707070" stroke-width="1.200"/></svg><div class="m" style="top:493.60px;left:1757px;font-size:12.4px;letter-spacing:-0.44px;">B.Fab</div><div class="a" style="left:1716px;top:503.0px;width:14px;height:13px;background:#c2c2c2;"></div><svg class="a" style="left:1736px;top:504.8px;" width="15" height="9.4" viewBox="0 0 15 9.4"><path d="M0.500 4.700c2-3.100 4.500-4.200 7-4.200s5 1.100 7 4.200c-2 3.100-4.500 4.200-7 4.200s-5-1.100-7-4.200z" fill="#f4f4f4" stroke="#707070" stroke-width="1.100"/><circle cx="7.500" cy="4.700" r="2.200" fill="#f4f4f4" stroke="#707070" stroke-width="1.200"/></svg><div class="m" style="top:510.60px;left:1757px;font-size:12.4px;letter-spacing:-0.44px;">User.1</div><div class="a" style="left:1716px;top:520.0px;width:14px;height:13px;background:#5994dc;"></div><svg class="a" style="left:1736px;top:521.8px;" width="15" height="9.4" viewBox="0 0 15 9.4"><path d="M0.500 4.700c2-3.100 4.500-4.200 7-4.200s5 1.100 7 4.200c-2 3.100-4.500 4.200-7 4.200s-5-1.100-7-4.200z" fill="#f4f4f4" stroke="#707070" stroke-width="1.100"/><circle cx="7.500" cy="4.700" r="2.200" fill="#f4f4f4" stroke="#707070" stroke-width="1.200"/></svg><div class="m" style="top:527.60px;left:1757px;font-size:12.4px;letter-spacing:-0.44px;">User.2</div><div class="a" style="left:1716px;top:537.0px;width:14px;height:13px;background:#b4dbd2;"></div><svg class="a" style="left:1736px;top:538.8px;" width="15" height="9.4" viewBox="0 0 15 9.4"><path d="M0.500 4.700c2-3.100 4.500-4.200 7-4.200s5 1.100 7 4.200c-2 3.100-4.500 4.200-7 4.200s-5-1.100-7-4.200z" fill="#f4f4f4" stroke="#707070" stroke-width="1.100"/><circle cx="7.500" cy="4.700" r="2.200" fill="#f4f4f4" stroke="#707070" stroke-width="1.200"/></svg><div class="m" style="top:544.60px;left:1757px;font-size:12.4px;letter-spacing:-0.44px;">User.3</div><div class="a" style="left:1716px;top:554.0px;width:14px;height:13px;background:#d8c852;"></div><svg class="a" style="left:1736px;top:555.8px;" width="15" height="9.4" viewBox="0 0 15 9.4"><path d="M0.500 4.700c2-3.100 4.500-4.200 7-4.200s5 1.100 7 4.200c-2 3.100-4.500 4.200-7 4.200s-5-1.100-7-4.200z" fill="#f4f4f4" stroke="#707070" stroke-width="1.100"/><circle cx="7.500" cy="4.700" r="2.200" fill="#f4f4f4" stroke="#707070" stroke-width="1.200"/></svg><div class="m" style="top:561.60px;left:1757px;font-size:12.4px;letter-spacing:-0.44px;">User.4</div><div class="a" style="left:1716px;top:571.0px;width:14px;height:13px;background:#c2c2c2;"></div><svg class="a" style="left:1736px;top:572.8px;" width="15" height="9.4" viewBox="0 0 15 9.4"><path d="M0.500 4.700c2-3.100 4.500-4.200 7-4.200s5 1.100 7 4.200c-2 3.100-4.500 4.200-7 4.200s-5-1.100-7-4.200z" fill="#f4f4f4" stroke="#707070" stroke-width="1.100"/><circle cx="7.500" cy="4.700" r="2.200" fill="#f4f4f4" stroke="#707070" stroke-width="1.200"/></svg><div class="m" style="top:578.60px;left:1757px;font-size:12.4px;letter-spacing:-0.44px;">User.5</div><div class="a" style="left:1716px;top:588.0px;width:14px;height:13px;background:#5994dc;"></div><svg class="a" style="left:1736px;top:589.8px;" width="15" height="9.4" viewBox="0 0 15 9.4"><path d="M0.500 4.700c2-3.100 4.500-4.200 7-4.200s5 1.100 7 4.200c-2 3.100-4.500 4.200-7 4.200s-5-1.100-7-4.200z" fill="#f4f4f4" stroke="#707070" stroke-width="1.100"/><circle cx="7.500" cy="4.700" r="2.200" fill="#f4f4f4" stroke="#707070" stroke-width="1.200"/></svg><div class="m" style="top:595.60px;left:1757px;font-size:12.4px;letter-spacing:-0.44px;">User.6</div><div class="a" style="left:1716px;top:605.0px;width:14px;height:13px;background:#b4dbd2;"></div><svg class="a" style="left:1736px;top:606.8px;" width="15" height="9.4" viewBox="0 0 15 9.4"><path d="M0.500 4.700c2-3.100 4.500-4.200 7-4.200s5 1.100 7 4.200c-2 3.100-4.500 4.200-7 4.200s-5-1.100-7-4.200z" fill="#f4f4f4" stroke="#707070" stroke-width="1.100"/><circle cx="7.500" cy="4.700" r="2.200" fill="#f4f4f4" stroke="#707070" stroke-width="1.200"/></svg><div class="m" style="top:612.60px;left:1757px;font-size:12.4px;letter-spacing:-0.44px;">User.7</div><div class="a" style="left:1716px;top:622.0px;width:14px;height:13px;background:#d8c852;"></div><svg class="a" style="left:1736px;top:623.8px;" width="15" height="9.4" viewBox="0 0 15 9.4"><path d="M0.500 4.700c2-3.100 4.500-4.200 7-4.200s5 1.100 7 4.200c-2 3.100-4.500 4.200-7 4.200s-5-1.100-7-4.200z" fill="#f4f4f4" stroke="#707070" stroke-width="1.100"/><circle cx="7.500" cy="4.700" r="2.200" fill="#f4f4f4" stroke="#707070" stroke-width="1.200"/></svg><div class="m" style="top:629.60px;left:1757px;font-size:12.4px;letter-spacing:-0.44px;">User.8</div><div class="a" style="left:1716px;top:639.0px;width:14px;height:13px;background:#e8b2a7;"></div><svg class="a" style="left:1736px;top:640.8px;" width="15" height="9.4" viewBox="0 0 15 9.4"><path d="M0.500 4.700c2-3.100 4.500-4.200 7-4.200s5 1.100 7 4.200c-2 3.100-4.500 4.200-7 4.200s-5-1.100-7-4.200z" fill="#f4f4f4" stroke="#707070" stroke-width="1.100"/><circle cx="7.500" cy="4.700" r="2.200" fill="#f4f4f4" stroke="#707070" stroke-width="1.200"/></svg><div class="m" style="top:646.60px;left:1757px;font-size:12.4px;letter-spacing:-0.44px;">User.9</div><svg class="a" style="left:1705px;top:771px;" width="5" height="9" viewBox="0 0 5 9"><path d="M0 0l4.500 4.500-4.500 4.500z" fill="#000"/></svg><div class="t" style="top:776.50px;left:1711.5px;font-size:13px;letter-spacing:-0.18px;">图层显示选项</div><div class="m" style="top:806.67px;left:1703px;font-size:12.5px;">预设:</div><div class="m" style="top:806.70px;left:1845px;font-size:12.4px;letter-spacing:-0.84px;">(Ctrl+Tab)</div><div class="a" style="left:1702px;top:815px;width:211px;height:21px;background:linear-gradient(#e8e8e8,#dfdfdf);border:1px solid #adadad;box-sizing:border-box;"></div><div class="t" style="top:825.50px;left:1707px;font-size:13px;letter-spacing:-0.43px;">所有图层</div><svg class="a" style="left:1900px;top:823.5px;" width="8" height="4.5" viewBox="0 0 8 4.5"><path d="M0.300 0.300l3.700 3.700 3.700-3.700" fill="none" stroke="#444" stroke-width="1.100"/></svg><div class="a" style="left:1695px;top:849px;width:225px;height:20px;background:linear-gradient(90deg,#b4b4b4,#c0c0c0);"></div><div class="t" style="top:858.84px;left:1698.3px;color:#222;letter-spacing:-0.02px;">选择筛选器</div><svg class="a" style="left:1700px;top:876px;" width="13" height="13" viewBox="0 0 13 13"><rect x="0.500" y="0.500" width="12" height="12" fill="#fff" stroke="#333" stroke-width="1"/><path d="M2.800 6.500l2.700 3 4.800-6" fill="none" stroke="#333" stroke-width="1.200"/></svg><div class="t" style="top:883.64px;left:1716px;">所有项目</div><svg class="a" style="left:1777px;top:876px;" width="13" height="13" viewBox="0 0 13 13"><rect x="0.500" y="0.500" width="12" height="12" fill="#fff" stroke="#333" stroke-width="1"/></svg><div class="t" style="top:883.64px;left:1793px;">锁定项目</div><svg class="a" style="left:1700px;top:893px;" width="13" height="13" viewBox="0 0 13 13"><rect x="0.500" y="0.500" width="12" height="12" fill="#fff" stroke="#333" stroke-width="1"/><path d="M2.800 6.500l2.700 3 4.800-6" fill="none" stroke="#333" stroke-width="1.200"/></svg><div class="t" style="top:900.64px;left:1716px;">封装</div><svg class="a" style="left:1777px;top:893px;" width="13" height="13" viewBox="0 0 13 13"><rect x="0.500" y="0.500" width="12" height="12" fill="#fff" stroke="#333" stroke-width="1"/><path d="M2.800 6.500l2.700 3 4.800-6" fill="none" stroke="#333" stroke-width="1.200"/></svg><div class="t" style="top:900.64px;left:1793px;">文本</div><svg class="a" style="left:1700px;top:910px;" width="13" height="13" viewBox="0 0 13 13"><rect x="0.500" y="0.500" width="12" height="12" fill="#fff" stroke="#333" stroke-width="1"/><path d="M2.800 6.500l2.700 3 4.800-6" fill="none" stroke="#333" stroke-width="1.200"/></svg><div class="t" style="top:917.64px;left:1716px;">线路</div><svg class="a" style="left:1777px;top:910px;" width="13" height="13" viewBox="0 0 13 13"><rect x="0.500" y="0.500" width="12" height="12" fill="#fff" stroke="#333" stroke-width="1"/><path d="M2.800 6.500l2.700 3 4.800-6" fill="none" stroke="#333" stroke-width="1.200"/></svg><div class="t" style="top:917.64px;left:1793px;">过孔</div><svg class="a" style="left:1700px;top:927px;" width="13" height="13" viewBox="0 0 13 13"><rect x="0.500" y="0.500" width="12" height="12" fill="#fff" stroke="#333" stroke-width="1"/><path d="M2.800 6.500l2.700 3 4.800-6" fill="none" stroke="#333" stroke-width="1.200"/></svg><div class="t" style="top:934.64px;left:1716px;">焊盘</div><svg class="a" style="left:1777px;top:927px;" width="13" height="13" viewBox="0 0 13 13"><rect x="0.500" y="0.500" width="12" height="12" fill="#fff" stroke="#333" stroke-width="1"/><path d="M2.800 6.500l2.700 3 4.800-6" fill="none" stroke="#333" stroke-width="1.200"/></svg><div class="t" style="top:934.64px;left:1793px;">图形</div><svg class="a" style="left:1700px;top:944px;" width="13" height="13" viewBox="0 0 13 13"><rect x="0.500" y="0.500" width="12" height="12" fill="#fff" stroke="#333" stroke-width="1"/><path d="M2.800 6.500l2.700 3 4.800-6" fill="none" stroke="#333" stroke-width="1.200"/></svg><div class="t" style="top:951.64px;left:1716px;">覆铜</div><svg class="a" style="left:1777px;top:944px;" width="13" height="13" viewBox="0 0 13 13"><rect x="0.500" y="0.500" width="12" height="12" fill="#fff" stroke="#333" stroke-width="1"/><path d="M2.800 6.500l2.700 3 4.800-6" fill="none" stroke="#333" stroke-width="1.200"/></svg><div class="t" style="top:951.64px;left:1793px;">规则区域</div><svg class="a" style="left:1700px;top:961px;" width="13" height="13" viewBox="0 0 13 13"><rect x="0.500" y="0.500" width="12" height="12" fill="#fff" stroke="#333" stroke-width="1"/><path d="M2.800 6.500l2.700 3 4.800-6" fill="none" stroke="#333" stroke-width="1.200"/></svg><div class="t" style="top:968.64px;left:1716px;">尺寸</div><svg class="a" style="left:1777px;top:961px;" width="13" height="13" viewBox="0 0 13 13"><rect x="0.500" y="0.500" width="12" height="12" fill="#fff" stroke="#333" stroke-width="1"/><path d="M2.800 6.500l2.700 3 4.800-6" fill="none" stroke="#333" stroke-width="1.200"/></svg><div class="t" style="top:968.64px;left:1793px;">其他项目</div><div class="t" style="top:989.84px;left:12px;letter-spacing:0.05px;">选中项</div><div class="t" style="top:1006.84px;left:12.5px;letter-spacing:0.26px;">58</div><div class="a" style="left:0px;top:1015px;width:1920px;height:1px;background:#d4d4d4;"></div><div class="a" style="left:883px;top:1017px;width:1px;height:23px;background:#dcdcdc;"></div><div class="a" style="left:956px;top:1017px;width:1px;height:23px;background:#dcdcdc;"></div><div class="a" style="left:1153px;top:1017px;width:1px;height:23px;background:#dcdcdc;"></div><div class="a" style="left:1456px;top:1017px;width:1px;height:23px;background:#dcdcdc;"></div><div class="a" style="left:1681px;top:1017px;width:1px;height:23px;background:#dcdcdc;"></div><div class="a" style="left:1725px;top:1017px;width:1px;height:23px;background:#dcdcdc;"></div><div class="t" style="top:1028.84px;left:888.3px;color:#1a1a1a;letter-spacing:0.22px;">Z 1.08</div><div class="t" style="top:1028.84px;left:961px;color:#1a1a1a;letter-spacing:0.37px;">X -450.00  Y -300.00</div><div class="t" style="top:1028.84px;left:1158.3px;color:#1a1a1a;letter-spacing:0.43px;">r 540.83  theta 146.310</div><div class="t" style="top:1028.84px;left:1461.2px;color:#1a1a1a;letter-spacing:0.43px;">grid X 50.00 mils  Y 50.00 mils</div><div class="t" style="top:1028.84px;left:1686.2px;color:#1a1a1a;letter-spacing:0.43px;">mils</div><div class="t" style="top:1028.84px;left:1730px;color:#1a1a1a;letter-spacing:-0.13px;">选择项目</div><div class="a" style="left:0px;top:1040px;width:1920px;height:40px;background:#dbdcde;"></div><div class="a" style="left:345px;top:1040px;width:48.5px;height:40px;background:#f0f0f0;"></div><div class="a" style="left:443px;top:1040px;width:48px;height:40px;background:#f6b284;"></div><div class="a" style="left:448px;top:1037.5px;width:32px;height:3px;background:#f8dcc8;"></div><div class="a" style="left:104.3px;top:1078px;width:39.500000000000014px;height:2px;background:#1f7fd0;"></div><div class="a" style="left:345px;top:1078px;width:48.30000000000001px;height:2px;background:#1f7fd0;"></div><div class="a" style="left:398px;top:1078px;width:40px;height:2px;background:#1f7fd0;"></div><div class="a" style="left:496px;top:1078px;width:40px;height:2px;background:#1f7fd0;"></div><div class="a" style="left:545px;top:1078px;width:40px;height:2px;background:#1f7fd0;"></div><div class="a" style="left:594px;top:1078px;width:40px;height:2px;background:#1f7fd0;"></div><div class="a" style="left:643px;top:1078px;width:40px;height:2px;background:#1f7fd0;"></div><div class="a" style="left:692px;top:1078px;width:39.700000000000045px;height:2px;background:#1f7fd0;"></div><div class="a" style="left:443px;top:1078px;width:48px;height:2px;background:#f07018;"></div><svg class="a" style="left:15.5px;top:1052px;" width="17" height="16" viewBox="0 0 17 17"><path d="M0 2.300l7-1v6.700h-7zM8 1.200l9-1.200v8h-9zM0 9h7v6.700l-7-1zM8 9h9v8l-9-1.200z" fill="#000"/></svg><svg class="a" style="left:62.5px;top:1047.5px;" width="24" height="24" viewBox="0 0 24 24"><circle cx="12" cy="12" r="11.800" fill="#1565c0"/><path d="M1 9.500c1.500-6 6.500-9.300 11.500-9.300 6.500 0 11.300 4.500 11.300 9.800 0 3.500-2.500 5.500-5.500 5.500-2.500 0-3.500-1-3.500-2 0-1 1-1.300 1-3 0-2-2-4-5-4-4 0-7.500 1.500-9.800 3z" fill="#30b88a"/><path d="M1 9.500c1.200-5 5-8.300 9.500-9.100-3 2-5 5-5.500 7.500-1.500.5-3 1-4 1.600z" fill="#35c1f1"/><path d="M.3 12c0-4.500 4-6.500 8-6.500 3 0 5.500 1.500 5.500 4-1.200-1-2.500-1.200-4-1-3 .5-4.500 3-4 6.500.5 3.500 3.500 7 8 8.500-7 1.500-13.500-4-13.500-11.500z" fill="#1e88e5"/><path d="M9 12c0 3 2.500 5.500 6.500 5.500 2.500 0 5-.8 6.500-2.500-1.500 5-6 8.500-11 8.300-3-1.500-6-5.500-5.500-9.500.3-2.300 2-4.500 4.500-5-.7 1-1 2-1 3.200z" fill="#0d47a1"/><circle cx="14" cy="13" r="2.500" fill="#dcdcde"/></svg><svg class="a" style="left:113px;top:1050.5px;" width="22" height="18" viewBox="0 0 22 18"><path d="M0 1.500a1 1 0 0 1 1-1h8l1.500 2h-10.500z" fill="#e8a820"/><rect x="0" y="2.500" width="22" height="15" rx=".8" fill="#fcd462"/><path d="M0 8h22v9.500h-22z" fill="#f8c63c"/><path d="M4.500 17.500v-6.500h13v6.500h-3v-3.500h-7v3.500z" fill="#3a8ad8"/><rect x="7" y="11" width="8" height="2" fill="#5aa6e8"/></svg><svg class="a" style="left:160px;top:1048px;" width="27" height="24" viewBox="0 0 27 24"><ellipse cx="12" cy="9.500" rx="11.500" ry="7.500" transform="rotate(-18 12 9.500)" fill="#f4f0f0" stroke="#e0405a" stroke-width="1.200"/><path d="M7 8.500l11 8M15.500 5l-1.500 13" stroke="#707070" stroke-width="1.100"/><circle cx="14.500" cy="20.500" r="2.600" fill="none" stroke="#2878c8" stroke-width="1.700"/><circle cx="20.500" cy="17" r="2.600" fill="none" stroke="#2878c8" stroke-width="1.700"/></svg><svg class="a" style="left:209.5px;top:1047px;" width="25" height="26" viewBox="0 0 25 26"><circle cx="15" cy="10" r="7.300" fill="#e4e4e4" stroke="#e8700c" stroke-width="4.200"/><circle cx="15" cy="10" r="9.500" fill="none" stroke="#b04c00" stroke-width=".7"/><path d="M9 16l-6.500 7" stroke="#b04c00" stroke-width="5.200" stroke-linecap="round"/><path d="M9 16l-6.500 7" stroke="#f08020" stroke-width="3.800" stroke-linecap="round"/></svg><svg class="a" style="left:260.5px;top:1051.5px;" width="21" height="16.5" viewBox="0 0 21 16.5"><path d="M1.500 0h19.500v13l-3 3.500h-16.500a1.500 1.500 0 0 1-1.500-1.500v-13.500a1.500 1.500 0 0 1 1.500-1.500z" fill="#41b550"/><text x="10.300" y="12.300" font-size="11" font-weight="bold" fill="#eaffea" text-anchor="middle" textLength="16" lengthAdjust="spacingAndGlyphs">QC</text></svg><svg class="a" style="left:308px;top:1048px;" width="24" height="24" viewBox="0 0 24 24"><rect x="0" y="0" width="24" height="24" fill="#2c2c2c"/><path d="M4 3.500v17h5v-7h6v7h5v-17h-5v6.500h-6v-6.500z" fill="none" stroke="#fff" stroke-width="1.300"/><path d="M6.500 6v12M17.500 6v12M9 11.500h6" stroke="#2c2c2c" stroke-width="0"/><circle cx="4" cy="3.500" r="1.300" fill="#fff"/></svg><svg class="a" style="left:357px;top:1048px;" width="24" height="24" viewBox="0 0 24 24"><rect x="0" y="0" width="24" height="24" rx="4" fill="#146b14"/><path d="M4 0v9l5 5v10M8 0v7l5 5v12M12 0c0 6 3 8 12 8M17 0c0 3 2 4 7 4" fill="none" stroke="#48b838" stroke-width="1.500"/><circle cx="3.500" cy="14" r="1.800" fill="#e8e050"/><circle cx="20" cy="8.500" r="1.800" fill="#e8e050"/><rect x="16.500" y="14" width="5" height="5" fill="#d8a020"/><rect x="17.500" y="21.500" width="4" height="2.500" fill="#d8a020"/></svg><svg class="a" style="left:406px;top:1048px;" width="24" height="24" viewBox="0 0 24 24"><path d="M3 0h15l6 6v15a3 3 0 0 1-3 3h-18a3 3 0 0 1-3-3v-18a3 3 0 0 1 3-3z" fill="#3476dc"/><path d="M3 0h9v24h-9a3 3 0 0 1-3-3v-18a3 3 0 0 1 3-3z" fill="#48aae6"/><path d="M17 7c-2-2.500-9-3-10 1s9 3.500 10 7.500-8 4.500-11 1.500" fill="none" stroke="#fff" stroke-width="2.600"/><path d="M17 7c-2-2.500-9-3-10 1s9 3.500 10 7.500-8 4.500-11 1.500" fill="none" stroke="#3a8ae0" stroke-width="1"/></svg><svg class="a" style="left:454px;top:1049px;" width="28" height="23" viewBox="0 0 28 23"><ellipse cx="9" cy="8" rx="8.800" ry="7.800" fill="#2cc045"/><path d="M4 14l-1 4 5-2.500z" fill="#2cc045"/><circle cx="6" cy="5.500" r="1.100" fill="#1a8a30"/><circle cx="12" cy="5.500" r="1.100" fill="#1a8a30"/><ellipse cx="18.500" cy="14.500" rx="7.300" ry="6.300" fill="#f0f0f0"/><path d="M22.500 19l1.500 3.500-4.500-2z" fill="#f0f0f0"/><circle cx="16" cy="12.500" r=".9" fill="#b0b0b0"/><circle cx="21" cy="12.500" r=".9" fill="#b0b0b0"/></svg><svg class="a" style="left:504px;top:1048.5px;" width="24" height="22" viewBox="0 0 24 22"><rect x="6.500" y="0" width="17.500" height="22" rx="1.500" fill="#21a366"/><rect x="15" y="0" width="9" height="11" fill="#33c481"/><rect x="15" y="11" width="9" height="11" fill="#107c41"/><rect x="6.500" y="11" width="8.500" height="11" fill="#185c37"/><rect x="0" y="5" width="12.500" height="12.500" rx="1" fill="#107c41"/><text x="6.200" y="15" font-size="9.500" font-weight="bold" fill="#fff" text-anchor="middle">X</text></svg><svg class="a" style="left:553px;top:1048px;" width="24" height="24" viewBox="0 0 24 24"><circle cx="12" cy="12" r="11.500" fill="#fcc934"/><path d="M12 12L1.800 7A11.500 11.500 0 0 1 22.300 7z" fill="#e8453c"/><path d="M12 .5A11.500 11.500 0 0 1 22.300 7h-10.300z" fill="#e8453c"/><path d="M1.800 7A11.500 11.500 0 0 0 10 23.300L15 14 12 12z" fill="#34a853"/><path d="M2 6.800l5.500 9.500 4.500-4.300z" fill="#34a853"/><circle cx="12" cy="12" r="5.300" fill="#f4f4f4"/><circle cx="12" cy="12" r="4.200" fill="#4285f4"/></svg><svg class="a" style="left:603px;top:1049.5px;" width="22" height="22" viewBox="0 0 22 22"><circle cx="11" cy="11.500" r="8.500" fill="#c4d0e0" stroke="#6a8cb8" stroke-width="1.300"/><circle cx="11" cy="11.500" r="4.500" fill="#9cb4d4" stroke="#6a8cb8" stroke-width="1"/><circle cx="11" cy="2.500" r="2.200" fill="#c4d0e0" stroke="#6a8cb8" stroke-width="1.100"/><circle cx="3" cy="16" r="2.200" fill="#c4d0e0" stroke="#6a8cb8" stroke-width="1.100"/><circle cx="19" cy="16" r="2.200" fill="#c4d0e0" stroke="#6a8cb8" stroke-width="1.100"/></svg><svg class="a" style="left:651px;top:1048px;" width="24" height="24" viewBox="0 0 24 24"><rect x="0" y="0" width="24" height="24" rx="3" fill="#58b000"/><rect x="0" y="12" width="24" height="12" rx="3" fill="#3a8c00" opacity=".35"/><path d="M19.500 4h-12l-3 3v10l3 3.500h12l-3-3.500h-6.500v-10h7z" fill="#f4fff0"/></svg><svg class="a" style="left:700px;top:1048px;" width="24" height="24" viewBox="0 0 24 24"><rect x="0" y="0" width="24" height="24" rx="3" fill="#f05030"/><rect x="0" y="12" width="24" height="12" rx="3" fill="#e03820" opacity=".35"/><path d="M19.500 4h-12l-3 3v10l3 3.500h12l-3-3.500h-6.500v-10h7z" fill="#f4fff0"/></svg><svg class="a" style="left:1447px;top:1051.5px;" width="23" height="16" viewBox="0 0 23 16"><path d="M5.500 15.500a5 5 0 0 1-.5-10 7 7 0 0 1 12.500-1.500 5.800 5.800 0 0 1 0 11.500z" fill="#b4d4ee"/><path d="M6 9a4 4 0 0 1 1-3 6 6 0 0 1 9.500-1.500c-4 0-8 1.500-10.500 4.500z" fill="#e2effa"/></svg><div class="t" style="top:1060.30px;left:1478.7px;font-size:15px;color:#111;letter-spacing:-0.92px;">31°C</div><div class="t" style="top:1060.80px;left:1518px;font-size:15px;color:#111;letter-spacing:-0.74px;">空气优 48</div><svg class="a" style="left:1598px;top:1056px;" width="12" height="7" viewBox="0 0 12 7"><path d="M0.500 6.500l5.500-5.500 5.500 5.500" fill="none" stroke="#111" stroke-width="1.300"/></svg><svg class="a" style="left:1620px;top:1053px;" width="17" height="14" viewBox="0 0 17 14"><path d="M4 11.500a3.500 3.500 0 0 1-.3-7 5 5 0 0 1 9-1 4 4 0 0 1 .3 8z" fill="#9a9a9a" stroke="#222" stroke-width="1.200"/><path d="M2 .5l13 13" stroke="#222" stroke-width="1.300"/></svg><svg class="a" style="left:1645.5px;top:1052px;" width="12" height="16" viewBox="0 0 12 16"><rect x="3" y="0" width="6" height="10" rx="2.800" fill="#111"/><path d="M.8 7.500a5.200 5.200 0 0 0 10.400 0M6 12.700v2.300M3 15.500h6" fill="none" stroke="#111" stroke-width="1.200"/></svg><svg class="a" style="left:1668px;top:1054px;" width="17" height="11" viewBox="0 0 17 11"><rect x="5" y="2.500" width="10.500" height="7.500" fill="none" stroke="#111" stroke-width="1.200"/><rect x="15.500" y="4.500" width="1.500" height="3.500" fill="#111"/><rect x="6.500" y="4" width="5" height="4.500" fill="#111"/><path d="M2.500 0v3M.5 3h4v2.500a2 2 0 0 1-4 0zM2.500 7.500v3.500" fill="none" stroke="#111" stroke-width="1.100"/></svg><svg class="a" style="left:1694.5px;top:1054px;" width="13" height="13" viewBox="0 0 13 13"><path d="M1 12a11 11 0 0 1 11-11M4.500 12a7.500 7.500 0 0 1 7.500-7.500M8 12a4 4 0 0 1 4-4" fill="none" stroke="#222" stroke-width="1.300"/><circle cx="11" cy="11" r="1.500" fill="#111"/></svg><svg class="a" style="left:1716px;top:1053px;" width="17" height="14" viewBox="0 0 17 14"><path d="M.5 4.500h3l4-3.500v12l-4-3.500h-3z" fill="none" stroke="#111" stroke-width="1.100"/><path d="M9.500 4.500a3.500 3.500 0 0 1 0 5M11.500 2.500a6.500 6.500 0 0 1 0 9M13.500 .8a9 9 0 0 1 0 12.400" fill="none" stroke="#111" stroke-width="1.100"/></svg><div class="t" style="top:1060.30px;left:1739.5px;font-size:15px;color:#3a3a3a;">英</div><svg class="a" style="left:1766px;top:1051.5px;" width="18" height="17" viewBox="0 0 18 17"><path d="M2.500 2.500l12-2.500 3 12.500-12.500 4.500z" fill="#f0642c"/><path d="M13 5.500c-2-1.500-6.500-1.300-6.800.8s6.300 1.500 6.300 3.900-5.500 2.400-7.500 1" fill="none" stroke="#fff" stroke-width="2"/></svg><div class="t" style="top:1051.04px;left:1815px;font-size:12.3px;color:#111;letter-spacing:-0.04px;">23:24</div><div class="t" style="top:1069.34px;left:1801.2px;font-size:12.3px;color:#111;letter-spacing:0.45px;">2021/9/17</div><svg class="a" style="left:1879px;top:1052px;" width="17" height="16" viewBox="0 0 17 16"><path d="M0 0h16.500v12.500h-5l-3.200 3-3.200-3h-5.100z" fill="#000"/><path d="M3 3.500h10.500M3 6.200h10.500M3 8.900h7" stroke="#dbdcde" stroke-width="1"/></svg><div class="a" style="left:1915px;top:1040px;width:1px;height:40px;background:#b8b8b8;"></div>
</div>
</body></html>
